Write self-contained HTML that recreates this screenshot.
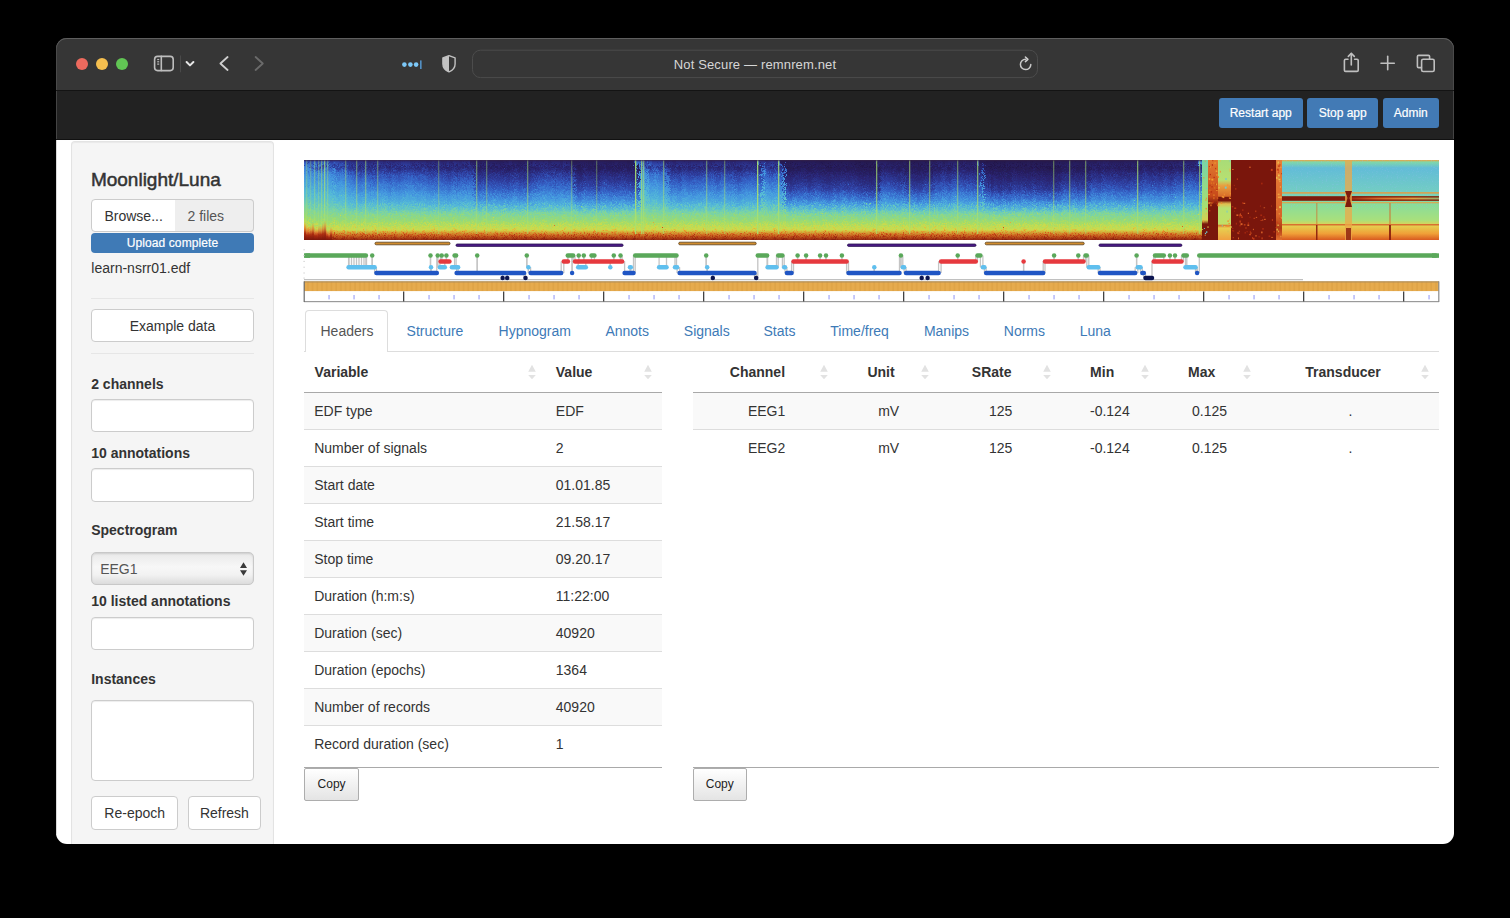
<!DOCTYPE html>
<html><head><meta charset="utf-8"><title>Moonlight/Luna</title>
<style>
html,body{margin:0;padding:0;background:#000;width:1510px;height:918px;overflow:hidden;}
body{position:relative;font-family:"Liberation Sans",sans-serif;}
.a{position:absolute;}
.t{position:absolute;white-space:nowrap;}
svg.a{overflow:visible;}
</style></head><body>
<div class="a" style="left:56.00px;top:38.00px;width:1398.00px;height:52.00px;background:#363636;border-radius:11px 11px 0 0;box-shadow:inset 0 1px 0 #5e5e5e, inset 1px 0 0 #4a4a4a, inset -1px 0 0 #4a4a4a;"></div>
<div class="a" style="left:56.00px;top:90.00px;width:1398.00px;height:1.00px;background:#141414;"></div>
<div class="a" style="left:56.00px;top:91.00px;width:1398.00px;height:49.00px;background:#222;box-shadow:inset 1px 0 0 #444, inset -1px 0 0 #444;"></div>
<div class="a" style="left:56.00px;top:139.00px;width:1398.00px;height:1.00px;background:#111;"></div>
<div class="a" style="left:75.8px;top:57.8px;width:12.4px;height:12.4px;border-radius:50%;background:#ed6a5e;"></div>
<div class="a" style="left:95.8px;top:57.8px;width:12.4px;height:12.4px;border-radius:50%;background:#f5bf4f;"></div>
<div class="a" style="left:115.8px;top:57.8px;width:12.4px;height:12.4px;border-radius:50%;background:#61c554;"></div>
<svg class="a" style="left:0;top:0" width="1510" height="100" viewBox="0 0 1510 100">
<g fill="none" stroke="#bdbdbd" stroke-width="1.6" stroke-linecap="round" stroke-linejoin="round">
<rect x="154.6" y="56.4" width="18.6" height="14.2" rx="3"/>
<line x1="161.3" y1="56.4" x2="161.3" y2="70.6"/>
</g>
<g stroke="#bdbdbd" stroke-width="1.2"><line x1="157.2" y1="59.5" x2="159.2" y2="59.5"/><line x1="157.2" y1="61.8" x2="159.2" y2="61.8"/><line x1="157.2" y1="64.1" x2="159.2" y2="64.1"/></g>
<line x1="180.5" y1="55.5" x2="180.5" y2="72.3" stroke="#4a4a4a" stroke-width="1"/>
<polyline points="186.6,62 190,65.4 193.4,62" fill="none" stroke="#e6e6e6" stroke-width="2" stroke-linecap="round" stroke-linejoin="round"/>
<polyline points="227.6,57 220.4,63.5 227.6,70" fill="none" stroke="#cfcfcf" stroke-width="1.8" stroke-linecap="round" stroke-linejoin="round"/>
<polyline points="255.6,57 262.8,63.5 255.6,70" fill="none" stroke="#6b6b6b" stroke-width="1.8" stroke-linecap="round" stroke-linejoin="round"/>
<circle cx="404.4" cy="64.6" r="2.3" fill="#7cc8f8"/><circle cx="410.4" cy="64.6" r="2.3" fill="#7cc8f8"/><circle cx="416.1" cy="64.6" r="2.3" fill="#7cc8f8"/>
<rect x="420.2" y="60.4" width="1.3" height="8.6" fill="#5aa6e6"/>
<path d="M449 55.7 L455.1 57.9 L455.1 64 Q455.1 69.3 449 71.9 Q442.9 69.3 442.9 64 L442.9 57.9 Z" fill="none" stroke="#c2c2c2" stroke-width="1.4" stroke-linejoin="round"/>
<path d="M449 55.7 L442.9 57.9 L442.9 64 Q442.9 69.3 449 71.9 Z" fill="#c2c2c2"/>
<rect x="472.5" y="50.2" width="565" height="27.4" rx="8" fill="#363636" stroke="#4c4c4c" stroke-width="1"/>
<path d="M1030.8 64.6 A5.2 5.2 0 1 1 1025.6 59.2" fill="none" stroke="#c8c8c8" stroke-width="1.5" stroke-linecap="round"/>
<polyline points="1025.4,57 1027.9,59.4 1025.4,61.6" fill="none" stroke="#d0d0d0" stroke-width="1.5" stroke-linecap="round" stroke-linejoin="round"/>
<g fill="none" stroke="#bfbfbf" stroke-width="1.6" stroke-linecap="round" stroke-linejoin="round">
<path d="M1348 59.2 L1345.6 59.2 Q1344.4 59.2 1344.4 60.4 L1344.4 70.2 Q1344.4 71.4 1345.6 71.4 L1357 71.4 Q1358.2 71.4 1358.2 70.2 L1358.2 60.4 Q1358.2 59.2 1357 59.2 L1354.6 59.2"/>
<line x1="1351.3" y1="53.6" x2="1351.3" y2="65"/>
<polyline points="1348.3,56.4 1351.3,53.4 1354.3,56.4"/>
<line x1="1381" y1="63.3" x2="1394.3" y2="63.3"/><line x1="1387.7" y1="56.4" x2="1387.7" y2="69.8"/>
<path d="M1421.4 67.6 L1418.6 67.6 Q1417.4 67.6 1417.4 66.4 L1417.4 56.6 Q1417.4 55.4 1418.6 55.4 L1428.4 55.4 Q1429.6 55.4 1429.6 56.6 L1429.6 59"/>
<rect x="1421.6" y="59.2" width="12.6" height="12.3" rx="1.6"/>
</g>
</svg>
<div class="t" style="left:472.50px;top:58.40px;font-size:13px;line-height:13px;color:#d6d6d6;width:565.00px;text-align:center;letter-spacing:0.15px;">Not Secure — remnrem.net</div>
<div class="a" style="left:1218.70px;top:98.00px;width:84.10px;height:29.70px;background:#427ab5;border-radius:3px;"></div>
<div class="t" style="left:1218.70px;top:106.84px;font-size:12px;line-height:12px;color:#fff;width:84.10px;text-align:center;-webkit-text-stroke:0.2px #fff;">Restart app</div>
<div class="a" style="left:1307.00px;top:98.00px;width:71.30px;height:29.70px;background:#427ab5;border-radius:3px;"></div>
<div class="t" style="left:1307.00px;top:106.84px;font-size:12px;line-height:12px;color:#fff;width:71.30px;text-align:center;-webkit-text-stroke:0.2px #fff;">Stop app</div>
<div class="a" style="left:1382.70px;top:98.00px;width:56.20px;height:29.70px;background:#427ab5;border-radius:3px;"></div>
<div class="t" style="left:1382.70px;top:106.84px;font-size:12px;line-height:12px;color:#fff;width:56.20px;text-align:center;-webkit-text-stroke:0.2px #fff;">Admin</div>
<div class="a" style="left:56.00px;top:140.00px;width:1398.00px;height:704.00px;background:#fff;border-radius:0 0 11px 11px;overflow:hidden;"></div>
<div class="a" style="left:56.00px;top:140.00px;width:1.00px;height:694.00px;background:#d8d8d8;"></div>
<div class="a" style="left:71.2px;top:140.5px;width:203px;height:703.5px;background:#f5f5f5;border:1px solid #e3e3e3;border-bottom:0;border-radius:4px 4px 0 0;box-sizing:border-box;box-shadow:inset 0 1px 1px rgba(0,0,0,.05);"></div>
<div class="t" style="left:90.90px;top:170.32px;font-size:19px;line-height:19px;color:#333;-webkit-text-stroke:0.5px #333;">Moonlight/Luna</div>
<div class="a" style="left:91.30px;top:199.40px;width:84.70px;height:32.80px;background:#fff;border:1px solid #ccc;box-sizing:border-box;border-radius:4px 0 0 4px;"></div>
<div class="a" style="left:175.00px;top:199.40px;width:1.00px;height:32.80px;background:#ccc;"></div>
<div class="t" style="left:91.30px;top:208.75px;font-size:14px;line-height:14px;color:#333;width:84.70px;text-align:center;">Browse...</div>
<div class="a" style="left:175.30px;top:199.40px;width:78.30px;height:32.80px;background:#eee;border:1px solid #ccc;border-left:0;box-sizing:border-box;border-radius:0 4px 4px 0;"></div>
<div class="t" style="left:187.50px;top:208.75px;font-size:14px;line-height:14px;color:#555;">2 files</div>
<div class="a" style="left:91.30px;top:232.70px;width:162.40px;height:20.00px;background:#3f7ab6;border-radius:4px;"></div>
<div class="t" style="left:91.30px;top:236.64px;font-size:12px;line-height:12px;color:#fff;width:162.40px;text-align:center;-webkit-text-stroke:0.2px #fff;letter-spacing:0.1px;">Upload complete</div>
<div class="t" style="left:91.30px;top:261.45px;font-size:14px;line-height:14px;color:#333;">learn-nsrr01.edf</div>
<div class="a" style="left:91.30px;top:298.00px;width:162.40px;height:1.00px;background:#e6e6e6;"></div>
<div class="a" style="left:91.30px;top:309.10px;width:162.40px;height:33.30px;background:#fff;border:1px solid #ccc;box-sizing:border-box;border-radius:4px;"></div>
<div class="t" style="left:91.30px;top:318.85px;font-size:14px;line-height:14px;color:#333;width:162.40px;text-align:center;">Example data</div>
<div class="a" style="left:91.30px;top:352.60px;width:162.40px;height:1.00px;background:#e6e6e6;"></div>
<div class="t" style="left:91.20px;top:376.95px;font-size:14px;line-height:14px;font-weight:700;color:#333;">2 channels</div>
<div class="a" style="left:91.20px;top:399.20px;width:162.40px;height:33.20px;background:#fff;border:1px solid #ccc;box-sizing:border-box;border-radius:4px;box-shadow:inset 0 1px 1px rgba(0,0,0,.075);"></div>
<div class="t" style="left:91.20px;top:446.15px;font-size:14px;line-height:14px;font-weight:700;color:#333;">10 annotations</div>
<div class="a" style="left:91.20px;top:468.00px;width:162.40px;height:33.50px;background:#fff;border:1px solid #ccc;box-sizing:border-box;border-radius:4px;box-shadow:inset 0 1px 1px rgba(0,0,0,.075);"></div>
<div class="t" style="left:91.20px;top:523.35px;font-size:14px;line-height:14px;font-weight:700;color:#333;">Spectrogram</div>
<div class="a" style="left:91.20px;top:552.20px;width:162.40px;height:33.20px;background:linear-gradient(#e9e9e9,#f7f7f7 45%,#f2f2f2 70%,#dcdcdc);border:1px solid #c8c8c8;box-sizing:border-box;border-radius:5px;box-shadow:inset 0 1px 2px rgba(0,0,0,.12);"></div>
<div class="t" style="left:100.20px;top:561.95px;font-size:14px;line-height:14px;color:#555;">EEG1</div>
<svg class="a" style="left:236px;top:558px" width="14" height="22"><path d="M7.5 4.3 L11 10 L4 10 Z M7.5 17.7 L11 12.3 L4 12.3 Z" fill="#3a3a3a"/></svg>
<div class="t" style="left:91.20px;top:594.35px;font-size:14px;line-height:14px;font-weight:700;color:#333;">10 listed annotations</div>
<div class="a" style="left:91.20px;top:616.50px;width:162.40px;height:33.20px;background:#fff;border:1px solid #ccc;box-sizing:border-box;border-radius:4px;box-shadow:inset 0 1px 1px rgba(0,0,0,.075);"></div>
<div class="t" style="left:91.20px;top:671.65px;font-size:14px;line-height:14px;font-weight:700;color:#333;">Instances</div>
<div class="a" style="left:91.20px;top:700.30px;width:162.40px;height:80.30px;background:#fff;border:1px solid #ccc;box-sizing:border-box;border-radius:4px;box-shadow:inset 0 1px 1px rgba(0,0,0,.075);"></div>
<div class="a" style="left:91.20px;top:796.00px;width:87.00px;height:33.70px;background:#fff;border:1px solid #ccc;box-sizing:border-box;border-radius:4px;"></div>
<div class="t" style="left:91.20px;top:806.15px;font-size:14px;line-height:14px;color:#333;width:87.00px;text-align:center;">Re-epoch</div>
<div class="a" style="left:187.60px;top:796.00px;width:73.60px;height:33.70px;background:#fff;border:1px solid #ccc;box-sizing:border-box;border-radius:4px;"></div>
<div class="t" style="left:187.60px;top:806.15px;font-size:14px;line-height:14px;color:#333;width:73.60px;text-align:center;">Refresh</div>
<svg class="a" style="left:0;top:0" width="1510" height="320" viewBox="0 0 1510 320">
<defs>
<linearGradient id="g0" x1="0" y1="0" x2="0" y2="1"><stop offset="0.00" stop-color="#2e3b99"/><stop offset="0.04" stop-color="#345ec1"/><stop offset="0.08" stop-color="#3e81d6"/><stop offset="0.12" stop-color="#408ada"/><stop offset="0.16" stop-color="#4392de"/><stop offset="0.20" stop-color="#469adf"/><stop offset="0.24" stop-color="#49a1dd"/><stop offset="0.28" stop-color="#4ca8dc"/><stop offset="0.32" stop-color="#4fafda"/><stop offset="0.36" stop-color="#53b6d9"/><stop offset="0.40" stop-color="#56bcd6"/><stop offset="0.44" stop-color="#5dc0cd"/><stop offset="0.48" stop-color="#63c5c4"/><stop offset="0.52" stop-color="#6ccbb8"/><stop offset="0.56" stop-color="#77d2a9"/><stop offset="0.60" stop-color="#82d598"/><stop offset="0.64" stop-color="#8cd788"/><stop offset="0.68" stop-color="#97da78"/><stop offset="0.72" stop-color="#a4dc67"/><stop offset="0.76" stop-color="#b8dc59"/><stop offset="0.80" stop-color="#ccdc4c"/><stop offset="0.84" stop-color="#ddc640"/><stop offset="0.88" stop-color="#ec9c2f"/><stop offset="0.92" stop-color="#db5d1b"/><stop offset="0.96" stop-color="#a83112"/><stop offset="1.00" stop-color="#8a1a0e"/></linearGradient>
<linearGradient id="g1" x1="0" y1="0" x2="0" y2="1"><stop offset="0.00" stop-color="#2e3d9c"/><stop offset="0.04" stop-color="#3563c7"/><stop offset="0.08" stop-color="#3f85d8"/><stop offset="0.12" stop-color="#418ddc"/><stop offset="0.16" stop-color="#4496df"/><stop offset="0.20" stop-color="#479cde"/><stop offset="0.24" stop-color="#4aa3dd"/><stop offset="0.28" stop-color="#4daadb"/><stop offset="0.32" stop-color="#50b1da"/><stop offset="0.36" stop-color="#54b7d8"/><stop offset="0.40" stop-color="#58bdd4"/><stop offset="0.44" stop-color="#5ec1cb"/><stop offset="0.48" stop-color="#65c6c2"/><stop offset="0.52" stop-color="#6dcbb6"/><stop offset="0.56" stop-color="#78d2a8"/><stop offset="0.60" stop-color="#82d597"/><stop offset="0.64" stop-color="#8dd887"/><stop offset="0.68" stop-color="#97da77"/><stop offset="0.72" stop-color="#a4dc67"/><stop offset="0.76" stop-color="#b8dc59"/><stop offset="0.80" stop-color="#ccdc4c"/><stop offset="0.84" stop-color="#ddc640"/><stop offset="0.88" stop-color="#ec9c2f"/><stop offset="0.92" stop-color="#db5d1b"/><stop offset="0.96" stop-color="#a83112"/><stop offset="1.00" stop-color="#8a1a0e"/></linearGradient>
<linearGradient id="g2" x1="0" y1="0" x2="0" y2="1"><stop offset="0.00" stop-color="#2d3893"/><stop offset="0.04" stop-color="#3255b8"/><stop offset="0.08" stop-color="#3b78d2"/><stop offset="0.12" stop-color="#3e83d7"/><stop offset="0.16" stop-color="#418cdb"/><stop offset="0.20" stop-color="#4395df"/><stop offset="0.24" stop-color="#479cde"/><stop offset="0.28" stop-color="#4aa3dd"/><stop offset="0.32" stop-color="#4dabdb"/><stop offset="0.36" stop-color="#51b2da"/><stop offset="0.40" stop-color="#54b9d8"/><stop offset="0.44" stop-color="#5abed1"/><stop offset="0.48" stop-color="#61c3c8"/><stop offset="0.52" stop-color="#6ac9bb"/><stop offset="0.56" stop-color="#76d1aa"/><stop offset="0.60" stop-color="#81d599"/><stop offset="0.64" stop-color="#8cd788"/><stop offset="0.68" stop-color="#96da78"/><stop offset="0.72" stop-color="#a4dc67"/><stop offset="0.76" stop-color="#b8dc59"/><stop offset="0.80" stop-color="#ccdc4c"/><stop offset="0.84" stop-color="#ddc640"/><stop offset="0.88" stop-color="#ec9c2f"/><stop offset="0.92" stop-color="#db5d1b"/><stop offset="0.96" stop-color="#a83112"/><stop offset="1.00" stop-color="#8a1a0e"/></linearGradient>
<linearGradient id="g3" x1="0" y1="0" x2="0" y2="1"><stop offset="0.00" stop-color="#2e3e9f"/><stop offset="0.04" stop-color="#376acb"/><stop offset="0.08" stop-color="#4088d9"/><stop offset="0.12" stop-color="#4291dd"/><stop offset="0.16" stop-color="#4598df"/><stop offset="0.20" stop-color="#489fde"/><stop offset="0.24" stop-color="#4ba5dc"/><stop offset="0.28" stop-color="#4eacdb"/><stop offset="0.32" stop-color="#51b3d9"/><stop offset="0.36" stop-color="#54b9d8"/><stop offset="0.40" stop-color="#5abed2"/><stop offset="0.44" stop-color="#60c2c9"/><stop offset="0.48" stop-color="#66c7c0"/><stop offset="0.52" stop-color="#6eccb5"/><stop offset="0.56" stop-color="#79d3a7"/><stop offset="0.60" stop-color="#83d597"/><stop offset="0.64" stop-color="#8dd887"/><stop offset="0.68" stop-color="#97da77"/><stop offset="0.72" stop-color="#a4dc67"/><stop offset="0.76" stop-color="#b8dc59"/><stop offset="0.80" stop-color="#ccdc4c"/><stop offset="0.84" stop-color="#ddc640"/><stop offset="0.88" stop-color="#ec9c2f"/><stop offset="0.92" stop-color="#db5d1b"/><stop offset="0.96" stop-color="#a83112"/><stop offset="1.00" stop-color="#8a1a0e"/></linearGradient>
<linearGradient id="g4" x1="0" y1="0" x2="0" y2="1"><stop offset="0.00" stop-color="#2d3996"/><stop offset="0.04" stop-color="#3359bc"/><stop offset="0.08" stop-color="#3c7dd4"/><stop offset="0.12" stop-color="#3f86d9"/><stop offset="0.16" stop-color="#428fdd"/><stop offset="0.20" stop-color="#4498df"/><stop offset="0.24" stop-color="#489fde"/><stop offset="0.28" stop-color="#4ba6dc"/><stop offset="0.32" stop-color="#4eaddb"/><stop offset="0.36" stop-color="#52b4d9"/><stop offset="0.40" stop-color="#55bbd8"/><stop offset="0.44" stop-color="#5bbfcf"/><stop offset="0.48" stop-color="#62c4c6"/><stop offset="0.52" stop-color="#6bcab9"/><stop offset="0.56" stop-color="#77d2a9"/><stop offset="0.60" stop-color="#82d598"/><stop offset="0.64" stop-color="#8cd788"/><stop offset="0.68" stop-color="#97da78"/><stop offset="0.72" stop-color="#a4dc67"/><stop offset="0.76" stop-color="#b8dc59"/><stop offset="0.80" stop-color="#ccdc4c"/><stop offset="0.84" stop-color="#ddc640"/><stop offset="0.88" stop-color="#ec9c2f"/><stop offset="0.92" stop-color="#db5d1b"/><stop offset="0.96" stop-color="#a83112"/><stop offset="1.00" stop-color="#8a1a0e"/></linearGradient>
<linearGradient id="g5" x1="0" y1="0" x2="0" y2="1"><stop offset="0.00" stop-color="#2c3188"/><stop offset="0.04" stop-color="#3045a8"/><stop offset="0.08" stop-color="#345fc2"/><stop offset="0.12" stop-color="#3a74d0"/><stop offset="0.16" stop-color="#3d7ed5"/><stop offset="0.20" stop-color="#4088d9"/><stop offset="0.24" stop-color="#4292de"/><stop offset="0.28" stop-color="#469ade"/><stop offset="0.32" stop-color="#49a2dd"/><stop offset="0.36" stop-color="#4daadb"/><stop offset="0.40" stop-color="#51b2da"/><stop offset="0.44" stop-color="#55bad8"/><stop offset="0.48" stop-color="#5bbfd0"/><stop offset="0.52" stop-color="#66c6c1"/><stop offset="0.56" stop-color="#73cfae"/><stop offset="0.60" stop-color="#80d59b"/><stop offset="0.64" stop-color="#8bd78a"/><stop offset="0.68" stop-color="#96da78"/><stop offset="0.72" stop-color="#a4dc67"/><stop offset="0.76" stop-color="#b8dc59"/><stop offset="0.80" stop-color="#ccdc4c"/><stop offset="0.84" stop-color="#ddc640"/><stop offset="0.88" stop-color="#ec9c2f"/><stop offset="0.92" stop-color="#db5d1b"/><stop offset="0.96" stop-color="#a83112"/><stop offset="1.00" stop-color="#8a1a0e"/></linearGradient>
<linearGradient id="g6" x1="0" y1="0" x2="0" y2="1"><stop offset="0.00" stop-color="#2d3690"/><stop offset="0.04" stop-color="#3250b3"/><stop offset="0.08" stop-color="#3971cf"/><stop offset="0.12" stop-color="#3d7fd5"/><stop offset="0.16" stop-color="#4088da"/><stop offset="0.20" stop-color="#4292de"/><stop offset="0.24" stop-color="#469adf"/><stop offset="0.28" stop-color="#49a1dd"/><stop offset="0.32" stop-color="#4ca8dc"/><stop offset="0.36" stop-color="#50b0da"/><stop offset="0.40" stop-color="#53b7d8"/><stop offset="0.44" stop-color="#58bdd4"/><stop offset="0.48" stop-color="#5fc2ca"/><stop offset="0.52" stop-color="#69c8bc"/><stop offset="0.56" stop-color="#75d1ab"/><stop offset="0.60" stop-color="#81d59a"/><stop offset="0.64" stop-color="#8cd789"/><stop offset="0.68" stop-color="#96da78"/><stop offset="0.72" stop-color="#a4dc67"/><stop offset="0.76" stop-color="#b8dc59"/><stop offset="0.80" stop-color="#ccdc4c"/><stop offset="0.84" stop-color="#ddc640"/><stop offset="0.88" stop-color="#ec9c2f"/><stop offset="0.92" stop-color="#db5d1b"/><stop offset="0.96" stop-color="#a83112"/><stop offset="1.00" stop-color="#8a1a0e"/></linearGradient>
<linearGradient id="g7" x1="0" y1="0" x2="0" y2="1"><stop offset="0.00" stop-color="#2d348e"/><stop offset="0.04" stop-color="#314daf"/><stop offset="0.08" stop-color="#376acb"/><stop offset="0.12" stop-color="#3c7bd4"/><stop offset="0.16" stop-color="#3f85d8"/><stop offset="0.20" stop-color="#418edc"/><stop offset="0.24" stop-color="#4497df"/><stop offset="0.28" stop-color="#489fde"/><stop offset="0.32" stop-color="#4ba6dc"/><stop offset="0.36" stop-color="#4faeda"/><stop offset="0.40" stop-color="#53b5d9"/><stop offset="0.44" stop-color="#57bcd6"/><stop offset="0.48" stop-color="#5ec1cc"/><stop offset="0.52" stop-color="#68c8be"/><stop offset="0.56" stop-color="#75d0ac"/><stop offset="0.60" stop-color="#81d59a"/><stop offset="0.64" stop-color="#8bd789"/><stop offset="0.68" stop-color="#96da78"/><stop offset="0.72" stop-color="#a4dc67"/><stop offset="0.76" stop-color="#b8dc59"/><stop offset="0.80" stop-color="#ccdc4c"/><stop offset="0.84" stop-color="#ddc640"/><stop offset="0.88" stop-color="#ec9c2f"/><stop offset="0.92" stop-color="#db5d1b"/><stop offset="0.96" stop-color="#a83112"/><stop offset="1.00" stop-color="#8a1a0e"/></linearGradient>
<linearGradient id="g8" x1="0" y1="0" x2="0" y2="1"><stop offset="0.00" stop-color="#2b2e82"/><stop offset="0.04" stop-color="#2e3fa1"/><stop offset="0.08" stop-color="#3356b9"/><stop offset="0.12" stop-color="#376ccd"/><stop offset="0.16" stop-color="#3b77d1"/><stop offset="0.20" stop-color="#3e81d6"/><stop offset="0.24" stop-color="#418bdb"/><stop offset="0.28" stop-color="#4496df"/><stop offset="0.32" stop-color="#479ede"/><stop offset="0.36" stop-color="#4ba6dc"/><stop offset="0.40" stop-color="#4faeda"/><stop offset="0.44" stop-color="#53b6d9"/><stop offset="0.48" stop-color="#58bdd3"/><stop offset="0.52" stop-color="#64c5c4"/><stop offset="0.56" stop-color="#72cfb0"/><stop offset="0.60" stop-color="#7fd59d"/><stop offset="0.64" stop-color="#8bd78b"/><stop offset="0.68" stop-color="#96d979"/><stop offset="0.72" stop-color="#a4dc67"/><stop offset="0.76" stop-color="#b8dc59"/><stop offset="0.80" stop-color="#ccdc4c"/><stop offset="0.84" stop-color="#ddc640"/><stop offset="0.88" stop-color="#ec9c2f"/><stop offset="0.92" stop-color="#db5d1b"/><stop offset="0.96" stop-color="#a83112"/><stop offset="1.00" stop-color="#8a1a0e"/></linearGradient>
<linearGradient id="g9" x1="0" y1="0" x2="0" y2="1"><stop offset="0.00" stop-color="#2b2a7b"/><stop offset="0.04" stop-color="#2d3895"/><stop offset="0.08" stop-color="#304aad"/><stop offset="0.12" stop-color="#345ec2"/><stop offset="0.16" stop-color="#376bcc"/><stop offset="0.20" stop-color="#3a76d1"/><stop offset="0.24" stop-color="#3e81d6"/><stop offset="0.28" stop-color="#418ddb"/><stop offset="0.32" stop-color="#4497df"/><stop offset="0.36" stop-color="#48a0dd"/><stop offset="0.40" stop-color="#4da9db"/><stop offset="0.44" stop-color="#51b1da"/><stop offset="0.48" stop-color="#55bad8"/><stop offset="0.52" stop-color="#60c3c8"/><stop offset="0.56" stop-color="#70cdb2"/><stop offset="0.60" stop-color="#7ed49e"/><stop offset="0.64" stop-color="#8ad78c"/><stop offset="0.68" stop-color="#96d979"/><stop offset="0.72" stop-color="#a4dc67"/><stop offset="0.76" stop-color="#b8dc59"/><stop offset="0.80" stop-color="#ccdc4c"/><stop offset="0.84" stop-color="#ddc640"/><stop offset="0.88" stop-color="#ec9c2f"/><stop offset="0.92" stop-color="#db5d1b"/><stop offset="0.96" stop-color="#a83112"/><stop offset="1.00" stop-color="#8a1a0e"/></linearGradient>
<linearGradient id="g10" x1="0" y1="0" x2="0" y2="1"><stop offset="0.00" stop-color="#2a2878"/><stop offset="0.04" stop-color="#2d3691"/><stop offset="0.08" stop-color="#3046a9"/><stop offset="0.12" stop-color="#335abd"/><stop offset="0.16" stop-color="#3667ca"/><stop offset="0.20" stop-color="#3973d0"/><stop offset="0.24" stop-color="#3d7ed5"/><stop offset="0.28" stop-color="#4089da"/><stop offset="0.32" stop-color="#4395df"/><stop offset="0.36" stop-color="#479ede"/><stop offset="0.40" stop-color="#4ca7dc"/><stop offset="0.44" stop-color="#50b0da"/><stop offset="0.48" stop-color="#54b9d8"/><stop offset="0.52" stop-color="#5fc2ca"/><stop offset="0.56" stop-color="#6fcdb3"/><stop offset="0.60" stop-color="#7ed49f"/><stop offset="0.64" stop-color="#8ad78c"/><stop offset="0.68" stop-color="#96d979"/><stop offset="0.72" stop-color="#a4dc67"/><stop offset="0.76" stop-color="#b8dc59"/><stop offset="0.80" stop-color="#ccdc4c"/><stop offset="0.84" stop-color="#ddc640"/><stop offset="0.88" stop-color="#ec9c2f"/><stop offset="0.92" stop-color="#db5d1b"/><stop offset="0.96" stop-color="#a83112"/><stop offset="1.00" stop-color="#8a1a0e"/></linearGradient>
<linearGradient id="g11" x1="0" y1="0" x2="0" y2="1"><stop offset="0.00" stop-color="#2a2673"/><stop offset="0.04" stop-color="#2c338a"/><stop offset="0.08" stop-color="#2f40a2"/><stop offset="0.12" stop-color="#3251b4"/><stop offset="0.16" stop-color="#3561c4"/><stop offset="0.20" stop-color="#376bcc"/><stop offset="0.24" stop-color="#3b77d2"/><stop offset="0.28" stop-color="#3e83d7"/><stop offset="0.32" stop-color="#428fdc"/><stop offset="0.36" stop-color="#459adf"/><stop offset="0.40" stop-color="#4aa3dd"/><stop offset="0.44" stop-color="#4eacdb"/><stop offset="0.48" stop-color="#53b6d9"/><stop offset="0.52" stop-color="#5dc1cd"/><stop offset="0.56" stop-color="#6eccb5"/><stop offset="0.60" stop-color="#7dd4a0"/><stop offset="0.64" stop-color="#89d78d"/><stop offset="0.68" stop-color="#96d979"/><stop offset="0.72" stop-color="#a4dc67"/><stop offset="0.76" stop-color="#b8dc59"/><stop offset="0.80" stop-color="#ccdc4c"/><stop offset="0.84" stop-color="#ddc640"/><stop offset="0.88" stop-color="#ec9c2f"/><stop offset="0.92" stop-color="#db5d1b"/><stop offset="0.96" stop-color="#a83112"/><stop offset="1.00" stop-color="#8a1a0e"/></linearGradient>
<linearGradient id="g12" x1="0" y1="0" x2="0" y2="1"><stop offset="0.00" stop-color="#29236e"/><stop offset="0.04" stop-color="#2c2f84"/><stop offset="0.08" stop-color="#2e3b99"/><stop offset="0.12" stop-color="#304aac"/><stop offset="0.16" stop-color="#335abe"/><stop offset="0.20" stop-color="#3564c8"/><stop offset="0.24" stop-color="#3970ce"/><stop offset="0.28" stop-color="#3c7cd4"/><stop offset="0.32" stop-color="#4089da"/><stop offset="0.36" stop-color="#4395df"/><stop offset="0.40" stop-color="#489fdd"/><stop offset="0.44" stop-color="#4da9db"/><stop offset="0.48" stop-color="#51b3d9"/><stop offset="0.52" stop-color="#5bbfd0"/><stop offset="0.56" stop-color="#6dcbb7"/><stop offset="0.60" stop-color="#7cd4a1"/><stop offset="0.64" stop-color="#89d78d"/><stop offset="0.68" stop-color="#95d979"/><stop offset="0.72" stop-color="#a4dc67"/><stop offset="0.76" stop-color="#b8dc59"/><stop offset="0.80" stop-color="#ccdc4c"/><stop offset="0.84" stop-color="#ddc640"/><stop offset="0.88" stop-color="#ec9c2f"/><stop offset="0.92" stop-color="#db5d1b"/><stop offset="0.96" stop-color="#a83112"/><stop offset="1.00" stop-color="#8a1a0e"/></linearGradient>
<linearGradient id="g13" x1="0" y1="0" x2="0" y2="1"><stop offset="0.00" stop-color="#2a2776"/><stop offset="0.04" stop-color="#2d348e"/><stop offset="0.08" stop-color="#2f43a5"/><stop offset="0.12" stop-color="#3355b9"/><stop offset="0.16" stop-color="#3564c8"/><stop offset="0.20" stop-color="#386fce"/><stop offset="0.24" stop-color="#3c7bd3"/><stop offset="0.28" stop-color="#3f86d8"/><stop offset="0.32" stop-color="#4292de"/><stop offset="0.36" stop-color="#469cde"/><stop offset="0.40" stop-color="#4ba5dc"/><stop offset="0.44" stop-color="#4faeda"/><stop offset="0.48" stop-color="#53b7d8"/><stop offset="0.52" stop-color="#5ec1cc"/><stop offset="0.56" stop-color="#6fccb4"/><stop offset="0.60" stop-color="#7dd4a0"/><stop offset="0.64" stop-color="#89d78c"/><stop offset="0.68" stop-color="#96d979"/><stop offset="0.72" stop-color="#a4dc67"/><stop offset="0.76" stop-color="#b8dc59"/><stop offset="0.80" stop-color="#ccdc4c"/><stop offset="0.84" stop-color="#ddc640"/><stop offset="0.88" stop-color="#ec9c2f"/><stop offset="0.92" stop-color="#db5d1b"/><stop offset="0.96" stop-color="#a83112"/><stop offset="1.00" stop-color="#8a1a0e"/></linearGradient>
<linearGradient id="g14" x1="0" y1="0" x2="0" y2="1"><stop offset="0.00" stop-color="#29226a"/><stop offset="0.04" stop-color="#2b2c7e"/><stop offset="0.08" stop-color="#2d3792"/><stop offset="0.12" stop-color="#2f43a5"/><stop offset="0.16" stop-color="#3252b5"/><stop offset="0.20" stop-color="#345ec1"/><stop offset="0.24" stop-color="#3669cb"/><stop offset="0.28" stop-color="#3a76d1"/><stop offset="0.32" stop-color="#3e83d7"/><stop offset="0.36" stop-color="#4290dd"/><stop offset="0.40" stop-color="#469bde"/><stop offset="0.44" stop-color="#4ba5dc"/><stop offset="0.48" stop-color="#50b0da"/><stop offset="0.52" stop-color="#59bed3"/><stop offset="0.56" stop-color="#6ccab9"/><stop offset="0.60" stop-color="#7bd4a3"/><stop offset="0.64" stop-color="#88d78e"/><stop offset="0.68" stop-color="#95d97a"/><stop offset="0.72" stop-color="#a4dc67"/><stop offset="0.76" stop-color="#b8dc59"/><stop offset="0.80" stop-color="#ccdc4c"/><stop offset="0.84" stop-color="#ddc640"/><stop offset="0.88" stop-color="#ec9c2f"/><stop offset="0.92" stop-color="#db5d1b"/><stop offset="0.96" stop-color="#a83112"/><stop offset="1.00" stop-color="#8a1a0e"/></linearGradient>
<linearGradient id="g15" x1="0" y1="0" x2="0" y2="1"><stop offset="0.00" stop-color="#2a2471"/><stop offset="0.04" stop-color="#2c3187"/><stop offset="0.08" stop-color="#2e3d9d"/><stop offset="0.12" stop-color="#314db0"/><stop offset="0.16" stop-color="#345dc1"/><stop offset="0.20" stop-color="#3667ca"/><stop offset="0.24" stop-color="#3a74d0"/><stop offset="0.28" stop-color="#3d80d6"/><stop offset="0.32" stop-color="#418cdb"/><stop offset="0.36" stop-color="#4497df"/><stop offset="0.40" stop-color="#49a1dd"/><stop offset="0.44" stop-color="#4eabdb"/><stop offset="0.48" stop-color="#52b4d9"/><stop offset="0.52" stop-color="#5cc0ce"/><stop offset="0.56" stop-color="#6eccb6"/><stop offset="0.60" stop-color="#7cd4a1"/><stop offset="0.64" stop-color="#89d78d"/><stop offset="0.68" stop-color="#95d979"/><stop offset="0.72" stop-color="#a4dc67"/><stop offset="0.76" stop-color="#b8dc59"/><stop offset="0.80" stop-color="#ccdc4c"/><stop offset="0.84" stop-color="#ddc640"/><stop offset="0.88" stop-color="#ec9c2f"/><stop offset="0.92" stop-color="#db5d1b"/><stop offset="0.96" stop-color="#a83112"/><stop offset="1.00" stop-color="#8a1a0e"/></linearGradient>
<linearGradient id="g16" x1="0" y1="0" x2="0" y2="1"><stop offset="0.00" stop-color="#29226c"/><stop offset="0.04" stop-color="#2b2d81"/><stop offset="0.08" stop-color="#2d3996"/><stop offset="0.12" stop-color="#3046a9"/><stop offset="0.16" stop-color="#3356b9"/><stop offset="0.20" stop-color="#3561c5"/><stop offset="0.24" stop-color="#376ccd"/><stop offset="0.28" stop-color="#3b79d2"/><stop offset="0.32" stop-color="#3f86d8"/><stop offset="0.36" stop-color="#4392de"/><stop offset="0.40" stop-color="#479dde"/><stop offset="0.44" stop-color="#4ca7dc"/><stop offset="0.48" stop-color="#51b1da"/><stop offset="0.52" stop-color="#5abed2"/><stop offset="0.56" stop-color="#6ccbb8"/><stop offset="0.60" stop-color="#7cd4a2"/><stop offset="0.64" stop-color="#88d78e"/><stop offset="0.68" stop-color="#95d97a"/><stop offset="0.72" stop-color="#a4dc67"/><stop offset="0.76" stop-color="#b8dc59"/><stop offset="0.80" stop-color="#ccdc4c"/><stop offset="0.84" stop-color="#ddc640"/><stop offset="0.88" stop-color="#ec9c2f"/><stop offset="0.92" stop-color="#db5d1b"/><stop offset="0.96" stop-color="#a83112"/><stop offset="1.00" stop-color="#8a1a0e"/></linearGradient>
<linearGradient id="g17" x1="0" y1="0" x2="0" y2="1"><stop offset="0.00" stop-color="#282066"/><stop offset="0.04" stop-color="#2a2878"/><stop offset="0.08" stop-color="#2c338b"/><stop offset="0.12" stop-color="#2e3d9d"/><stop offset="0.16" stop-color="#304aad"/><stop offset="0.20" stop-color="#3357ba"/><stop offset="0.24" stop-color="#3562c6"/><stop offset="0.28" stop-color="#386fce"/><stop offset="0.32" stop-color="#3c7cd4"/><stop offset="0.36" stop-color="#408ada"/><stop offset="0.40" stop-color="#4497df"/><stop offset="0.44" stop-color="#49a2dd"/><stop offset="0.48" stop-color="#4faddb"/><stop offset="0.52" stop-color="#57bcd6"/><stop offset="0.56" stop-color="#6ac9bb"/><stop offset="0.60" stop-color="#7bd4a4"/><stop offset="0.64" stop-color="#88d78f"/><stop offset="0.68" stop-color="#95d97a"/><stop offset="0.72" stop-color="#a4dc67"/><stop offset="0.76" stop-color="#b8dc59"/><stop offset="0.80" stop-color="#ccdc4c"/><stop offset="0.84" stop-color="#ddc640"/><stop offset="0.88" stop-color="#ec9c2f"/><stop offset="0.92" stop-color="#db5d1b"/><stop offset="0.96" stop-color="#a83112"/><stop offset="1.00" stop-color="#8a1a0e"/></linearGradient>
<linearGradient id="g18" x1="0" y1="0" x2="0" y2="1"><stop offset="0.00" stop-color="#282168"/><stop offset="0.04" stop-color="#2b2a7b"/><stop offset="0.08" stop-color="#2d358e"/><stop offset="0.12" stop-color="#2e3fa1"/><stop offset="0.16" stop-color="#314eb1"/><stop offset="0.20" stop-color="#335abe"/><stop offset="0.24" stop-color="#3565c9"/><stop offset="0.28" stop-color="#3972cf"/><stop offset="0.32" stop-color="#3d7fd5"/><stop offset="0.36" stop-color="#418ddc"/><stop offset="0.40" stop-color="#4599df"/><stop offset="0.44" stop-color="#4aa4dd"/><stop offset="0.48" stop-color="#4faeda"/><stop offset="0.52" stop-color="#58bdd5"/><stop offset="0.56" stop-color="#6bcaba"/><stop offset="0.60" stop-color="#7bd4a3"/><stop offset="0.64" stop-color="#88d78f"/><stop offset="0.68" stop-color="#95d97a"/><stop offset="0.72" stop-color="#a4dc67"/><stop offset="0.76" stop-color="#b8dc59"/><stop offset="0.80" stop-color="#ccdc4c"/><stop offset="0.84" stop-color="#ddc640"/><stop offset="0.88" stop-color="#ec9c2f"/><stop offset="0.92" stop-color="#db5d1b"/><stop offset="0.96" stop-color="#a83112"/><stop offset="1.00" stop-color="#8a1a0e"/></linearGradient>
<linearGradient id="g19" x1="0" y1="0" x2="0" y2="1"><stop offset="0.00" stop-color="#282064"/><stop offset="0.04" stop-color="#2a2775"/><stop offset="0.08" stop-color="#2c3187"/><stop offset="0.12" stop-color="#2e3b99"/><stop offset="0.16" stop-color="#3047a9"/><stop offset="0.20" stop-color="#3254b7"/><stop offset="0.24" stop-color="#345fc2"/><stop offset="0.28" stop-color="#376bcc"/><stop offset="0.32" stop-color="#3b79d2"/><stop offset="0.36" stop-color="#3f87d9"/><stop offset="0.40" stop-color="#4395df"/><stop offset="0.44" stop-color="#49a0dd"/><stop offset="0.48" stop-color="#4eabdb"/><stop offset="0.52" stop-color="#56bcd7"/><stop offset="0.56" stop-color="#6ac9bb"/><stop offset="0.60" stop-color="#7ad4a4"/><stop offset="0.64" stop-color="#88d68f"/><stop offset="0.68" stop-color="#95d97a"/><stop offset="0.72" stop-color="#a4dc67"/><stop offset="0.76" stop-color="#b8dc59"/><stop offset="0.80" stop-color="#ccdc4c"/><stop offset="0.84" stop-color="#ddc640"/><stop offset="0.88" stop-color="#ec9c2f"/><stop offset="0.92" stop-color="#db5d1b"/><stop offset="0.96" stop-color="#a83112"/><stop offset="1.00" stop-color="#8a1a0e"/></linearGradient>
<linearGradient id="g20" x1="0" y1="0" x2="0" y2="1"><stop offset="0.00" stop-color="#261c59"/><stop offset="0.04" stop-color="#282167"/><stop offset="0.08" stop-color="#2a2675"/><stop offset="0.12" stop-color="#2b2f83"/><stop offset="0.16" stop-color="#2d3792"/><stop offset="0.20" stop-color="#2e3fa0"/><stop offset="0.24" stop-color="#304aad"/><stop offset="0.28" stop-color="#3357bb"/><stop offset="0.32" stop-color="#3564c8"/><stop offset="0.36" stop-color="#3a74d0"/><stop offset="0.40" stop-color="#3f85d8"/><stop offset="0.44" stop-color="#4395df"/><stop offset="0.48" stop-color="#49a2dd"/><stop offset="0.52" stop-color="#52b5d9"/><stop offset="0.56" stop-color="#66c6c1"/><stop offset="0.60" stop-color="#78d2a8"/><stop offset="0.64" stop-color="#86d691"/><stop offset="0.68" stop-color="#95d97b"/><stop offset="0.72" stop-color="#a4dc67"/><stop offset="0.76" stop-color="#b8dc59"/><stop offset="0.80" stop-color="#ccdc4c"/><stop offset="0.84" stop-color="#ddc640"/><stop offset="0.88" stop-color="#ec9c2f"/><stop offset="0.92" stop-color="#db5d1b"/><stop offset="0.96" stop-color="#a83112"/><stop offset="1.00" stop-color="#8a1a0e"/></linearGradient>
<linearGradient id="g21" x1="0" y1="0" x2="0" y2="1"><stop offset="0.00" stop-color="#251b57"/><stop offset="0.04" stop-color="#282064"/><stop offset="0.08" stop-color="#2a2572"/><stop offset="0.12" stop-color="#2b2d80"/><stop offset="0.16" stop-color="#2d358e"/><stop offset="0.20" stop-color="#2e3c9c"/><stop offset="0.24" stop-color="#3047a9"/><stop offset="0.28" stop-color="#3254b7"/><stop offset="0.32" stop-color="#3561c5"/><stop offset="0.36" stop-color="#3971cf"/><stop offset="0.40" stop-color="#3e82d7"/><stop offset="0.44" stop-color="#4393de"/><stop offset="0.48" stop-color="#49a1dd"/><stop offset="0.52" stop-color="#52b4d9"/><stop offset="0.56" stop-color="#65c6c2"/><stop offset="0.60" stop-color="#78d2a8"/><stop offset="0.64" stop-color="#86d692"/><stop offset="0.68" stop-color="#94d97b"/><stop offset="0.72" stop-color="#a4dc67"/><stop offset="0.76" stop-color="#b8dc59"/><stop offset="0.80" stop-color="#ccdc4c"/><stop offset="0.84" stop-color="#ddc640"/><stop offset="0.88" stop-color="#ec9c2f"/><stop offset="0.92" stop-color="#db5d1b"/><stop offset="0.96" stop-color="#a83112"/><stop offset="1.00" stop-color="#8a1a0e"/></linearGradient>
<linearGradient id="g22" x1="0" y1="0" x2="0" y2="1"><stop offset="0.00" stop-color="#261c5a"/><stop offset="0.04" stop-color="#282169"/><stop offset="0.08" stop-color="#2a2878"/><stop offset="0.12" stop-color="#2c3087"/><stop offset="0.16" stop-color="#2d3996"/><stop offset="0.20" stop-color="#2f42a4"/><stop offset="0.24" stop-color="#314eb1"/><stop offset="0.28" stop-color="#335bbe"/><stop offset="0.32" stop-color="#3668ca"/><stop offset="0.36" stop-color="#3b78d2"/><stop offset="0.40" stop-color="#3f88d9"/><stop offset="0.44" stop-color="#4497df"/><stop offset="0.48" stop-color="#4aa4dd"/><stop offset="0.52" stop-color="#53b6d9"/><stop offset="0.56" stop-color="#66c7c0"/><stop offset="0.60" stop-color="#78d3a7"/><stop offset="0.64" stop-color="#86d691"/><stop offset="0.68" stop-color="#95d97b"/><stop offset="0.72" stop-color="#a4dc67"/><stop offset="0.76" stop-color="#b8dc59"/><stop offset="0.80" stop-color="#ccdc4c"/><stop offset="0.84" stop-color="#ddc640"/><stop offset="0.88" stop-color="#ec9c2f"/><stop offset="0.92" stop-color="#db5d1b"/><stop offset="0.96" stop-color="#a83112"/><stop offset="1.00" stop-color="#8a1a0e"/></linearGradient>
<linearGradient id="g23" x1="0" y1="0" x2="0" y2="1"><stop offset="0.00" stop-color="#261d5c"/><stop offset="0.04" stop-color="#29226b"/><stop offset="0.08" stop-color="#2b2a7a"/><stop offset="0.12" stop-color="#2c328a"/><stop offset="0.16" stop-color="#2e3b9a"/><stop offset="0.20" stop-color="#3045a8"/><stop offset="0.24" stop-color="#3251b4"/><stop offset="0.28" stop-color="#345ec1"/><stop offset="0.32" stop-color="#376bcc"/><stop offset="0.36" stop-color="#3c7bd3"/><stop offset="0.40" stop-color="#408ada"/><stop offset="0.44" stop-color="#4599df"/><stop offset="0.48" stop-color="#4ba5dc"/><stop offset="0.52" stop-color="#53b7d8"/><stop offset="0.56" stop-color="#67c7bf"/><stop offset="0.60" stop-color="#79d3a7"/><stop offset="0.64" stop-color="#87d691"/><stop offset="0.68" stop-color="#95d97b"/><stop offset="0.72" stop-color="#a4dc67"/><stop offset="0.76" stop-color="#b8dc59"/><stop offset="0.80" stop-color="#ccdc4c"/><stop offset="0.84" stop-color="#ddc640"/><stop offset="0.88" stop-color="#ec9c2f"/><stop offset="0.92" stop-color="#db5d1b"/><stop offset="0.96" stop-color="#a83112"/><stop offset="1.00" stop-color="#8a1a0e"/></linearGradient>
<linearGradient id="g24" x1="0" y1="0" x2="0" y2="1"><stop offset="0.00" stop-color="#251b56"/><stop offset="0.04" stop-color="#271f62"/><stop offset="0.08" stop-color="#29236f"/><stop offset="0.12" stop-color="#2b2b7d"/><stop offset="0.16" stop-color="#2c328a"/><stop offset="0.20" stop-color="#2e3a98"/><stop offset="0.24" stop-color="#2f43a5"/><stop offset="0.28" stop-color="#3251b3"/><stop offset="0.32" stop-color="#345ec2"/><stop offset="0.36" stop-color="#386ecd"/><stop offset="0.40" stop-color="#3d7fd5"/><stop offset="0.44" stop-color="#4290dd"/><stop offset="0.48" stop-color="#489fdd"/><stop offset="0.52" stop-color="#51b2d9"/><stop offset="0.56" stop-color="#64c5c3"/><stop offset="0.60" stop-color="#77d2a9"/><stop offset="0.64" stop-color="#86d692"/><stop offset="0.68" stop-color="#94d97b"/><stop offset="0.72" stop-color="#a4dc67"/><stop offset="0.76" stop-color="#b8dc59"/><stop offset="0.80" stop-color="#ccdc4c"/><stop offset="0.84" stop-color="#ddc640"/><stop offset="0.88" stop-color="#ec9c2f"/><stop offset="0.92" stop-color="#db5d1b"/><stop offset="0.96" stop-color="#a83112"/><stop offset="1.00" stop-color="#8a1a0e"/></linearGradient>
<linearGradient id="g25" x1="0" y1="0" x2="0" y2="1"><stop offset="0.00" stop-color="#271e60"/><stop offset="0.04" stop-color="#2a2470"/><stop offset="0.08" stop-color="#2b2d81"/><stop offset="0.12" stop-color="#2d3691"/><stop offset="0.16" stop-color="#2f40a2"/><stop offset="0.20" stop-color="#314daf"/><stop offset="0.24" stop-color="#3358bb"/><stop offset="0.28" stop-color="#3564c8"/><stop offset="0.32" stop-color="#3972cf"/><stop offset="0.36" stop-color="#3e81d6"/><stop offset="0.40" stop-color="#4290dd"/><stop offset="0.44" stop-color="#479dde"/><stop offset="0.48" stop-color="#4ca8dc"/><stop offset="0.52" stop-color="#54b9d8"/><stop offset="0.56" stop-color="#68c8bd"/><stop offset="0.60" stop-color="#79d3a6"/><stop offset="0.64" stop-color="#87d690"/><stop offset="0.68" stop-color="#95d97a"/><stop offset="0.72" stop-color="#a4dc67"/><stop offset="0.76" stop-color="#b8dc59"/><stop offset="0.80" stop-color="#ccdc4c"/><stop offset="0.84" stop-color="#ddc640"/><stop offset="0.88" stop-color="#ec9c2f"/><stop offset="0.92" stop-color="#db5d1b"/><stop offset="0.96" stop-color="#a83112"/><stop offset="1.00" stop-color="#8a1a0e"/></linearGradient>
<linearGradient id="g26" x1="0" y1="0" x2="0" y2="1"><stop offset="0.00" stop-color="#271f62"/><stop offset="0.04" stop-color="#2a2573"/><stop offset="0.08" stop-color="#2c2f84"/><stop offset="0.12" stop-color="#2d3995"/><stop offset="0.16" stop-color="#2f43a5"/><stop offset="0.20" stop-color="#3250b3"/><stop offset="0.24" stop-color="#345bbf"/><stop offset="0.28" stop-color="#3667ca"/><stop offset="0.32" stop-color="#3a76d1"/><stop offset="0.36" stop-color="#3e84d7"/><stop offset="0.40" stop-color="#4392de"/><stop offset="0.44" stop-color="#489ede"/><stop offset="0.48" stop-color="#4daadb"/><stop offset="0.52" stop-color="#55bad8"/><stop offset="0.56" stop-color="#69c9bc"/><stop offset="0.60" stop-color="#7ad4a5"/><stop offset="0.64" stop-color="#87d690"/><stop offset="0.68" stop-color="#95d97a"/><stop offset="0.72" stop-color="#a4dc67"/><stop offset="0.76" stop-color="#b8dc59"/><stop offset="0.80" stop-color="#ccdc4c"/><stop offset="0.84" stop-color="#ddc640"/><stop offset="0.88" stop-color="#ec9c2f"/><stop offset="0.92" stop-color="#db5d1b"/><stop offset="0.96" stop-color="#a83112"/><stop offset="1.00" stop-color="#8a1a0e"/></linearGradient>
<linearGradient id="g27" x1="0" y1="0" x2="0" y2="1"><stop offset="0.00" stop-color="#271e5e"/><stop offset="0.04" stop-color="#29236d"/><stop offset="0.08" stop-color="#2b2b7d"/><stop offset="0.12" stop-color="#2d348e"/><stop offset="0.16" stop-color="#2e3d9e"/><stop offset="0.20" stop-color="#3049ab"/><stop offset="0.24" stop-color="#3255b8"/><stop offset="0.28" stop-color="#3561c5"/><stop offset="0.32" stop-color="#386fce"/><stop offset="0.36" stop-color="#3d7ed5"/><stop offset="0.40" stop-color="#418ddc"/><stop offset="0.44" stop-color="#469bde"/><stop offset="0.48" stop-color="#4ca7dc"/><stop offset="0.52" stop-color="#54b8d8"/><stop offset="0.56" stop-color="#68c8be"/><stop offset="0.60" stop-color="#79d3a6"/><stop offset="0.64" stop-color="#87d690"/><stop offset="0.68" stop-color="#95d97a"/><stop offset="0.72" stop-color="#a4dc67"/><stop offset="0.76" stop-color="#b8dc59"/><stop offset="0.80" stop-color="#ccdc4c"/><stop offset="0.84" stop-color="#ddc640"/><stop offset="0.88" stop-color="#ec9c2f"/><stop offset="0.92" stop-color="#db5d1b"/><stop offset="0.96" stop-color="#a83112"/><stop offset="1.00" stop-color="#8a1a0e"/></linearGradient>
<linearGradient id="g28" x1="0" y1="0" x2="0" y2="1"><stop offset="0.00" stop-color="#241950"/><stop offset="0.04" stop-color="#261d5b"/><stop offset="0.08" stop-color="#282066"/><stop offset="0.12" stop-color="#2a2471"/><stop offset="0.16" stop-color="#2b2b7d"/><stop offset="0.20" stop-color="#2c3188"/><stop offset="0.24" stop-color="#2d3894"/><stop offset="0.28" stop-color="#2f42a4"/><stop offset="0.32" stop-color="#3251b4"/><stop offset="0.36" stop-color="#3561c4"/><stop offset="0.40" stop-color="#3973d0"/><stop offset="0.44" stop-color="#3f86d9"/><stop offset="0.48" stop-color="#4599df"/><stop offset="0.52" stop-color="#4faeda"/><stop offset="0.56" stop-color="#62c4c6"/><stop offset="0.60" stop-color="#76d1ab"/><stop offset="0.64" stop-color="#85d694"/><stop offset="0.68" stop-color="#94d97c"/><stop offset="0.72" stop-color="#a4dc67"/><stop offset="0.76" stop-color="#b8dc59"/><stop offset="0.80" stop-color="#ccdc4c"/><stop offset="0.84" stop-color="#ddc640"/><stop offset="0.88" stop-color="#ec9c2f"/><stop offset="0.92" stop-color="#db5d1b"/><stop offset="0.96" stop-color="#a83112"/><stop offset="1.00" stop-color="#8a1a0e"/></linearGradient>
<linearGradient id="g29" x1="0" y1="0" x2="0" y2="1"><stop offset="0.00" stop-color="#251a54"/><stop offset="0.04" stop-color="#271e60"/><stop offset="0.08" stop-color="#29236d"/><stop offset="0.12" stop-color="#2b297a"/><stop offset="0.16" stop-color="#2c3087"/><stop offset="0.20" stop-color="#2d3894"/><stop offset="0.24" stop-color="#2e3fa1"/><stop offset="0.28" stop-color="#314db0"/><stop offset="0.32" stop-color="#345bbf"/><stop offset="0.36" stop-color="#376acc"/><stop offset="0.40" stop-color="#3c7cd4"/><stop offset="0.44" stop-color="#418edc"/><stop offset="0.48" stop-color="#479ede"/><stop offset="0.52" stop-color="#51b1da"/><stop offset="0.56" stop-color="#64c5c4"/><stop offset="0.60" stop-color="#77d2a9"/><stop offset="0.64" stop-color="#86d693"/><stop offset="0.68" stop-color="#94d97b"/><stop offset="0.72" stop-color="#a4dc67"/><stop offset="0.76" stop-color="#b8dc59"/><stop offset="0.80" stop-color="#ccdc4c"/><stop offset="0.84" stop-color="#ddc640"/><stop offset="0.88" stop-color="#ec9c2f"/><stop offset="0.92" stop-color="#db5d1b"/><stop offset="0.96" stop-color="#a83112"/><stop offset="1.00" stop-color="#8a1a0e"/></linearGradient>
<linearGradient id="g30" x1="0" y1="0" x2="0" y2="1"><stop offset="0.00" stop-color="#24194f"/><stop offset="0.04" stop-color="#261c59"/><stop offset="0.08" stop-color="#282064"/><stop offset="0.12" stop-color="#29236f"/><stop offset="0.16" stop-color="#2b297a"/><stop offset="0.20" stop-color="#2c2f85"/><stop offset="0.24" stop-color="#2d3690"/><stop offset="0.28" stop-color="#2e3ea0"/><stop offset="0.32" stop-color="#314eb1"/><stop offset="0.36" stop-color="#345ec1"/><stop offset="0.40" stop-color="#3870ce"/><stop offset="0.44" stop-color="#3e84d7"/><stop offset="0.48" stop-color="#4497df"/><stop offset="0.52" stop-color="#4eaddb"/><stop offset="0.56" stop-color="#61c3c7"/><stop offset="0.60" stop-color="#75d1ab"/><stop offset="0.64" stop-color="#85d694"/><stop offset="0.68" stop-color="#94d97c"/><stop offset="0.72" stop-color="#a4dc67"/><stop offset="0.76" stop-color="#b8dc59"/><stop offset="0.80" stop-color="#ccdc4c"/><stop offset="0.84" stop-color="#ddc640"/><stop offset="0.88" stop-color="#ec9c2f"/><stop offset="0.92" stop-color="#db5d1b"/><stop offset="0.96" stop-color="#a83112"/><stop offset="1.00" stop-color="#8a1a0e"/></linearGradient>
<linearGradient id="g31" x1="0" y1="0" x2="0" y2="1"><stop offset="0.00" stop-color="#251a53"/><stop offset="0.04" stop-color="#271e5f"/><stop offset="0.08" stop-color="#29226b"/><stop offset="0.12" stop-color="#2a2877"/><stop offset="0.16" stop-color="#2b2f83"/><stop offset="0.20" stop-color="#2d3690"/><stop offset="0.24" stop-color="#2e3d9c"/><stop offset="0.28" stop-color="#3049ac"/><stop offset="0.32" stop-color="#3358bb"/><stop offset="0.36" stop-color="#3667ca"/><stop offset="0.40" stop-color="#3b79d2"/><stop offset="0.44" stop-color="#418bdb"/><stop offset="0.48" stop-color="#479cde"/><stop offset="0.52" stop-color="#50b0da"/><stop offset="0.56" stop-color="#63c5c4"/><stop offset="0.60" stop-color="#77d2aa"/><stop offset="0.64" stop-color="#85d693"/><stop offset="0.68" stop-color="#94d97b"/><stop offset="0.72" stop-color="#a4dc67"/><stop offset="0.76" stop-color="#b8dc59"/><stop offset="0.80" stop-color="#ccdc4c"/><stop offset="0.84" stop-color="#ddc640"/><stop offset="0.88" stop-color="#ec9c2f"/><stop offset="0.92" stop-color="#db5d1b"/><stop offset="0.96" stop-color="#a83112"/><stop offset="1.00" stop-color="#8a1a0e"/></linearGradient>
<linearGradient id="g32" x1="0" y1="0" x2="0" y2="1"><stop offset="0.00" stop-color="#241951"/><stop offset="0.04" stop-color="#261d5d"/><stop offset="0.08" stop-color="#282168"/><stop offset="0.12" stop-color="#2a2674"/><stop offset="0.16" stop-color="#2b2d80"/><stop offset="0.20" stop-color="#2c338c"/><stop offset="0.24" stop-color="#2e3a98"/><stop offset="0.28" stop-color="#3046a8"/><stop offset="0.32" stop-color="#3255b8"/><stop offset="0.36" stop-color="#3564c8"/><stop offset="0.40" stop-color="#3a76d1"/><stop offset="0.44" stop-color="#4089da"/><stop offset="0.48" stop-color="#469ade"/><stop offset="0.52" stop-color="#50afda"/><stop offset="0.56" stop-color="#63c4c5"/><stop offset="0.60" stop-color="#76d1aa"/><stop offset="0.64" stop-color="#85d693"/><stop offset="0.68" stop-color="#94d97b"/><stop offset="0.72" stop-color="#a4dc67"/><stop offset="0.76" stop-color="#b8dc59"/><stop offset="0.80" stop-color="#ccdc4c"/><stop offset="0.84" stop-color="#ddc640"/><stop offset="0.88" stop-color="#ec9c2f"/><stop offset="0.92" stop-color="#db5d1b"/><stop offset="0.96" stop-color="#a83112"/><stop offset="1.00" stop-color="#8a1a0e"/></linearGradient>
<linearGradient id="g33" x1="0" y1="0" x2="0" y2="1"><stop offset="0.00" stop-color="#2f40a2"/><stop offset="0.04" stop-color="#3972cf"/><stop offset="0.08" stop-color="#418cdb"/><stop offset="0.12" stop-color="#4394df"/><stop offset="0.16" stop-color="#469bde"/><stop offset="0.20" stop-color="#49a1dd"/><stop offset="0.24" stop-color="#4ca8dc"/><stop offset="0.28" stop-color="#4faeda"/><stop offset="0.32" stop-color="#52b5d9"/><stop offset="0.36" stop-color="#55bbd8"/><stop offset="0.40" stop-color="#5bbfd0"/><stop offset="0.44" stop-color="#61c3c7"/><stop offset="0.48" stop-color="#67c7bf"/><stop offset="0.52" stop-color="#6fcdb3"/><stop offset="0.56" stop-color="#79d3a6"/><stop offset="0.60" stop-color="#83d696"/><stop offset="0.64" stop-color="#8dd887"/><stop offset="0.68" stop-color="#97da77"/><stop offset="0.72" stop-color="#a4dc67"/><stop offset="0.76" stop-color="#b8dc59"/><stop offset="0.80" stop-color="#ccdc4c"/><stop offset="0.84" stop-color="#ddc640"/><stop offset="0.88" stop-color="#ec9c2f"/><stop offset="0.92" stop-color="#db5d1b"/><stop offset="0.96" stop-color="#a83112"/><stop offset="1.00" stop-color="#8a1a0e"/></linearGradient>
<linearGradient id="g34" x1="0" y1="0" x2="0" y2="1"><stop offset="0.00" stop-color="#2c3085"/><stop offset="0.04" stop-color="#2f42a4"/><stop offset="0.08" stop-color="#335abd"/><stop offset="0.12" stop-color="#3970ce"/><stop offset="0.16" stop-color="#3c7ad3"/><stop offset="0.20" stop-color="#3f84d8"/><stop offset="0.24" stop-color="#418fdc"/><stop offset="0.28" stop-color="#4598df"/><stop offset="0.32" stop-color="#48a0dd"/><stop offset="0.36" stop-color="#4ca8dc"/><stop offset="0.40" stop-color="#50b0da"/><stop offset="0.44" stop-color="#54b8d8"/><stop offset="0.48" stop-color="#5abed2"/><stop offset="0.52" stop-color="#65c6c2"/><stop offset="0.56" stop-color="#73cfaf"/><stop offset="0.60" stop-color="#7fd59c"/><stop offset="0.64" stop-color="#8bd78a"/><stop offset="0.68" stop-color="#96da78"/><stop offset="0.72" stop-color="#a4dc67"/><stop offset="0.76" stop-color="#b8dc59"/><stop offset="0.80" stop-color="#ccdc4c"/><stop offset="0.84" stop-color="#ddc640"/><stop offset="0.88" stop-color="#ec9c2f"/><stop offset="0.92" stop-color="#db5d1b"/><stop offset="0.96" stop-color="#a83112"/><stop offset="1.00" stop-color="#8a1a0e"/></linearGradient>
<linearGradient id="g35" x1="0" y1="0" x2="0" y2="1"><stop offset="0.00" stop-color="#2f42a5"/><stop offset="0.04" stop-color="#3c7cd4"/><stop offset="0.08" stop-color="#428fdd"/><stop offset="0.12" stop-color="#4497df"/><stop offset="0.16" stop-color="#479dde"/><stop offset="0.20" stop-color="#4aa4dd"/><stop offset="0.24" stop-color="#4daadb"/><stop offset="0.28" stop-color="#50b0da"/><stop offset="0.32" stop-color="#53b7d9"/><stop offset="0.36" stop-color="#57bcd6"/><stop offset="0.40" stop-color="#5dc0cd"/><stop offset="0.44" stop-color="#63c4c5"/><stop offset="0.48" stop-color="#69c8bd"/><stop offset="0.52" stop-color="#71ceb2"/><stop offset="0.56" stop-color="#7ad4a5"/><stop offset="0.60" stop-color="#84d695"/><stop offset="0.64" stop-color="#8dd886"/><stop offset="0.68" stop-color="#97da77"/><stop offset="0.72" stop-color="#a4dc67"/><stop offset="0.76" stop-color="#b8dc59"/><stop offset="0.80" stop-color="#ccdc4c"/><stop offset="0.84" stop-color="#ddc640"/><stop offset="0.88" stop-color="#ec9c2f"/><stop offset="0.92" stop-color="#db5d1b"/><stop offset="0.96" stop-color="#a83112"/><stop offset="1.00" stop-color="#8a1a0e"/></linearGradient>
<linearGradient id="g36" x1="0" y1="0" x2="0" y2="1"><stop offset="0.00" stop-color="#24184c"/><stop offset="0.04" stop-color="#251b56"/><stop offset="0.08" stop-color="#271e60"/><stop offset="0.12" stop-color="#29226a"/><stop offset="0.16" stop-color="#2a2674"/><stop offset="0.20" stop-color="#2b2c7e"/><stop offset="0.24" stop-color="#2c3188"/><stop offset="0.28" stop-color="#2d3895"/><stop offset="0.32" stop-color="#3047a9"/><stop offset="0.36" stop-color="#3358bb"/><stop offset="0.40" stop-color="#3769cb"/><stop offset="0.44" stop-color="#3d7ed5"/><stop offset="0.48" stop-color="#4394df"/><stop offset="0.52" stop-color="#4daadb"/><stop offset="0.56" stop-color="#60c2c9"/><stop offset="0.60" stop-color="#75d0ac"/><stop offset="0.64" stop-color="#84d695"/><stop offset="0.68" stop-color="#94d97c"/><stop offset="0.72" stop-color="#a4dc67"/><stop offset="0.76" stop-color="#b8dc59"/><stop offset="0.80" stop-color="#ccdc4c"/><stop offset="0.84" stop-color="#ddc640"/><stop offset="0.88" stop-color="#ec9c2f"/><stop offset="0.92" stop-color="#db5d1b"/><stop offset="0.96" stop-color="#a83112"/><stop offset="1.00" stop-color="#8a1a0e"/></linearGradient>
<linearGradient id="g37" x1="0" y1="0" x2="0" y2="1"><stop offset="0.00" stop-color="#24184d"/><stop offset="0.04" stop-color="#261c58"/><stop offset="0.08" stop-color="#271f62"/><stop offset="0.12" stop-color="#29226c"/><stop offset="0.16" stop-color="#2a2877"/><stop offset="0.20" stop-color="#2b2e81"/><stop offset="0.24" stop-color="#2c338c"/><stop offset="0.28" stop-color="#2e3c9a"/><stop offset="0.32" stop-color="#314aad"/><stop offset="0.36" stop-color="#345bbe"/><stop offset="0.40" stop-color="#386ccd"/><stop offset="0.44" stop-color="#3e81d6"/><stop offset="0.48" stop-color="#4496df"/><stop offset="0.52" stop-color="#4eacdb"/><stop offset="0.56" stop-color="#61c3c8"/><stop offset="0.60" stop-color="#75d1ac"/><stop offset="0.64" stop-color="#84d694"/><stop offset="0.68" stop-color="#94d97c"/><stop offset="0.72" stop-color="#a4dc67"/><stop offset="0.76" stop-color="#b8dc59"/><stop offset="0.80" stop-color="#ccdc4c"/><stop offset="0.84" stop-color="#ddc640"/><stop offset="0.88" stop-color="#ec9c2f"/><stop offset="0.92" stop-color="#db5d1b"/><stop offset="0.96" stop-color="#a83112"/><stop offset="1.00" stop-color="#8a1a0e"/></linearGradient>
<linearGradient id="g38" x1="0" y1="0" x2="0" y2="1"><stop offset="0.00" stop-color="#23174b"/><stop offset="0.04" stop-color="#251b55"/><stop offset="0.08" stop-color="#271e5e"/><stop offset="0.12" stop-color="#282168"/><stop offset="0.16" stop-color="#2a2471"/><stop offset="0.20" stop-color="#2b2a7b"/><stop offset="0.24" stop-color="#2c2f85"/><stop offset="0.28" stop-color="#2d358f"/><stop offset="0.32" stop-color="#2f43a5"/><stop offset="0.36" stop-color="#3254b7"/><stop offset="0.40" stop-color="#3666ca"/><stop offset="0.44" stop-color="#3c7cd4"/><stop offset="0.48" stop-color="#4291de"/><stop offset="0.52" stop-color="#4da9db"/><stop offset="0.56" stop-color="#5fc2ca"/><stop offset="0.60" stop-color="#74d0ad"/><stop offset="0.64" stop-color="#84d695"/><stop offset="0.68" stop-color="#94d97c"/><stop offset="0.72" stop-color="#a4dc67"/><stop offset="0.76" stop-color="#b8dc59"/><stop offset="0.80" stop-color="#ccdc4c"/><stop offset="0.84" stop-color="#ddc640"/><stop offset="0.88" stop-color="#ec9c2f"/><stop offset="0.92" stop-color="#db5d1b"/><stop offset="0.96" stop-color="#a83112"/><stop offset="1.00" stop-color="#8a1a0e"/></linearGradient>
<linearGradient id="g39" x1="0" y1="0" x2="0" y2="1"><stop offset="0.00" stop-color="#23174a"/><stop offset="0.04" stop-color="#251a52"/><stop offset="0.08" stop-color="#261d5b"/><stop offset="0.12" stop-color="#282064"/><stop offset="0.16" stop-color="#29226c"/><stop offset="0.20" stop-color="#2a2775"/><stop offset="0.24" stop-color="#2b2c7e"/><stop offset="0.28" stop-color="#2c3187"/><stop offset="0.32" stop-color="#2e3c9c"/><stop offset="0.36" stop-color="#314eb0"/><stop offset="0.40" stop-color="#3460c4"/><stop offset="0.44" stop-color="#3a76d1"/><stop offset="0.48" stop-color="#418ddc"/><stop offset="0.52" stop-color="#4ca7dc"/><stop offset="0.56" stop-color="#5ec1cc"/><stop offset="0.60" stop-color="#74d0ae"/><stop offset="0.64" stop-color="#83d696"/><stop offset="0.68" stop-color="#94d97c"/><stop offset="0.72" stop-color="#a4dc67"/><stop offset="0.76" stop-color="#b8dc59"/><stop offset="0.80" stop-color="#ccdc4c"/><stop offset="0.84" stop-color="#ddc640"/><stop offset="0.88" stop-color="#ec9c2f"/><stop offset="0.92" stop-color="#db5d1b"/><stop offset="0.96" stop-color="#a83112"/><stop offset="1.00" stop-color="#8a1a0e"/></linearGradient>
<linearGradient id="g40" x1="0" y1="0" x2="0" y2="1"><stop offset="0.00" stop-color="#231749"/><stop offset="0.04" stop-color="#251a52"/><stop offset="0.08" stop-color="#261c5a"/><stop offset="0.12" stop-color="#271f62"/><stop offset="0.16" stop-color="#29226a"/><stop offset="0.20" stop-color="#2a2572"/><stop offset="0.24" stop-color="#2b2a7b"/><stop offset="0.28" stop-color="#2b2e83"/><stop offset="0.32" stop-color="#2d3996"/><stop offset="0.36" stop-color="#304aad"/><stop offset="0.40" stop-color="#345dc1"/><stop offset="0.44" stop-color="#3973d0"/><stop offset="0.48" stop-color="#408bdb"/><stop offset="0.52" stop-color="#4ba6dc"/><stop offset="0.56" stop-color="#5dc1cd"/><stop offset="0.60" stop-color="#73cfae"/><stop offset="0.64" stop-color="#83d696"/><stop offset="0.68" stop-color="#94d97c"/><stop offset="0.72" stop-color="#a4dc67"/><stop offset="0.76" stop-color="#b8dc59"/><stop offset="0.80" stop-color="#ccdc4c"/><stop offset="0.84" stop-color="#ddc640"/><stop offset="0.88" stop-color="#ec9c2f"/><stop offset="0.92" stop-color="#db5d1b"/><stop offset="0.96" stop-color="#a83112"/><stop offset="1.00" stop-color="#8a1a0e"/></linearGradient>
<linearGradient id="g41" x1="0" y1="0" x2="0" y2="1"><stop offset="0.00" stop-color="#23174b"/><stop offset="0.04" stop-color="#251a54"/><stop offset="0.08" stop-color="#261d5d"/><stop offset="0.12" stop-color="#282066"/><stop offset="0.16" stop-color="#29236f"/><stop offset="0.20" stop-color="#2a2878"/><stop offset="0.24" stop-color="#2b2d81"/><stop offset="0.28" stop-color="#2c338b"/><stop offset="0.32" stop-color="#2e3fa1"/><stop offset="0.36" stop-color="#3251b4"/><stop offset="0.40" stop-color="#3563c7"/><stop offset="0.44" stop-color="#3b79d2"/><stop offset="0.48" stop-color="#428fdd"/><stop offset="0.52" stop-color="#4ca8dc"/><stop offset="0.56" stop-color="#5fc2cb"/><stop offset="0.60" stop-color="#74d0ad"/><stop offset="0.64" stop-color="#84d695"/><stop offset="0.68" stop-color="#94d97c"/><stop offset="0.72" stop-color="#a4dc67"/><stop offset="0.76" stop-color="#b8dc59"/><stop offset="0.80" stop-color="#ccdc4c"/><stop offset="0.84" stop-color="#ddc640"/><stop offset="0.88" stop-color="#ec9c2f"/><stop offset="0.92" stop-color="#db5d1b"/><stop offset="0.96" stop-color="#a83112"/><stop offset="1.00" stop-color="#8a1a0e"/></linearGradient>
<linearGradient id="g42" x1="0" y1="0" x2="0" y2="1"><stop offset="0.00" stop-color="#304aac"/><stop offset="0.04" stop-color="#4392de"/><stop offset="0.08" stop-color="#4599df"/><stop offset="0.12" stop-color="#489fde"/><stop offset="0.16" stop-color="#4ba5dc"/><stop offset="0.20" stop-color="#4eabdb"/><stop offset="0.24" stop-color="#50b1da"/><stop offset="0.28" stop-color="#53b6d9"/><stop offset="0.32" stop-color="#56bcd6"/><stop offset="0.36" stop-color="#5cc0ce"/><stop offset="0.40" stop-color="#62c4c7"/><stop offset="0.44" stop-color="#67c7bf"/><stop offset="0.48" stop-color="#6dcbb7"/><stop offset="0.52" stop-color="#74d0ae"/><stop offset="0.56" stop-color="#7cd4a2"/><stop offset="0.60" stop-color="#85d694"/><stop offset="0.64" stop-color="#8ed885"/><stop offset="0.68" stop-color="#97da77"/><stop offset="0.72" stop-color="#a4dc67"/><stop offset="0.76" stop-color="#b8dc59"/><stop offset="0.80" stop-color="#ccdc4c"/><stop offset="0.84" stop-color="#ddc640"/><stop offset="0.88" stop-color="#ec9c2f"/><stop offset="0.92" stop-color="#db5d1b"/><stop offset="0.96" stop-color="#a83112"/><stop offset="1.00" stop-color="#8a1a0e"/></linearGradient>
<filter id="dsp" x="0" y="0" width="1" height="1" filterUnits="objectBoundingBox"><feTurbulence type="turbulence" baseFrequency="0.9 0.9" numOctaves="1" seed="4" result="n"/><feDisplacementMap in="SourceGraphic" in2="n" scale="14" xChannelSelector="B" yChannelSelector="R"/></filter>
<filter id="spk" x="0" y="0" width="1" height="1"><feTurbulence type="fractalNoise" baseFrequency="0.8 0.7" numOctaves="1" seed="9"/><feColorMatrix type="matrix" values="0 0 0 0 0.29  0 0 0 0 0.52  0 0 0 0 0.86  5 0 0 0 -2.9"/></filter>
<linearGradient id="spm" x1="0" y1="0" x2="0" y2="1"><stop offset="0" stop-color="#fff" stop-opacity="0.4"/><stop offset="0.3" stop-color="#fff" stop-opacity="0.55"/><stop offset="0.5" stop-color="#fff" stop-opacity="0"/></linearGradient><mask id="spmask"><rect x="304" y="160" width="898" height="80" fill="url(#spm)"/></mask>
</defs>
<clipPath id="sc"><rect x="304" y="160" width="898" height="80"/></clipPath><g clip-path="url(#sc)"><rect x="304" y="160" width="3.3" height="80" fill="url(#g0)"/><rect x="307" y="160" width="3.3" height="80" fill="url(#g1)"/><rect x="310" y="160" width="3.3" height="80" fill="url(#g2)"/><rect x="313" y="160" width="3.3" height="80" fill="url(#g3)"/><rect x="316" y="160" width="3.3" height="80" fill="url(#g4)"/><rect x="319" y="160" width="3.3" height="80" fill="url(#g0)"/><rect x="322" y="160" width="3.3" height="80" fill="url(#g3)"/><rect x="325" y="160" width="3.3" height="80" fill="url(#g4)"/><rect x="328" y="160" width="2.3" height="80" fill="url(#g3)"/><rect x="330" y="160" width="3.3" height="80" fill="url(#g5)"/><rect x="333" y="160" width="3.3" height="80" fill="url(#g6)"/><rect x="336" y="160" width="3.3" height="80" fill="url(#g7)"/><rect x="339" y="160" width="3.3" height="80" fill="url(#g5)"/><rect x="342" y="160" width="3.3" height="80" fill="url(#g8)"/><rect x="345" y="160" width="3.3" height="80" fill="url(#g9)"/><rect x="348" y="160" width="3.3" height="80" fill="url(#g10)"/><rect x="351" y="160" width="3.3" height="80" fill="url(#g11)"/><rect x="354" y="160" width="3.3" height="80" fill="url(#g12)"/><rect x="357" y="160" width="3.3" height="80" fill="url(#g11)"/><rect x="360" y="160" width="3.3" height="80" fill="url(#g13)"/><rect x="363" y="160" width="2.3" height="80" fill="url(#g12)"/><rect x="365" y="160" width="3.3" height="80" fill="url(#g13)"/><rect x="368" y="160" width="3.3" height="80" fill="url(#g14)"/><rect x="371" y="160" width="3.3" height="80" fill="url(#g15)"/><rect x="374" y="160" width="3.3" height="80" fill="url(#g11)"/><rect x="377" y="160" width="3.3" height="80" fill="url(#g11)"/><rect x="380" y="160" width="3.3" height="80" fill="url(#g15)"/><rect x="383" y="160" width="3.3" height="80" fill="url(#g14)"/><rect x="386" y="160" width="3.3" height="80" fill="url(#g11)"/><rect x="389" y="160" width="3.3" height="80" fill="url(#g12)"/><rect x="392" y="160" width="3.3" height="80" fill="url(#g16)"/><rect x="395" y="160" width="3.3" height="80" fill="url(#g15)"/><rect x="398" y="160" width="3.3" height="80" fill="url(#g12)"/><rect x="401" y="160" width="3.3" height="80" fill="url(#g13)"/><rect x="404" y="160" width="3.3" height="80" fill="url(#g13)"/><rect x="407" y="160" width="3.3" height="80" fill="url(#g11)"/><rect x="410" y="160" width="3.3" height="80" fill="url(#g16)"/><rect x="413" y="160" width="3.3" height="80" fill="url(#g12)"/><rect x="416" y="160" width="3.3" height="80" fill="url(#g15)"/><rect x="419" y="160" width="1.3" height="80" fill="url(#g16)"/><rect x="420" y="160" width="3.3" height="80" fill="url(#g14)"/><rect x="423" y="160" width="3.3" height="80" fill="url(#g16)"/><rect x="426" y="160" width="3.3" height="80" fill="url(#g17)"/><rect x="429" y="160" width="3.3" height="80" fill="url(#g17)"/><rect x="432" y="160" width="3.3" height="80" fill="url(#g16)"/><rect x="435" y="160" width="3.3" height="80" fill="url(#g18)"/><rect x="438" y="160" width="3.3" height="80" fill="url(#g18)"/><rect x="441" y="160" width="3.3" height="80" fill="url(#g19)"/><rect x="444" y="160" width="3.3" height="80" fill="url(#g17)"/><rect x="447" y="160" width="3.3" height="80" fill="url(#g16)"/><rect x="450" y="160" width="3.3" height="80" fill="url(#g19)"/><rect x="453" y="160" width="3.3" height="80" fill="url(#g12)"/><rect x="456" y="160" width="3.3" height="80" fill="url(#g14)"/><rect x="459" y="160" width="3.3" height="80" fill="url(#g17)"/><rect x="462" y="160" width="3.3" height="80" fill="url(#g12)"/><rect x="465" y="160" width="3.3" height="80" fill="url(#g14)"/><rect x="468" y="160" width="2.3" height="80" fill="url(#g12)"/><rect x="470" y="160" width="3.3" height="80" fill="url(#g20)"/><rect x="473" y="160" width="3.3" height="80" fill="url(#g21)"/><rect x="476" y="160" width="3.3" height="80" fill="url(#g22)"/><rect x="479" y="160" width="3.3" height="80" fill="url(#g21)"/><rect x="482" y="160" width="3.3" height="80" fill="url(#g23)"/><rect x="485" y="160" width="3.3" height="80" fill="url(#g20)"/><rect x="488" y="160" width="3.3" height="80" fill="url(#g20)"/><rect x="491" y="160" width="3.3" height="80" fill="url(#g22)"/><rect x="494" y="160" width="3.3" height="80" fill="url(#g22)"/><rect x="497" y="160" width="3.3" height="80" fill="url(#g21)"/><rect x="500" y="160" width="3.3" height="80" fill="url(#g24)"/><rect x="503" y="160" width="3.3" height="80" fill="url(#g22)"/><rect x="506" y="160" width="3.3" height="80" fill="url(#g20)"/><rect x="509" y="160" width="3.3" height="80" fill="url(#g25)"/><rect x="512" y="160" width="3.3" height="80" fill="url(#g20)"/><rect x="515" y="160" width="3.3" height="80" fill="url(#g20)"/><rect x="518" y="160" width="3.3" height="80" fill="url(#g24)"/><rect x="521" y="160" width="3.3" height="80" fill="url(#g21)"/><rect x="524" y="160" width="3.3" height="80" fill="url(#g23)"/><rect x="527" y="160" width="3.3" height="80" fill="url(#g23)"/><rect x="530" y="160" width="3.3" height="80" fill="url(#g25)"/><rect x="533" y="160" width="3.3" height="80" fill="url(#g18)"/><rect x="536" y="160" width="3.3" height="80" fill="url(#g26)"/><rect x="539" y="160" width="3.3" height="80" fill="url(#g17)"/><rect x="542" y="160" width="3.3" height="80" fill="url(#g17)"/><rect x="545" y="160" width="3.3" height="80" fill="url(#g18)"/><rect x="548" y="160" width="3.3" height="80" fill="url(#g27)"/><rect x="551" y="160" width="3.3" height="80" fill="url(#g17)"/><rect x="554" y="160" width="3.3" height="80" fill="url(#g17)"/><rect x="557" y="160" width="3.3" height="80" fill="url(#g19)"/><rect x="560" y="160" width="3.3" height="80" fill="url(#g27)"/><rect x="563" y="160" width="3.3" height="80" fill="url(#g18)"/><rect x="566" y="160" width="3.3" height="80" fill="url(#g26)"/><rect x="569" y="160" width="1.3" height="80" fill="url(#g26)"/><rect x="570" y="160" width="3.3" height="80" fill="url(#g28)"/><rect x="573" y="160" width="3.3" height="80" fill="url(#g28)"/><rect x="576" y="160" width="3.3" height="80" fill="url(#g28)"/><rect x="579" y="160" width="3.3" height="80" fill="url(#g29)"/><rect x="582" y="160" width="3.3" height="80" fill="url(#g29)"/><rect x="585" y="160" width="3.3" height="80" fill="url(#g29)"/><rect x="588" y="160" width="3.3" height="80" fill="url(#g28)"/><rect x="591" y="160" width="3.3" height="80" fill="url(#g30)"/><rect x="594" y="160" width="3.3" height="80" fill="url(#g24)"/><rect x="597" y="160" width="3.3" height="80" fill="url(#g24)"/><rect x="600" y="160" width="3.3" height="80" fill="url(#g24)"/><rect x="603" y="160" width="3.3" height="80" fill="url(#g24)"/><rect x="606" y="160" width="3.3" height="80" fill="url(#g31)"/><rect x="609" y="160" width="3.3" height="80" fill="url(#g32)"/><rect x="612" y="160" width="3.3" height="80" fill="url(#g29)"/><rect x="615" y="160" width="3.3" height="80" fill="url(#g21)"/><rect x="618" y="160" width="3.3" height="80" fill="url(#g31)"/><rect x="621" y="160" width="3.3" height="80" fill="url(#g29)"/><rect x="624" y="160" width="3.3" height="80" fill="url(#g31)"/><rect x="627" y="160" width="3.3" height="80" fill="url(#g30)"/><rect x="630" y="160" width="3.3" height="80" fill="url(#g32)"/><rect x="633" y="160" width="1.3" height="80" fill="url(#g31)"/><rect x="634" y="160" width="3.3" height="80" fill="url(#g33)"/><rect x="637" y="160" width="3.3" height="80" fill="url(#g33)"/><rect x="640" y="160" width="3.3" height="80" fill="url(#g33)"/><rect x="643" y="160" width="3.3" height="80" fill="url(#g34)"/><rect x="646" y="160" width="3.3" height="80" fill="url(#g34)"/><rect x="649" y="160" width="3.3" height="80" fill="url(#g6)"/><rect x="652" y="160" width="3.3" height="80" fill="url(#g8)"/><rect x="655" y="160" width="3.3" height="80" fill="url(#g8)"/><rect x="658" y="160" width="3.3" height="80" fill="url(#g8)"/><rect x="661" y="160" width="3.3" height="80" fill="url(#g8)"/><rect x="664" y="160" width="3.3" height="80" fill="url(#g17)"/><rect x="667" y="160" width="3.3" height="80" fill="url(#g17)"/><rect x="670" y="160" width="3.3" height="80" fill="url(#g18)"/><rect x="673" y="160" width="3.3" height="80" fill="url(#g26)"/><rect x="676" y="160" width="3.3" height="80" fill="url(#g14)"/><rect x="679" y="160" width="3.3" height="80" fill="url(#g14)"/><rect x="682" y="160" width="3.3" height="80" fill="url(#g18)"/><rect x="685" y="160" width="3.3" height="80" fill="url(#g18)"/><rect x="688" y="160" width="3.3" height="80" fill="url(#g17)"/><rect x="691" y="160" width="3.3" height="80" fill="url(#g14)"/><rect x="694" y="160" width="3.3" height="80" fill="url(#g14)"/><rect x="697" y="160" width="3.3" height="80" fill="url(#g18)"/><rect x="700" y="160" width="3.3" height="80" fill="url(#g12)"/><rect x="703" y="160" width="3.3" height="80" fill="url(#g14)"/><rect x="706" y="160" width="3.3" height="80" fill="url(#g12)"/><rect x="709" y="160" width="3.3" height="80" fill="url(#g19)"/><rect x="712" y="160" width="3.3" height="80" fill="url(#g18)"/><rect x="715" y="160" width="3.3" height="80" fill="url(#g12)"/><rect x="718" y="160" width="3.3" height="80" fill="url(#g16)"/><rect x="721" y="160" width="3.3" height="80" fill="url(#g14)"/><rect x="724" y="160" width="3.3" height="80" fill="url(#g14)"/><rect x="727" y="160" width="3.3" height="80" fill="url(#g12)"/><rect x="730" y="160" width="3.3" height="80" fill="url(#g19)"/><rect x="733" y="160" width="3.3" height="80" fill="url(#g19)"/><rect x="736" y="160" width="3.3" height="80" fill="url(#g14)"/><rect x="739" y="160" width="3.3" height="80" fill="url(#g14)"/><rect x="742" y="160" width="3.3" height="80" fill="url(#g12)"/><rect x="745" y="160" width="3.3" height="80" fill="url(#g12)"/><rect x="748" y="160" width="3.3" height="80" fill="url(#g14)"/><rect x="751" y="160" width="3.3" height="80" fill="url(#g16)"/><rect x="754" y="160" width="3.3" height="80" fill="url(#g17)"/><rect x="757" y="160" width="2.3" height="80" fill="url(#g35)"/><rect x="759" y="160" width="3.3" height="80" fill="url(#g9)"/><rect x="762" y="160" width="3.3" height="80" fill="url(#g9)"/><rect x="765" y="160" width="3.3" height="80" fill="url(#g12)"/><rect x="768" y="160" width="3.3" height="80" fill="url(#g11)"/><rect x="771" y="160" width="3.3" height="80" fill="url(#g9)"/><rect x="774" y="160" width="3.3" height="80" fill="url(#g11)"/><rect x="777" y="160" width="1.3" height="80" fill="url(#g9)"/><rect x="778" y="160" width="2.3" height="80" fill="url(#g1)"/><rect x="780" y="160" width="3.3" height="80" fill="url(#g30)"/><rect x="783" y="160" width="3.3" height="80" fill="url(#g36)"/><rect x="786" y="160" width="3.3" height="80" fill="url(#g36)"/><rect x="789" y="160" width="3.3" height="80" fill="url(#g37)"/><rect x="792" y="160" width="3.3" height="80" fill="url(#g32)"/><rect x="795" y="160" width="3.3" height="80" fill="url(#g28)"/><rect x="798" y="160" width="3.3" height="80" fill="url(#g32)"/><rect x="801" y="160" width="3.3" height="80" fill="url(#g37)"/><rect x="804" y="160" width="3.3" height="80" fill="url(#g30)"/><rect x="807" y="160" width="3.3" height="80" fill="url(#g37)"/><rect x="810" y="160" width="3.3" height="80" fill="url(#g32)"/><rect x="813" y="160" width="3.3" height="80" fill="url(#g32)"/><rect x="816" y="160" width="3.3" height="80" fill="url(#g37)"/><rect x="819" y="160" width="3.3" height="80" fill="url(#g36)"/><rect x="822" y="160" width="3.3" height="80" fill="url(#g36)"/><rect x="825" y="160" width="3.3" height="80" fill="url(#g37)"/><rect x="828" y="160" width="3.3" height="80" fill="url(#g37)"/><rect x="831" y="160" width="3.3" height="80" fill="url(#g37)"/><rect x="834" y="160" width="3.3" height="80" fill="url(#g32)"/><rect x="837" y="160" width="3.3" height="80" fill="url(#g30)"/><rect x="840" y="160" width="3.3" height="80" fill="url(#g37)"/><rect x="843" y="160" width="3.3" height="80" fill="url(#g28)"/><rect x="846" y="160" width="3.3" height="80" fill="url(#g28)"/><rect x="849" y="160" width="3.3" height="80" fill="url(#g37)"/><rect x="852" y="160" width="3.3" height="80" fill="url(#g37)"/><rect x="855" y="160" width="3.3" height="80" fill="url(#g38)"/><rect x="858" y="160" width="3.3" height="80" fill="url(#g39)"/><rect x="861" y="160" width="3.3" height="80" fill="url(#g36)"/><rect x="864" y="160" width="3.3" height="80" fill="url(#g39)"/><rect x="867" y="160" width="3.3" height="80" fill="url(#g39)"/><rect x="870" y="160" width="3.3" height="80" fill="url(#g39)"/><rect x="873" y="160" width="2.3" height="80" fill="url(#g37)"/><rect x="875" y="160" width="3.3" height="80" fill="url(#g20)"/><rect x="878" y="160" width="3.3" height="80" fill="url(#g20)"/><rect x="881" y="160" width="3.3" height="80" fill="url(#g20)"/><rect x="884" y="160" width="3.3" height="80" fill="url(#g20)"/><rect x="887" y="160" width="3.3" height="80" fill="url(#g24)"/><rect x="890" y="160" width="3.3" height="80" fill="url(#g31)"/><rect x="893" y="160" width="3.3" height="80" fill="url(#g31)"/><rect x="896" y="160" width="3.3" height="80" fill="url(#g21)"/><rect x="899" y="160" width="1.3" height="80" fill="url(#g24)"/><rect x="900" y="160" width="3.3" height="80" fill="url(#g37)"/><rect x="903" y="160" width="3.3" height="80" fill="url(#g31)"/><rect x="906" y="160" width="3.3" height="80" fill="url(#g30)"/><rect x="909" y="160" width="3.3" height="80" fill="url(#g36)"/><rect x="912" y="160" width="3.3" height="80" fill="url(#g37)"/><rect x="915" y="160" width="3.3" height="80" fill="url(#g37)"/><rect x="918" y="160" width="3.3" height="80" fill="url(#g28)"/><rect x="921" y="160" width="3.3" height="80" fill="url(#g32)"/><rect x="924" y="160" width="3.3" height="80" fill="url(#g37)"/><rect x="927" y="160" width="3.3" height="80" fill="url(#g32)"/><rect x="930" y="160" width="3.3" height="80" fill="url(#g21)"/><rect x="933" y="160" width="3.3" height="80" fill="url(#g24)"/><rect x="936" y="160" width="3.3" height="80" fill="url(#g23)"/><rect x="939" y="160" width="3.3" height="80" fill="url(#g23)"/><rect x="942" y="160" width="3.3" height="80" fill="url(#g24)"/><rect x="945" y="160" width="3.3" height="80" fill="url(#g20)"/><rect x="948" y="160" width="3.3" height="80" fill="url(#g27)"/><rect x="951" y="160" width="3.3" height="80" fill="url(#g27)"/><rect x="954" y="160" width="3.3" height="80" fill="url(#g27)"/><rect x="957" y="160" width="3.3" height="80" fill="url(#g21)"/><rect x="960" y="160" width="3.3" height="80" fill="url(#g21)"/><rect x="963" y="160" width="3.3" height="80" fill="url(#g27)"/><rect x="966" y="160" width="3.3" height="80" fill="url(#g21)"/><rect x="969" y="160" width="3.3" height="80" fill="url(#g24)"/><rect x="972" y="160" width="3.3" height="80" fill="url(#g20)"/><rect x="975" y="160" width="2.3" height="80" fill="url(#g23)"/><rect x="977" y="160" width="2.3" height="80" fill="url(#g5)"/><rect x="979" y="160" width="3.3" height="80" fill="url(#g37)"/><rect x="982" y="160" width="3.3" height="80" fill="url(#g30)"/><rect x="985" y="160" width="3.3" height="80" fill="url(#g40)"/><rect x="988" y="160" width="3.3" height="80" fill="url(#g41)"/><rect x="991" y="160" width="3.3" height="80" fill="url(#g38)"/><rect x="994" y="160" width="3.3" height="80" fill="url(#g40)"/><rect x="997" y="160" width="3.3" height="80" fill="url(#g38)"/><rect x="1000" y="160" width="3.3" height="80" fill="url(#g39)"/><rect x="1003" y="160" width="3.3" height="80" fill="url(#g39)"/><rect x="1006" y="160" width="3.3" height="80" fill="url(#g37)"/><rect x="1009" y="160" width="3.3" height="80" fill="url(#g36)"/><rect x="1012" y="160" width="3.3" height="80" fill="url(#g36)"/><rect x="1015" y="160" width="3.3" height="80" fill="url(#g37)"/><rect x="1018" y="160" width="3.3" height="80" fill="url(#g41)"/><rect x="1021" y="160" width="3.3" height="80" fill="url(#g36)"/><rect x="1024" y="160" width="3.3" height="80" fill="url(#g38)"/><rect x="1027" y="160" width="3.3" height="80" fill="url(#g37)"/><rect x="1030" y="160" width="3.3" height="80" fill="url(#g39)"/><rect x="1033" y="160" width="3.3" height="80" fill="url(#g36)"/><rect x="1036" y="160" width="3.3" height="80" fill="url(#g38)"/><rect x="1039" y="160" width="3.3" height="80" fill="url(#g41)"/><rect x="1042" y="160" width="3.3" height="80" fill="url(#g39)"/><rect x="1045" y="160" width="3.3" height="80" fill="url(#g38)"/><rect x="1048" y="160" width="3.3" height="80" fill="url(#g40)"/><rect x="1051" y="160" width="3.3" height="80" fill="url(#g38)"/><rect x="1054" y="160" width="1.3" height="80" fill="url(#g38)"/><rect x="1055" y="160" width="3.3" height="80" fill="url(#g30)"/><rect x="1058" y="160" width="3.3" height="80" fill="url(#g31)"/><rect x="1061" y="160" width="3.3" height="80" fill="url(#g28)"/><rect x="1064" y="160" width="3.3" height="80" fill="url(#g32)"/><rect x="1067" y="160" width="3.3" height="80" fill="url(#g31)"/><rect x="1070" y="160" width="3.3" height="80" fill="url(#g37)"/><rect x="1073" y="160" width="3.3" height="80" fill="url(#g32)"/><rect x="1076" y="160" width="3.3" height="80" fill="url(#g28)"/><rect x="1079" y="160" width="3.3" height="80" fill="url(#g37)"/><rect x="1082" y="160" width="3.3" height="80" fill="url(#g30)"/><rect x="1085" y="160" width="3.3" height="80" fill="url(#g20)"/><rect x="1088" y="160" width="3.3" height="80" fill="url(#g24)"/><rect x="1091" y="160" width="3.3" height="80" fill="url(#g24)"/><rect x="1094" y="160" width="3.3" height="80" fill="url(#g29)"/><rect x="1097" y="160" width="3.3" height="80" fill="url(#g22)"/><rect x="1100" y="160" width="3.3" height="80" fill="url(#g24)"/><rect x="1103" y="160" width="3.3" height="80" fill="url(#g20)"/><rect x="1106" y="160" width="3.3" height="80" fill="url(#g20)"/><rect x="1109" y="160" width="3.3" height="80" fill="url(#g29)"/><rect x="1112" y="160" width="3.3" height="80" fill="url(#g24)"/><rect x="1115" y="160" width="3.3" height="80" fill="url(#g24)"/><rect x="1118" y="160" width="3.3" height="80" fill="url(#g29)"/><rect x="1121" y="160" width="3.3" height="80" fill="url(#g31)"/><rect x="1124" y="160" width="3.3" height="80" fill="url(#g21)"/><rect x="1127" y="160" width="3.3" height="80" fill="url(#g24)"/><rect x="1130" y="160" width="3.3" height="80" fill="url(#g24)"/><rect x="1133" y="160" width="3.3" height="80" fill="url(#g24)"/><rect x="1136" y="160" width="1.3" height="80" fill="url(#g29)"/><rect x="1137" y="160" width="3.3" height="80" fill="url(#g22)"/><rect x="1140" y="160" width="3.3" height="80" fill="url(#g22)"/><rect x="1143" y="160" width="3.3" height="80" fill="url(#g22)"/><rect x="1146" y="160" width="3.3" height="80" fill="url(#g24)"/><rect x="1149" y="160" width="3.3" height="80" fill="url(#g20)"/><rect x="1152" y="160" width="3.3" height="80" fill="url(#g21)"/><rect x="1155" y="160" width="3.3" height="80" fill="url(#g24)"/><rect x="1158" y="160" width="3.3" height="80" fill="url(#g23)"/><rect x="1161" y="160" width="3.3" height="80" fill="url(#g22)"/><rect x="1164" y="160" width="3.3" height="80" fill="url(#g24)"/><rect x="1167" y="160" width="3.3" height="80" fill="url(#g21)"/><rect x="1170" y="160" width="3.3" height="80" fill="url(#g27)"/><rect x="1173" y="160" width="3.3" height="80" fill="url(#g27)"/><rect x="1176" y="160" width="3.3" height="80" fill="url(#g22)"/><rect x="1179" y="160" width="3.3" height="80" fill="url(#g25)"/><rect x="1182" y="160" width="1.3" height="80" fill="url(#g27)"/><rect x="1183" y="160" width="3.3" height="80" fill="url(#g14)"/><rect x="1186" y="160" width="3.3" height="80" fill="url(#g26)"/><rect x="1189" y="160" width="3.3" height="80" fill="url(#g25)"/><rect x="1192" y="160" width="3.3" height="80" fill="url(#g25)"/><rect x="1195" y="160" width="3.3" height="80" fill="url(#g18)"/><rect x="1198" y="160" width="3.3" height="80" fill="url(#g42)"/><rect x="1201" y="160" width="1.3" height="80" fill="url(#g42)"/><g filter="url(#dsp)"><rect x="304" y="160" width="3.3" height="80" fill="url(#g0)"/><rect x="307" y="160" width="3.3" height="80" fill="url(#g1)"/><rect x="310" y="160" width="3.3" height="80" fill="url(#g2)"/><rect x="313" y="160" width="3.3" height="80" fill="url(#g3)"/><rect x="316" y="160" width="3.3" height="80" fill="url(#g4)"/><rect x="319" y="160" width="3.3" height="80" fill="url(#g0)"/><rect x="322" y="160" width="3.3" height="80" fill="url(#g3)"/><rect x="325" y="160" width="3.3" height="80" fill="url(#g4)"/><rect x="328" y="160" width="2.3" height="80" fill="url(#g3)"/><rect x="330" y="160" width="3.3" height="80" fill="url(#g5)"/><rect x="333" y="160" width="3.3" height="80" fill="url(#g6)"/><rect x="336" y="160" width="3.3" height="80" fill="url(#g7)"/><rect x="339" y="160" width="3.3" height="80" fill="url(#g5)"/><rect x="342" y="160" width="3.3" height="80" fill="url(#g8)"/><rect x="345" y="160" width="3.3" height="80" fill="url(#g9)"/><rect x="348" y="160" width="3.3" height="80" fill="url(#g10)"/><rect x="351" y="160" width="3.3" height="80" fill="url(#g11)"/><rect x="354" y="160" width="3.3" height="80" fill="url(#g12)"/><rect x="357" y="160" width="3.3" height="80" fill="url(#g11)"/><rect x="360" y="160" width="3.3" height="80" fill="url(#g13)"/><rect x="363" y="160" width="2.3" height="80" fill="url(#g12)"/><rect x="365" y="160" width="3.3" height="80" fill="url(#g13)"/><rect x="368" y="160" width="3.3" height="80" fill="url(#g14)"/><rect x="371" y="160" width="3.3" height="80" fill="url(#g15)"/><rect x="374" y="160" width="3.3" height="80" fill="url(#g11)"/><rect x="377" y="160" width="3.3" height="80" fill="url(#g11)"/><rect x="380" y="160" width="3.3" height="80" fill="url(#g15)"/><rect x="383" y="160" width="3.3" height="80" fill="url(#g14)"/><rect x="386" y="160" width="3.3" height="80" fill="url(#g11)"/><rect x="389" y="160" width="3.3" height="80" fill="url(#g12)"/><rect x="392" y="160" width="3.3" height="80" fill="url(#g16)"/><rect x="395" y="160" width="3.3" height="80" fill="url(#g15)"/><rect x="398" y="160" width="3.3" height="80" fill="url(#g12)"/><rect x="401" y="160" width="3.3" height="80" fill="url(#g13)"/><rect x="404" y="160" width="3.3" height="80" fill="url(#g13)"/><rect x="407" y="160" width="3.3" height="80" fill="url(#g11)"/><rect x="410" y="160" width="3.3" height="80" fill="url(#g16)"/><rect x="413" y="160" width="3.3" height="80" fill="url(#g12)"/><rect x="416" y="160" width="3.3" height="80" fill="url(#g15)"/><rect x="419" y="160" width="1.3" height="80" fill="url(#g16)"/><rect x="420" y="160" width="3.3" height="80" fill="url(#g14)"/><rect x="423" y="160" width="3.3" height="80" fill="url(#g16)"/><rect x="426" y="160" width="3.3" height="80" fill="url(#g17)"/><rect x="429" y="160" width="3.3" height="80" fill="url(#g17)"/><rect x="432" y="160" width="3.3" height="80" fill="url(#g16)"/><rect x="435" y="160" width="3.3" height="80" fill="url(#g18)"/><rect x="438" y="160" width="3.3" height="80" fill="url(#g18)"/><rect x="441" y="160" width="3.3" height="80" fill="url(#g19)"/><rect x="444" y="160" width="3.3" height="80" fill="url(#g17)"/><rect x="447" y="160" width="3.3" height="80" fill="url(#g16)"/><rect x="450" y="160" width="3.3" height="80" fill="url(#g19)"/><rect x="453" y="160" width="3.3" height="80" fill="url(#g12)"/><rect x="456" y="160" width="3.3" height="80" fill="url(#g14)"/><rect x="459" y="160" width="3.3" height="80" fill="url(#g17)"/><rect x="462" y="160" width="3.3" height="80" fill="url(#g12)"/><rect x="465" y="160" width="3.3" height="80" fill="url(#g14)"/><rect x="468" y="160" width="2.3" height="80" fill="url(#g12)"/><rect x="470" y="160" width="3.3" height="80" fill="url(#g20)"/><rect x="473" y="160" width="3.3" height="80" fill="url(#g21)"/><rect x="476" y="160" width="3.3" height="80" fill="url(#g22)"/><rect x="479" y="160" width="3.3" height="80" fill="url(#g21)"/><rect x="482" y="160" width="3.3" height="80" fill="url(#g23)"/><rect x="485" y="160" width="3.3" height="80" fill="url(#g20)"/><rect x="488" y="160" width="3.3" height="80" fill="url(#g20)"/><rect x="491" y="160" width="3.3" height="80" fill="url(#g22)"/><rect x="494" y="160" width="3.3" height="80" fill="url(#g22)"/><rect x="497" y="160" width="3.3" height="80" fill="url(#g21)"/><rect x="500" y="160" width="3.3" height="80" fill="url(#g24)"/><rect x="503" y="160" width="3.3" height="80" fill="url(#g22)"/><rect x="506" y="160" width="3.3" height="80" fill="url(#g20)"/><rect x="509" y="160" width="3.3" height="80" fill="url(#g25)"/><rect x="512" y="160" width="3.3" height="80" fill="url(#g20)"/><rect x="515" y="160" width="3.3" height="80" fill="url(#g20)"/><rect x="518" y="160" width="3.3" height="80" fill="url(#g24)"/><rect x="521" y="160" width="3.3" height="80" fill="url(#g21)"/><rect x="524" y="160" width="3.3" height="80" fill="url(#g23)"/><rect x="527" y="160" width="3.3" height="80" fill="url(#g23)"/><rect x="530" y="160" width="3.3" height="80" fill="url(#g25)"/><rect x="533" y="160" width="3.3" height="80" fill="url(#g18)"/><rect x="536" y="160" width="3.3" height="80" fill="url(#g26)"/><rect x="539" y="160" width="3.3" height="80" fill="url(#g17)"/><rect x="542" y="160" width="3.3" height="80" fill="url(#g17)"/><rect x="545" y="160" width="3.3" height="80" fill="url(#g18)"/><rect x="548" y="160" width="3.3" height="80" fill="url(#g27)"/><rect x="551" y="160" width="3.3" height="80" fill="url(#g17)"/><rect x="554" y="160" width="3.3" height="80" fill="url(#g17)"/><rect x="557" y="160" width="3.3" height="80" fill="url(#g19)"/><rect x="560" y="160" width="3.3" height="80" fill="url(#g27)"/><rect x="563" y="160" width="3.3" height="80" fill="url(#g18)"/><rect x="566" y="160" width="3.3" height="80" fill="url(#g26)"/><rect x="569" y="160" width="1.3" height="80" fill="url(#g26)"/><rect x="570" y="160" width="3.3" height="80" fill="url(#g28)"/><rect x="573" y="160" width="3.3" height="80" fill="url(#g28)"/><rect x="576" y="160" width="3.3" height="80" fill="url(#g28)"/><rect x="579" y="160" width="3.3" height="80" fill="url(#g29)"/><rect x="582" y="160" width="3.3" height="80" fill="url(#g29)"/><rect x="585" y="160" width="3.3" height="80" fill="url(#g29)"/><rect x="588" y="160" width="3.3" height="80" fill="url(#g28)"/><rect x="591" y="160" width="3.3" height="80" fill="url(#g30)"/><rect x="594" y="160" width="3.3" height="80" fill="url(#g24)"/><rect x="597" y="160" width="3.3" height="80" fill="url(#g24)"/><rect x="600" y="160" width="3.3" height="80" fill="url(#g24)"/><rect x="603" y="160" width="3.3" height="80" fill="url(#g24)"/><rect x="606" y="160" width="3.3" height="80" fill="url(#g31)"/><rect x="609" y="160" width="3.3" height="80" fill="url(#g32)"/><rect x="612" y="160" width="3.3" height="80" fill="url(#g29)"/><rect x="615" y="160" width="3.3" height="80" fill="url(#g21)"/><rect x="618" y="160" width="3.3" height="80" fill="url(#g31)"/><rect x="621" y="160" width="3.3" height="80" fill="url(#g29)"/><rect x="624" y="160" width="3.3" height="80" fill="url(#g31)"/><rect x="627" y="160" width="3.3" height="80" fill="url(#g30)"/><rect x="630" y="160" width="3.3" height="80" fill="url(#g32)"/><rect x="633" y="160" width="1.3" height="80" fill="url(#g31)"/><rect x="634" y="160" width="3.3" height="80" fill="url(#g33)"/><rect x="637" y="160" width="3.3" height="80" fill="url(#g33)"/><rect x="640" y="160" width="3.3" height="80" fill="url(#g33)"/><rect x="643" y="160" width="3.3" height="80" fill="url(#g34)"/><rect x="646" y="160" width="3.3" height="80" fill="url(#g34)"/><rect x="649" y="160" width="3.3" height="80" fill="url(#g6)"/><rect x="652" y="160" width="3.3" height="80" fill="url(#g8)"/><rect x="655" y="160" width="3.3" height="80" fill="url(#g8)"/><rect x="658" y="160" width="3.3" height="80" fill="url(#g8)"/><rect x="661" y="160" width="3.3" height="80" fill="url(#g8)"/><rect x="664" y="160" width="3.3" height="80" fill="url(#g17)"/><rect x="667" y="160" width="3.3" height="80" fill="url(#g17)"/><rect x="670" y="160" width="3.3" height="80" fill="url(#g18)"/><rect x="673" y="160" width="3.3" height="80" fill="url(#g26)"/><rect x="676" y="160" width="3.3" height="80" fill="url(#g14)"/><rect x="679" y="160" width="3.3" height="80" fill="url(#g14)"/><rect x="682" y="160" width="3.3" height="80" fill="url(#g18)"/><rect x="685" y="160" width="3.3" height="80" fill="url(#g18)"/><rect x="688" y="160" width="3.3" height="80" fill="url(#g17)"/><rect x="691" y="160" width="3.3" height="80" fill="url(#g14)"/><rect x="694" y="160" width="3.3" height="80" fill="url(#g14)"/><rect x="697" y="160" width="3.3" height="80" fill="url(#g18)"/><rect x="700" y="160" width="3.3" height="80" fill="url(#g12)"/><rect x="703" y="160" width="3.3" height="80" fill="url(#g14)"/><rect x="706" y="160" width="3.3" height="80" fill="url(#g12)"/><rect x="709" y="160" width="3.3" height="80" fill="url(#g19)"/><rect x="712" y="160" width="3.3" height="80" fill="url(#g18)"/><rect x="715" y="160" width="3.3" height="80" fill="url(#g12)"/><rect x="718" y="160" width="3.3" height="80" fill="url(#g16)"/><rect x="721" y="160" width="3.3" height="80" fill="url(#g14)"/><rect x="724" y="160" width="3.3" height="80" fill="url(#g14)"/><rect x="727" y="160" width="3.3" height="80" fill="url(#g12)"/><rect x="730" y="160" width="3.3" height="80" fill="url(#g19)"/><rect x="733" y="160" width="3.3" height="80" fill="url(#g19)"/><rect x="736" y="160" width="3.3" height="80" fill="url(#g14)"/><rect x="739" y="160" width="3.3" height="80" fill="url(#g14)"/><rect x="742" y="160" width="3.3" height="80" fill="url(#g12)"/><rect x="745" y="160" width="3.3" height="80" fill="url(#g12)"/><rect x="748" y="160" width="3.3" height="80" fill="url(#g14)"/><rect x="751" y="160" width="3.3" height="80" fill="url(#g16)"/><rect x="754" y="160" width="3.3" height="80" fill="url(#g17)"/><rect x="757" y="160" width="2.3" height="80" fill="url(#g35)"/><rect x="759" y="160" width="3.3" height="80" fill="url(#g9)"/><rect x="762" y="160" width="3.3" height="80" fill="url(#g9)"/><rect x="765" y="160" width="3.3" height="80" fill="url(#g12)"/><rect x="768" y="160" width="3.3" height="80" fill="url(#g11)"/><rect x="771" y="160" width="3.3" height="80" fill="url(#g9)"/><rect x="774" y="160" width="3.3" height="80" fill="url(#g11)"/><rect x="777" y="160" width="1.3" height="80" fill="url(#g9)"/><rect x="778" y="160" width="2.3" height="80" fill="url(#g1)"/><rect x="780" y="160" width="3.3" height="80" fill="url(#g30)"/><rect x="783" y="160" width="3.3" height="80" fill="url(#g36)"/><rect x="786" y="160" width="3.3" height="80" fill="url(#g36)"/><rect x="789" y="160" width="3.3" height="80" fill="url(#g37)"/><rect x="792" y="160" width="3.3" height="80" fill="url(#g32)"/><rect x="795" y="160" width="3.3" height="80" fill="url(#g28)"/><rect x="798" y="160" width="3.3" height="80" fill="url(#g32)"/><rect x="801" y="160" width="3.3" height="80" fill="url(#g37)"/><rect x="804" y="160" width="3.3" height="80" fill="url(#g30)"/><rect x="807" y="160" width="3.3" height="80" fill="url(#g37)"/><rect x="810" y="160" width="3.3" height="80" fill="url(#g32)"/><rect x="813" y="160" width="3.3" height="80" fill="url(#g32)"/><rect x="816" y="160" width="3.3" height="80" fill="url(#g37)"/><rect x="819" y="160" width="3.3" height="80" fill="url(#g36)"/><rect x="822" y="160" width="3.3" height="80" fill="url(#g36)"/><rect x="825" y="160" width="3.3" height="80" fill="url(#g37)"/><rect x="828" y="160" width="3.3" height="80" fill="url(#g37)"/><rect x="831" y="160" width="3.3" height="80" fill="url(#g37)"/><rect x="834" y="160" width="3.3" height="80" fill="url(#g32)"/><rect x="837" y="160" width="3.3" height="80" fill="url(#g30)"/><rect x="840" y="160" width="3.3" height="80" fill="url(#g37)"/><rect x="843" y="160" width="3.3" height="80" fill="url(#g28)"/><rect x="846" y="160" width="3.3" height="80" fill="url(#g28)"/><rect x="849" y="160" width="3.3" height="80" fill="url(#g37)"/><rect x="852" y="160" width="3.3" height="80" fill="url(#g37)"/><rect x="855" y="160" width="3.3" height="80" fill="url(#g38)"/><rect x="858" y="160" width="3.3" height="80" fill="url(#g39)"/><rect x="861" y="160" width="3.3" height="80" fill="url(#g36)"/><rect x="864" y="160" width="3.3" height="80" fill="url(#g39)"/><rect x="867" y="160" width="3.3" height="80" fill="url(#g39)"/><rect x="870" y="160" width="3.3" height="80" fill="url(#g39)"/><rect x="873" y="160" width="2.3" height="80" fill="url(#g37)"/><rect x="875" y="160" width="3.3" height="80" fill="url(#g20)"/><rect x="878" y="160" width="3.3" height="80" fill="url(#g20)"/><rect x="881" y="160" width="3.3" height="80" fill="url(#g20)"/><rect x="884" y="160" width="3.3" height="80" fill="url(#g20)"/><rect x="887" y="160" width="3.3" height="80" fill="url(#g24)"/><rect x="890" y="160" width="3.3" height="80" fill="url(#g31)"/><rect x="893" y="160" width="3.3" height="80" fill="url(#g31)"/><rect x="896" y="160" width="3.3" height="80" fill="url(#g21)"/><rect x="899" y="160" width="1.3" height="80" fill="url(#g24)"/><rect x="900" y="160" width="3.3" height="80" fill="url(#g37)"/><rect x="903" y="160" width="3.3" height="80" fill="url(#g31)"/><rect x="906" y="160" width="3.3" height="80" fill="url(#g30)"/><rect x="909" y="160" width="3.3" height="80" fill="url(#g36)"/><rect x="912" y="160" width="3.3" height="80" fill="url(#g37)"/><rect x="915" y="160" width="3.3" height="80" fill="url(#g37)"/><rect x="918" y="160" width="3.3" height="80" fill="url(#g28)"/><rect x="921" y="160" width="3.3" height="80" fill="url(#g32)"/><rect x="924" y="160" width="3.3" height="80" fill="url(#g37)"/><rect x="927" y="160" width="3.3" height="80" fill="url(#g32)"/><rect x="930" y="160" width="3.3" height="80" fill="url(#g21)"/><rect x="933" y="160" width="3.3" height="80" fill="url(#g24)"/><rect x="936" y="160" width="3.3" height="80" fill="url(#g23)"/><rect x="939" y="160" width="3.3" height="80" fill="url(#g23)"/><rect x="942" y="160" width="3.3" height="80" fill="url(#g24)"/><rect x="945" y="160" width="3.3" height="80" fill="url(#g20)"/><rect x="948" y="160" width="3.3" height="80" fill="url(#g27)"/><rect x="951" y="160" width="3.3" height="80" fill="url(#g27)"/><rect x="954" y="160" width="3.3" height="80" fill="url(#g27)"/><rect x="957" y="160" width="3.3" height="80" fill="url(#g21)"/><rect x="960" y="160" width="3.3" height="80" fill="url(#g21)"/><rect x="963" y="160" width="3.3" height="80" fill="url(#g27)"/><rect x="966" y="160" width="3.3" height="80" fill="url(#g21)"/><rect x="969" y="160" width="3.3" height="80" fill="url(#g24)"/><rect x="972" y="160" width="3.3" height="80" fill="url(#g20)"/><rect x="975" y="160" width="2.3" height="80" fill="url(#g23)"/><rect x="977" y="160" width="2.3" height="80" fill="url(#g5)"/><rect x="979" y="160" width="3.3" height="80" fill="url(#g37)"/><rect x="982" y="160" width="3.3" height="80" fill="url(#g30)"/><rect x="985" y="160" width="3.3" height="80" fill="url(#g40)"/><rect x="988" y="160" width="3.3" height="80" fill="url(#g41)"/><rect x="991" y="160" width="3.3" height="80" fill="url(#g38)"/><rect x="994" y="160" width="3.3" height="80" fill="url(#g40)"/><rect x="997" y="160" width="3.3" height="80" fill="url(#g38)"/><rect x="1000" y="160" width="3.3" height="80" fill="url(#g39)"/><rect x="1003" y="160" width="3.3" height="80" fill="url(#g39)"/><rect x="1006" y="160" width="3.3" height="80" fill="url(#g37)"/><rect x="1009" y="160" width="3.3" height="80" fill="url(#g36)"/><rect x="1012" y="160" width="3.3" height="80" fill="url(#g36)"/><rect x="1015" y="160" width="3.3" height="80" fill="url(#g37)"/><rect x="1018" y="160" width="3.3" height="80" fill="url(#g41)"/><rect x="1021" y="160" width="3.3" height="80" fill="url(#g36)"/><rect x="1024" y="160" width="3.3" height="80" fill="url(#g38)"/><rect x="1027" y="160" width="3.3" height="80" fill="url(#g37)"/><rect x="1030" y="160" width="3.3" height="80" fill="url(#g39)"/><rect x="1033" y="160" width="3.3" height="80" fill="url(#g36)"/><rect x="1036" y="160" width="3.3" height="80" fill="url(#g38)"/><rect x="1039" y="160" width="3.3" height="80" fill="url(#g41)"/><rect x="1042" y="160" width="3.3" height="80" fill="url(#g39)"/><rect x="1045" y="160" width="3.3" height="80" fill="url(#g38)"/><rect x="1048" y="160" width="3.3" height="80" fill="url(#g40)"/><rect x="1051" y="160" width="3.3" height="80" fill="url(#g38)"/><rect x="1054" y="160" width="1.3" height="80" fill="url(#g38)"/><rect x="1055" y="160" width="3.3" height="80" fill="url(#g30)"/><rect x="1058" y="160" width="3.3" height="80" fill="url(#g31)"/><rect x="1061" y="160" width="3.3" height="80" fill="url(#g28)"/><rect x="1064" y="160" width="3.3" height="80" fill="url(#g32)"/><rect x="1067" y="160" width="3.3" height="80" fill="url(#g31)"/><rect x="1070" y="160" width="3.3" height="80" fill="url(#g37)"/><rect x="1073" y="160" width="3.3" height="80" fill="url(#g32)"/><rect x="1076" y="160" width="3.3" height="80" fill="url(#g28)"/><rect x="1079" y="160" width="3.3" height="80" fill="url(#g37)"/><rect x="1082" y="160" width="3.3" height="80" fill="url(#g30)"/><rect x="1085" y="160" width="3.3" height="80" fill="url(#g20)"/><rect x="1088" y="160" width="3.3" height="80" fill="url(#g24)"/><rect x="1091" y="160" width="3.3" height="80" fill="url(#g24)"/><rect x="1094" y="160" width="3.3" height="80" fill="url(#g29)"/><rect x="1097" y="160" width="3.3" height="80" fill="url(#g22)"/><rect x="1100" y="160" width="3.3" height="80" fill="url(#g24)"/><rect x="1103" y="160" width="3.3" height="80" fill="url(#g20)"/><rect x="1106" y="160" width="3.3" height="80" fill="url(#g20)"/><rect x="1109" y="160" width="3.3" height="80" fill="url(#g29)"/><rect x="1112" y="160" width="3.3" height="80" fill="url(#g24)"/><rect x="1115" y="160" width="3.3" height="80" fill="url(#g24)"/><rect x="1118" y="160" width="3.3" height="80" fill="url(#g29)"/><rect x="1121" y="160" width="3.3" height="80" fill="url(#g31)"/><rect x="1124" y="160" width="3.3" height="80" fill="url(#g21)"/><rect x="1127" y="160" width="3.3" height="80" fill="url(#g24)"/><rect x="1130" y="160" width="3.3" height="80" fill="url(#g24)"/><rect x="1133" y="160" width="3.3" height="80" fill="url(#g24)"/><rect x="1136" y="160" width="1.3" height="80" fill="url(#g29)"/><rect x="1137" y="160" width="3.3" height="80" fill="url(#g22)"/><rect x="1140" y="160" width="3.3" height="80" fill="url(#g22)"/><rect x="1143" y="160" width="3.3" height="80" fill="url(#g22)"/><rect x="1146" y="160" width="3.3" height="80" fill="url(#g24)"/><rect x="1149" y="160" width="3.3" height="80" fill="url(#g20)"/><rect x="1152" y="160" width="3.3" height="80" fill="url(#g21)"/><rect x="1155" y="160" width="3.3" height="80" fill="url(#g24)"/><rect x="1158" y="160" width="3.3" height="80" fill="url(#g23)"/><rect x="1161" y="160" width="3.3" height="80" fill="url(#g22)"/><rect x="1164" y="160" width="3.3" height="80" fill="url(#g24)"/><rect x="1167" y="160" width="3.3" height="80" fill="url(#g21)"/><rect x="1170" y="160" width="3.3" height="80" fill="url(#g27)"/><rect x="1173" y="160" width="3.3" height="80" fill="url(#g27)"/><rect x="1176" y="160" width="3.3" height="80" fill="url(#g22)"/><rect x="1179" y="160" width="3.3" height="80" fill="url(#g25)"/><rect x="1182" y="160" width="1.3" height="80" fill="url(#g27)"/><rect x="1183" y="160" width="3.3" height="80" fill="url(#g14)"/><rect x="1186" y="160" width="3.3" height="80" fill="url(#g26)"/><rect x="1189" y="160" width="3.3" height="80" fill="url(#g25)"/><rect x="1192" y="160" width="3.3" height="80" fill="url(#g25)"/><rect x="1195" y="160" width="3.3" height="80" fill="url(#g18)"/><rect x="1198" y="160" width="3.3" height="80" fill="url(#g42)"/><rect x="1201" y="160" width="1.3" height="80" fill="url(#g42)"/></g></g>
<linearGradient id="wr" x1="0" y1="0" x2="0" y2="1"><stop offset="0" stop-color="#e0a040" stop-opacity="0"/><stop offset="0.35" stop-color="#e07030" stop-opacity="0.6"/><stop offset="0.65" stop-color="#a82810" stop-opacity="0.9"/><stop offset="1" stop-color="#7a170c"/></linearGradient><linearGradient id="a1" x1="0" y1="0" x2="0" y2="1"><stop offset="0" stop-color="#78d4a8"/><stop offset="0.6" stop-color="#a8e070"/><stop offset="0.75" stop-color="#d8d050"/><stop offset="0.8" stop-color="#7a170c"/><stop offset="1" stop-color="#7a170c"/></linearGradient><rect x="1202" y="160" width="6.5" height="80" fill="url(#a1)"/><linearGradient id="a2" x1="0" y1="0" x2="0" y2="1"><stop offset="0" stop-color="#e07a30"/><stop offset="0.45" stop-color="#c84a1a"/><stop offset="0.56" stop-color="#7a170c"/><stop offset="1" stop-color="#7a170c"/></linearGradient><rect x="1208" y="160" width="10.5" height="80" fill="url(#a2)"/><linearGradient id="ay" x1="0" y1="0" x2="0" y2="1"><stop offset="0" stop-color="#a8dc78"/><stop offset="0.25" stop-color="#b8e070"/><stop offset="0.32" stop-color="#e8a040"/><stop offset="0.46" stop-color="#d86a28"/><stop offset="0.5" stop-color="#7a170c"/><stop offset="0.55" stop-color="#e0c050"/><stop offset="0.6" stop-color="#b8e070"/><stop offset="0.8" stop-color="#c0e068"/><stop offset="0.82" stop-color="#e07a30"/><stop offset="0.85" stop-color="#e8d050"/><stop offset="1" stop-color="#f0a040"/></linearGradient><rect x="1218" y="160" width="13.5" height="80" fill="url(#ay)"/><rect x="1218" y="196.8" width="13.5" height="4.4" fill="#7a170c"/><rect x="1231" y="160" width="46" height="80" fill="#7a160c"/><linearGradient id="a3" x1="0" y1="0" x2="0" y2="1"><stop offset="0" stop-color="#e88038"/><stop offset="0.7" stop-color="#d86428"/><stop offset="0.85" stop-color="#b03a14"/><stop offset="1" stop-color="#e07030"/></linearGradient><rect x="1276" y="160" width="6.5" height="80" fill="url(#a3)"/><rect x="1220.8" y="202.4" width="1.4" height="1.5" fill="#f09030"/><rect x="1249.8" y="230.9" width="1.1" height="2.0" fill="#a82810"/><rect x="1239.2" y="225.2" width="1.8" height="1.1" fill="#a82810"/><rect x="1203.2" y="220.6" width="0.9" height="1.7" fill="#f09030"/><rect x="1278.2" y="170.5" width="0.9" height="1.0" fill="#c84018"/><rect x="1278.2" y="230.6" width="0.9" height="1.6" fill="#e8c050"/><rect x="1252.0" y="237.1" width="0.9" height="1.8" fill="#c84018"/><rect x="1280.2" y="166.9" width="1.3" height="1.0" fill="#f0a040"/><rect x="1205.5" y="207.9" width="1.5" height="1.5" fill="#f09030"/><rect x="1204.8" y="160.6" width="0.8" height="1.0" fill="#f09030"/><rect x="1234.2" y="207.6" width="2.0" height="1.2" fill="#c84018"/><rect x="1231.8" y="227.9" width="1.6" height="0.9" fill="#a82810"/><rect x="1278.9" y="223.3" width="1.3" height="1.7" fill="#c84018"/><rect x="1243.2" y="202.8" width="2.0" height="1.2" fill="#d86028"/><rect x="1231.7" y="206.0" width="1.6" height="1.4" fill="#a82810"/><rect x="1255.4" y="235.1" width="1.2" height="1.5" fill="#d86028"/><rect x="1216.0" y="174.4" width="1.8" height="1.1" fill="#f0a030"/><rect x="1278.7" y="213.3" width="1.2" height="1.1" fill="#f0a040"/><rect x="1236.4" y="214.4" width="1.9" height="1.6" fill="#d86028"/><rect x="1204.7" y="234.7" width="1.0" height="1.1" fill="#f09030"/><rect x="1229.3" y="170.1" width="1.4" height="1.6" fill="#e0c050"/><rect x="1224.9" y="204.3" width="1.0" height="0.8" fill="#e0c050"/><rect x="1276.5" y="228.6" width="1.3" height="1.9" fill="#e8c050"/><rect x="1224.8" y="186.6" width="1.8" height="2.0" fill="#70c8d0"/><rect x="1211.5" y="179.1" width="1.9" height="1.6" fill="#e07020"/><rect x="1215.6" y="183.4" width="0.8" height="1.4" fill="#b83010"/><rect x="1206.2" y="231.2" width="1.1" height="1.8" fill="#70c8d0"/><rect x="1239.7" y="221.0" width="0.9" height="1.9" fill="#c84018"/><rect x="1211.4" y="178.7" width="1.9" height="1.8" fill="#f0a030"/><rect x="1239.4" y="220.6" width="1.7" height="0.9" fill="#c84018"/><rect x="1205.9" y="197.7" width="0.9" height="1.4" fill="#f09030"/><rect x="1227.0" y="184.5" width="1.3" height="1.2" fill="#f09030"/><rect x="1212.1" y="160.3" width="1.3" height="0.9" fill="#b83010"/><rect x="1216.1" y="189.1" width="1.6" height="1.4" fill="#b83010"/><rect x="1203.4" y="177.1" width="0.9" height="1.3" fill="#f09030"/><rect x="1222.7" y="196.2" width="1.6" height="1.9" fill="#f09030"/><rect x="1205.5" y="167.2" width="1.0" height="0.8" fill="#e0c050"/><rect x="1247.7" y="222.3" width="1.4" height="1.7" fill="#a82810"/><rect x="1229.7" y="192.6" width="1.1" height="1.9" fill="#f09030"/><rect x="1268.6" y="235.4" width="1.7" height="1.6" fill="#a82810"/><rect x="1261.1" y="231.5" width="1.5" height="1.8" fill="#d86028"/><rect x="1279.7" y="229.4" width="0.8" height="1.4" fill="#c84018"/><rect x="1227.4" y="220.4" width="1.4" height="1.5" fill="#f09030"/><rect x="1277.9" y="196.5" width="1.9" height="1.6" fill="#f0a040"/><rect x="1204.9" y="232.8" width="1.2" height="1.3" fill="#70c8d0"/><rect x="1247.8" y="212.7" width="1.2" height="1.3" fill="#d86028"/><rect x="1216.8" y="197.6" width="1.6" height="0.9" fill="#e07020"/><rect x="1216.3" y="203.2" width="1.7" height="1.2" fill="#b83010"/><rect x="1205.3" y="199.4" width="1.2" height="1.2" fill="#f09030"/><rect x="1229.9" y="226.1" width="1.5" height="1.6" fill="#e0c050"/><rect x="1246.6" y="231.0" width="1.0" height="1.3" fill="#a82810"/><rect x="1217.3" y="201.2" width="1.0" height="1.8" fill="#b83010"/><rect x="1227.0" y="230.7" width="2.0" height="1.6" fill="#e0c050"/><rect x="1249.5" y="216.7" width="1.1" height="1.0" fill="#a82810"/><rect x="1276.8" y="168.7" width="2.0" height="1.9" fill="#c84018"/><rect x="1206.0" y="188.1" width="1.4" height="0.8" fill="#70c8d0"/><rect x="1228.8" y="185.6" width="1.0" height="1.8" fill="#f09030"/><rect x="1275.6" y="227.2" width="1.4" height="0.9" fill="#c84018"/><rect x="1205.4" y="166.1" width="1.3" height="1.4" fill="#70c8d0"/><rect x="1207.4" y="226.4" width="1.2" height="1.4" fill="#e0c050"/><rect x="1219.7" y="160.2" width="1.0" height="1.4" fill="#e0c050"/><rect x="1217.4" y="176.3" width="1.5" height="1.4" fill="#e07020"/><rect x="1233.8" y="184.8" width="0.9" height="1.3" fill="#a82810"/><rect x="1211.8" y="164.0" width="1.1" height="2.0" fill="#b83010"/><rect x="1276.4" y="221.6" width="1.4" height="1.5" fill="#c84018"/><rect x="1228.9" y="197.3" width="0.8" height="1.2" fill="#f09030"/><rect x="1249.9" y="233.8" width="1.0" height="1.3" fill="#d86028"/><rect x="1277.0" y="163.3" width="1.7" height="0.8" fill="#f0a040"/><rect x="1209.7" y="178.5" width="0.9" height="1.5" fill="#b83010"/><rect x="1253.1" y="237.8" width="1.3" height="1.9" fill="#c84018"/><rect x="1210.3" y="204.4" width="1.3" height="1.8" fill="#e07020"/><rect x="1210.9" y="182.4" width="1.1" height="1.5" fill="#e07020"/><rect x="1216.0" y="166.2" width="1.5" height="1.8" fill="#e07020"/><rect x="1210.6" y="191.1" width="1.5" height="1.6" fill="#b83010"/><rect x="1262.2" y="228.0" width="1.6" height="1.7" fill="#a82810"/><rect x="1232.0" y="169.1" width="1.7" height="0.9" fill="#d86028"/><rect x="1229.3" y="197.8" width="1.6" height="1.2" fill="#f09030"/><rect x="1221.7" y="225.4" width="1.3" height="0.9" fill="#70c8d0"/><rect x="1250.4" y="232.6" width="1.2" height="1.0" fill="#d86028"/><rect x="1279.7" y="196.6" width="1.9" height="1.2" fill="#e8c050"/><rect x="1223.8" y="193.7" width="1.0" height="1.7" fill="#f09030"/><rect x="1213.3" y="194.6" width="1.3" height="1.0" fill="#f0a030"/><rect x="1240.5" y="223.2" width="2.0" height="1.9" fill="#d86028"/><rect x="1230.4" y="226.5" width="1.2" height="1.2" fill="#e0c050"/><rect x="1213.8" y="161.6" width="0.8" height="2.0" fill="#e07020"/><rect x="1241.4" y="216.4" width="1.3" height="1.6" fill="#c84018"/><rect x="1277.8" y="172.1" width="1.0" height="0.8" fill="#c84018"/><rect x="1264.1" y="218.8" width="1.6" height="1.2" fill="#d86028"/><rect x="1216.3" y="189.9" width="1.2" height="1.1" fill="#f0a030"/><rect x="1277.0" y="233.6" width="1.5" height="1.5" fill="#c84018"/><rect x="1260.3" y="214.5" width="1.8" height="1.6" fill="#a82810"/><rect x="1277.9" y="165.4" width="2.0" height="1.4" fill="#c84018"/><rect x="1224.9" y="203.6" width="1.9" height="1.0" fill="#e0c050"/><rect x="1255.3" y="210.5" width="1.0" height="1.6" fill="#c84018"/><rect x="1226.6" y="210.6" width="0.9" height="2.0" fill="#70c8d0"/><rect x="1232.8" y="237.0" width="0.9" height="1.2" fill="#c84018"/><rect x="1213.3" y="197.3" width="1.2" height="1.9" fill="#e07020"/><rect x="1240.3" y="214.9" width="1.7" height="1.4" fill="#c84018"/><rect x="1227.0" y="225.5" width="2.0" height="1.3" fill="#f09030"/><rect x="1270.9" y="168.9" width="1.8" height="2.0" fill="#c84018"/><rect x="1209.3" y="202.1" width="1.2" height="1.5" fill="#f0a030"/><rect x="1262.9" y="216.4" width="1.8" height="1.1" fill="#a82810"/><rect x="1279.2" y="181.0" width="1.5" height="1.1" fill="#f0a040"/><rect x="1280.6" y="216.9" width="1.1" height="2.0" fill="#f0a040"/><rect x="1271.1" y="236.9" width="2.0" height="0.9" fill="#d86028"/><rect x="1225.0" y="178.4" width="2.0" height="1.2" fill="#70c8d0"/><rect x="1271.1" y="205.6" width="0.8" height="0.9" fill="#c84018"/><rect x="1202.0" y="229.0" width="1.1" height="0.8" fill="#e0c050"/><rect x="1244.6" y="231.9" width="1.2" height="1.7" fill="#a82810"/><rect x="1219.8" y="170.8" width="1.0" height="1.8" fill="#f09030"/><rect x="1249.3" y="166.6" width="1.3" height="1.4" fill="#d86028"/><rect x="1279.9" y="196.9" width="1.3" height="1.4" fill="#f0a040"/><rect x="1261.5" y="237.4" width="1.2" height="1.9" fill="#c84018"/><rect x="1252.9" y="228.8" width="1.0" height="1.3" fill="#d86028"/><rect x="1209.0" y="210.0" width="1.4" height="1.5" fill="#b83010"/><rect x="1208.7" y="178.1" width="1.8" height="1.9" fill="#f0a030"/><rect x="1277.9" y="177.7" width="1.2" height="1.9" fill="#e8c050"/><rect x="1212.5" y="201.5" width="1.4" height="1.2" fill="#b83010"/><rect x="1238.1" y="232.4" width="1.2" height="1.7" fill="#c84018"/><rect x="1255.8" y="216.9" width="1.3" height="1.0" fill="#d86028"/><rect x="1228.9" y="168.7" width="1.0" height="1.0" fill="#e0c050"/><rect x="1216.0" y="183.5" width="0.9" height="1.7" fill="#f0a030"/><rect x="1259.9" y="205.5" width="1.0" height="1.2" fill="#a82810"/><rect x="1279.1" y="206.2" width="1.9" height="1.9" fill="#e8c050"/><rect x="1261.1" y="182.7" width="1.5" height="1.7" fill="#a82810"/><rect x="1238.8" y="230.8" width="0.9" height="0.9" fill="#d86028"/><rect x="1215.2" y="167.9" width="0.9" height="1.3" fill="#b83010"/><rect x="1239.9" y="213.4" width="0.9" height="1.9" fill="#d86028"/><rect x="1278.0" y="174.5" width="1.7" height="1.9" fill="#e8c050"/><rect x="1229.5" y="186.8" width="1.0" height="0.9" fill="#f09030"/><rect x="1279.8" y="186.1" width="1.2" height="1.7" fill="#f0a040"/><rect x="1235.8" y="222.7" width="1.1" height="1.9" fill="#a82810"/><rect x="1214.2" y="162.5" width="1.6" height="1.1" fill="#f0a030"/><rect x="1279.5" y="217.7" width="1.3" height="1.1" fill="#c84018"/><rect x="1211.2" y="186.3" width="1.7" height="1.1" fill="#b83010"/><rect x="1208.9" y="166.2" width="1.0" height="0.8" fill="#b83010"/><rect x="1238.0" y="237.5" width="1.0" height="1.8" fill="#d86028"/><rect x="1236.8" y="178.5" width="1.1" height="1.3" fill="#c84018"/><rect x="1209.6" y="184.6" width="0.9" height="1.6" fill="#b83010"/><rect x="1232.1" y="230.1" width="1.3" height="1.2" fill="#a82810"/><rect x="1281.0" y="173.1" width="1.4" height="1.2" fill="#c84018"/><rect x="1260.5" y="220.1" width="1.4" height="0.8" fill="#c84018"/><rect x="1205.8" y="212.7" width="1.4" height="1.7" fill="#e0c050"/><rect x="1234.1" y="210.7" width="1.0" height="0.9" fill="#a82810"/><rect x="1242.2" y="209.2" width="1.2" height="1.8" fill="#a82810"/><rect x="1229.1" y="233.2" width="1.7" height="1.1" fill="#e0c050"/><rect x="1209.7" y="173.9" width="1.3" height="1.3" fill="#b83010"/><rect x="1233.1" y="230.5" width="1.1" height="1.1" fill="#a82810"/><rect x="1258.3" y="236.4" width="1.9" height="0.9" fill="#a82810"/><rect x="1249.0" y="233.9" width="1.9" height="1.3" fill="#c84018"/><rect x="1213.5" y="176.8" width="1.3" height="1.2" fill="#b83010"/><rect x="1237.0" y="232.4" width="1.5" height="1.2" fill="#c84018"/><rect x="1217.7" y="176.1" width="1.1" height="1.1" fill="#f0a030"/><rect x="1276.1" y="177.9" width="1.2" height="1.2" fill="#f0a040"/><rect x="1273.5" y="231.3" width="1.3" height="1.1" fill="#c84018"/><rect x="1218.1" y="187.2" width="1.9" height="1.3" fill="#e0c050"/><rect x="1203.9" y="228.0" width="1.1" height="0.9" fill="#70c8d0"/><rect x="1263.6" y="207.4" width="1.5" height="0.8" fill="#d86028"/><rect x="1215.3" y="160.1" width="1.2" height="1.8" fill="#e07020"/><rect x="1224.0" y="226.1" width="1.3" height="1.2" fill="#e0c050"/><rect x="1239.3" y="215.8" width="0.9" height="1.8" fill="#a82810"/><rect x="1208.2" y="202.2" width="1.8" height="1.9" fill="#e07020"/><rect x="1279.4" y="164.1" width="1.0" height="1.6" fill="#c84018"/><rect x="1253.5" y="217.8" width="1.6" height="1.0" fill="#c84018"/><rect x="1210.2" y="166.5" width="0.8" height="1.1" fill="#f0a030"/><rect x="1276.1" y="176.7" width="1.3" height="2.0" fill="#e8c050"/><rect x="1228.4" y="222.9" width="1.4" height="1.2" fill="#f09030"/><rect x="1229.2" y="218.6" width="0.9" height="1.9" fill="#e0c050"/><rect x="1277.7" y="193.6" width="1.9" height="1.6" fill="#f0a040"/><rect x="1276.0" y="208.8" width="1.3" height="1.5" fill="#f0a040"/><rect x="1229.4" y="160.5" width="1.2" height="1.0" fill="#70c8d0"/><rect x="1242.2" y="202.0" width="1.1" height="2.0" fill="#a82810"/><rect x="1213.2" y="182.3" width="1.2" height="1.7" fill="#e07020"/><rect x="1235.1" y="188.5" width="1.3" height="0.9" fill="#c84018"/><rect x="1208.1" y="193.9" width="1.9" height="1.0" fill="#f0a030"/><rect x="1278.5" y="178.2" width="1.2" height="1.2" fill="#c84018"/><rect x="1217.4" y="204.5" width="2.0" height="1.7" fill="#f0a030"/><rect x="1243.8" y="224.2" width="1.7" height="1.3" fill="#c84018"/><rect x="1209.3" y="189.5" width="1.1" height="1.7" fill="#e07020"/><rect x="1247.4" y="224.4" width="1.8" height="1.6" fill="#d86028"/><rect x="1214.2" y="186.8" width="1.1" height="2.0" fill="#e07020"/><rect x="1271.9" y="219.2" width="1.0" height="1.6" fill="#c84018"/><rect x="1277.6" y="161.5" width="1.3" height="1.8" fill="#e8c050"/><rect x="1277.4" y="224.6" width="1.5" height="1.2" fill="#e8c050"/><rect x="1262.4" y="219.3" width="0.8" height="1.5" fill="#d86028"/><rect x="1211.1" y="202.4" width="1.5" height="1.2" fill="#e07020"/><rect x="1280.4" y="235.8" width="1.0" height="1.5" fill="#f0a040"/><rect x="1215.7" y="170.5" width="1.6" height="1.5" fill="#f0a030"/><rect x="1221.7" y="196.0" width="1.6" height="1.5" fill="#f09030"/><rect x="1245.0" y="227.6" width="1.9" height="0.8" fill="#c84018"/><rect x="1278.6" y="178.5" width="1.8" height="1.9" fill="#e8c050"/><rect x="1239.1" y="214.5" width="1.8" height="1.2" fill="#c84018"/><linearGradient id="cy" x1="0" y1="0" x2="0" y2="1"><stop offset="0" stop-color="#f0a040"/><stop offset="0.025" stop-color="#80d8a8"/><stop offset="0.1" stop-color="#62bcd8"/><stop offset="0.38" stop-color="#72ccc4"/><stop offset="0.55" stop-color="#88dc9c"/><stop offset="0.75" stop-color="#a8e07c"/><stop offset="0.82" stop-color="#e6d050"/><stop offset="0.92" stop-color="#f0a038"/><stop offset="1" stop-color="#d85a20"/></linearGradient><rect x="1282" y="160" width="157" height="80" fill="url(#cy)"/><rect x="1282" y="160" width="157" height="50" filter="url(#spk)" opacity="0.35"/><rect x="1282" y="192.2" width="157" height="1.4" fill="#e89a40"/><rect x="1282" y="196.2" width="70" height="4.6" fill="#7e1a0c"/><linearGradient id="hl" x1="0" y1="0" x2="1" y2="0"><stop offset="0" stop-color="#a02a10"/><stop offset="0.3" stop-color="#d86a28"/><stop offset="0.7" stop-color="#e0a040"/><stop offset="1" stop-color="#90b070"/></linearGradient><rect x="1352" y="196.2" width="87" height="4.6" fill="url(#hl)"/><rect x="1352" y="196.2" width="87" height="1.3" fill="#7e1a0c"/><rect x="1352" y="199.5" width="87" height="1.3" fill="#7e1a0c"/><rect x="1282" y="202" width="157" height="1.3" fill="#e8a040" opacity="0.8"/><rect x="1282" y="224" width="157" height="1.5" fill="#d87030"/><rect x="1345" y="160" width="7" height="80" fill="#eca848" opacity="0.75"/><path d="M1345 191 L1352 191 L1349.5 198 L1352 207 L1345 207 L1347.5 198 Z" fill="#7e1a0c"/><rect x="1346" y="228" width="5" height="12" fill="#8a1c0c" opacity="0.8"/><rect x="1316" y="203" width="1.5" height="22" fill="#d07030" opacity="0.5"/><rect x="1389" y="203" width="2" height="22" fill="#d07030" opacity="0.5"/><rect x="1316" y="225" width="1.5" height="15" fill="#8a1c0c" opacity="0.9"/><rect x="1389" y="225" width="2" height="15" fill="#8a1c0c" opacity="0.9"/><rect x="1282" y="232" width="157" height="8" filter="url(#spk)" opacity="0.0"/><linearGradient id="bt" x1="0" y1="0" x2="0" y2="1"><stop offset="0" stop-color="#c03814" stop-opacity="0"/><stop offset="0.5" stop-color="#a82a10" stop-opacity="0.45"/><stop offset="1" stop-color="#7a170c" stop-opacity="0.75"/></linearGradient><rect x="304" y="230" width="898" height="10" fill="url(#bt)"/><rect x="306" y="160" width="1.3" height="74" fill="#a8e070" opacity="0.35"/><rect x="310" y="160" width="1.3" height="74" fill="#a8e070" opacity="0.3"/><rect x="314" y="160" width="1.3" height="74" fill="#a8e070" opacity="0.4"/><rect x="318" y="160" width="1.3" height="74" fill="#a8e070" opacity="0.35"/><rect x="321" y="160" width="1.3" height="74" fill="#a8e070" opacity="0.5"/><rect x="324" y="160" width="1.3" height="74" fill="#a8e070" opacity="0.7"/><rect x="327" y="160" width="1.3" height="74" fill="#a8e070" opacity="0.4"/><rect x="345" y="160" width="1.3" height="74" fill="#a8e070" opacity="0.4"/><rect x="356" y="160" width="1.3" height="74" fill="#a8e070" opacity="0.45"/><rect x="365" y="160" width="1.3" height="74" fill="#a8e070" opacity="0.5"/><rect x="377" y="160" width="1.3" height="74" fill="#a8e070" opacity="0.4"/><rect x="438" y="160" width="1.3" height="74" fill="#a8e070" opacity="0.35"/><rect x="476" y="160" width="1.3" height="74" fill="#a8e070" opacity="0.5"/><rect x="486" y="160" width="1.3" height="74" fill="#a8e070" opacity="0.4"/><rect x="527" y="160" width="1.3" height="74" fill="#a8e070" opacity="0.5"/><rect x="571" y="160" width="1.3" height="74" fill="#a8e070" opacity="0.35"/><rect x="596" y="160" width="1.3" height="74" fill="#a8e070" opacity="0.35"/><rect x="635" y="160" width="1.3" height="74" fill="#a8e070" opacity="0.9"/><rect x="641" y="160" width="1.3" height="74" fill="#a8e070" opacity="0.7"/><rect x="643" y="160" width="1.3" height="74" fill="#a8e070" opacity="0.6"/><rect x="663" y="160" width="1.3" height="74" fill="#a8e070" opacity="0.5"/><rect x="706" y="160" width="1.3" height="74" fill="#a8e070" opacity="0.45"/><rect x="724" y="160" width="1.3" height="74" fill="#a8e070" opacity="0.4"/><rect x="757" y="160" width="1.3" height="74" fill="#a8e070" opacity="0.9"/><rect x="778" y="160" width="1.3" height="74" fill="#a8e070" opacity="0.8"/><rect x="876" y="160" width="1.3" height="74" fill="#a8e070" opacity="0.7"/><rect x="909" y="160" width="1.3" height="74" fill="#a8e070" opacity="0.6"/><rect x="929" y="160" width="1.3" height="74" fill="#a8e070" opacity="0.5"/><rect x="957" y="160" width="1.3" height="74" fill="#a8e070" opacity="0.5"/><rect x="977" y="160" width="1.3" height="74" fill="#a8e070" opacity="0.7"/><rect x="1053" y="160" width="1.3" height="74" fill="#a8e070" opacity="0.45"/><rect x="1069" y="160" width="1.3" height="74" fill="#a8e070" opacity="0.5"/><rect x="1085" y="160" width="1.3" height="74" fill="#a8e070" opacity="0.5"/><rect x="1137" y="160" width="1.3" height="74" fill="#a8e070" opacity="0.7"/><rect x="1183" y="160" width="1.3" height="74" fill="#a8e070" opacity="0.5"/><rect x="1199" y="160" width="1.3" height="74" fill="#a8e070" opacity="0.6"/><rect x="304" y="160" width="898" height="1.2" fill="#3a2448" opacity="0.6"/>
<rect x="304" y="221.6" width="2.2" height="18.4" fill="url(#wr)"/><rect x="306" y="226.9" width="2.2" height="13.1" fill="url(#wr)"/><rect x="308" y="226.3" width="2.2" height="13.7" fill="url(#wr)"/><rect x="310" y="224.8" width="2.2" height="15.2" fill="url(#wr)"/><rect x="312" y="222.2" width="2.2" height="17.8" fill="url(#wr)"/><rect x="314" y="227.9" width="2.2" height="12.1" fill="url(#wr)"/><rect x="316" y="228.1" width="2.2" height="11.9" fill="url(#wr)"/><rect x="318" y="225.1" width="2.2" height="14.9" fill="url(#wr)"/><rect x="320" y="225.1" width="2.2" height="14.9" fill="url(#wr)"/><rect x="322" y="222.4" width="2.2" height="17.6" fill="url(#wr)"/><rect x="324" y="220.0" width="2.2" height="20.0" fill="url(#wr)"/><rect x="326" y="229.7" width="2.2" height="10.3" fill="url(#wr)"/><rect x="328" y="231.9" width="2.2" height="8.1" fill="url(#wr)"/><rect x="330" y="226.7" width="2.2" height="13.3" fill="url(#wr)"/><rect x="375" y="242.2" width="75" height="2.6" rx="1.2" fill="#d08c2c" stroke="#5b4020" stroke-width="0.8"/><rect x="678.7" y="242.2" width="77.5" height="2.6" rx="1.2" fill="#d08c2c" stroke="#5b4020" stroke-width="0.8"/><rect x="985.2" y="242.2" width="99.0" height="2.6" rx="1.2" fill="#d08c2c" stroke="#5b4020" stroke-width="0.8"/><rect x="456" y="244" width="167.10000000000002" height="2.4" rx="1.2" fill="#4c1a86" stroke="#2a1450" stroke-width="0.8"/><rect x="847.5" y="244" width="128.5" height="2.4" rx="1.2" fill="#4c1a86" stroke="#2a1450" stroke-width="0.8"/><rect x="1099" y="244" width="82.90000000000009" height="2.4" rx="1.2" fill="#4c1a86" stroke="#2a1450" stroke-width="0.8"/><line x1="365.9" y1="255.6" x2="365.9" y2="267.2" stroke="#c4c4c4" stroke-width="1.3"/><line x1="372.2" y1="255.6" x2="372.2" y2="267.2" stroke="#c4c4c4" stroke-width="1.3"/><line x1="372.2" y1="255.6" x2="372.2" y2="267.2" stroke="#c4c4c4" stroke-width="1.3"/><line x1="430.5" y1="255.6" x2="430.5" y2="267.2" stroke="#c4c4c4" stroke-width="1.3"/><line x1="430.5" y1="255.6" x2="430.5" y2="267.2" stroke="#c4c4c4" stroke-width="1.3"/><line x1="437.7" y1="255.6" x2="437.7" y2="267.2" stroke="#c4c4c4" stroke-width="1.3"/><line x1="437.7" y1="255.6" x2="437.7" y2="267.2" stroke="#c4c4c4" stroke-width="1.3"/><line x1="441.7" y1="255.6" x2="441.7" y2="261.4" stroke="#c4c4c4" stroke-width="1.3"/><line x1="441.7" y1="255.6" x2="441.7" y2="261.4" stroke="#c4c4c4" stroke-width="1.3"/><line x1="446.4" y1="255.6" x2="446.4" y2="261.4" stroke="#c4c4c4" stroke-width="1.3"/><line x1="446.4" y1="255.6" x2="446.4" y2="261.4" stroke="#c4c4c4" stroke-width="1.3"/><line x1="454.6" y1="255.6" x2="454.6" y2="267.2" stroke="#c4c4c4" stroke-width="1.3"/><line x1="456.1" y1="255.6" x2="456.1" y2="267.2" stroke="#c4c4c4" stroke-width="1.3"/><line x1="477.2" y1="255.6" x2="477.2" y2="273.0" stroke="#c4c4c4" stroke-width="1.3"/><line x1="477.2" y1="255.6" x2="477.2" y2="273.0" stroke="#c4c4c4" stroke-width="1.3"/><line x1="526.8" y1="255.6" x2="526.8" y2="267.2" stroke="#c4c4c4" stroke-width="1.3"/><line x1="526.8" y1="255.6" x2="526.8" y2="267.2" stroke="#c4c4c4" stroke-width="1.3"/><line x1="567.8" y1="255.6" x2="567.8" y2="261.4" stroke="#c4c4c4" stroke-width="1.3"/><line x1="573.1" y1="255.6" x2="573.1" y2="261.4" stroke="#c4c4c4" stroke-width="1.3"/><line x1="578.7" y1="255.6" x2="578.7" y2="261.4" stroke="#c4c4c4" stroke-width="1.3"/><line x1="578.7" y1="255.6" x2="578.7" y2="261.4" stroke="#c4c4c4" stroke-width="1.3"/><line x1="583.8" y1="255.6" x2="583.8" y2="261.4" stroke="#c4c4c4" stroke-width="1.3"/><line x1="583.8" y1="255.6" x2="583.8" y2="261.4" stroke="#c4c4c4" stroke-width="1.3"/><line x1="591.5" y1="255.6" x2="591.5" y2="261.4" stroke="#c4c4c4" stroke-width="1.3"/><line x1="594.4" y1="255.6" x2="594.4" y2="261.4" stroke="#c4c4c4" stroke-width="1.3"/><line x1="613.8" y1="255.6" x2="613.8" y2="261.4" stroke="#c4c4c4" stroke-width="1.3"/><line x1="613.8" y1="255.6" x2="613.8" y2="261.4" stroke="#c4c4c4" stroke-width="1.3"/><line x1="620.5" y1="255.6" x2="620.5" y2="261.4" stroke="#c4c4c4" stroke-width="1.3"/><line x1="620.5" y1="255.6" x2="620.5" y2="261.4" stroke="#c4c4c4" stroke-width="1.3"/><line x1="635.2" y1="255.6" x2="635.2" y2="273.0" stroke="#c4c4c4" stroke-width="1.3"/><line x1="676.5" y1="255.6" x2="676.5" y2="267.2" stroke="#c4c4c4" stroke-width="1.3"/><line x1="706.2" y1="255.6" x2="706.2" y2="267.2" stroke="#c4c4c4" stroke-width="1.3"/><line x1="706.2" y1="255.6" x2="706.2" y2="267.2" stroke="#c4c4c4" stroke-width="1.3"/><line x1="757.8" y1="255.6" x2="757.8" y2="278.1" stroke="#c4c4c4" stroke-width="1.3"/><line x1="767.1" y1="255.6" x2="767.1" y2="267.2" stroke="#c4c4c4" stroke-width="1.3"/><line x1="778.2" y1="255.6" x2="778.2" y2="267.2" stroke="#c4c4c4" stroke-width="1.3"/><line x1="782.4" y1="255.6" x2="782.4" y2="267.2" stroke="#c4c4c4" stroke-width="1.3"/><line x1="797.6" y1="255.6" x2="797.6" y2="261.4" stroke="#c4c4c4" stroke-width="1.3"/><line x1="797.6" y1="255.6" x2="797.6" y2="261.4" stroke="#c4c4c4" stroke-width="1.3"/><line x1="806.1" y1="255.6" x2="806.1" y2="261.4" stroke="#c4c4c4" stroke-width="1.3"/><line x1="806.1" y1="255.6" x2="806.1" y2="261.4" stroke="#c4c4c4" stroke-width="1.3"/><line x1="820.1" y1="255.6" x2="820.1" y2="261.4" stroke="#c4c4c4" stroke-width="1.3"/><line x1="820.1" y1="255.6" x2="820.1" y2="261.4" stroke="#c4c4c4" stroke-width="1.3"/><line x1="826.0" y1="255.6" x2="826.0" y2="261.4" stroke="#c4c4c4" stroke-width="1.3"/><line x1="826.0" y1="255.6" x2="826.0" y2="261.4" stroke="#c4c4c4" stroke-width="1.3"/><line x1="841.9" y1="255.6" x2="841.9" y2="261.4" stroke="#c4c4c4" stroke-width="1.3"/><line x1="841.9" y1="255.6" x2="841.9" y2="261.4" stroke="#c4c4c4" stroke-width="1.3"/><line x1="900.9" y1="255.6" x2="900.9" y2="267.2" stroke="#c4c4c4" stroke-width="1.3"/><line x1="900.9" y1="255.6" x2="900.9" y2="267.2" stroke="#c4c4c4" stroke-width="1.3"/><line x1="957.7" y1="255.6" x2="957.7" y2="261.4" stroke="#c4c4c4" stroke-width="1.3"/><line x1="957.7" y1="255.6" x2="957.7" y2="261.4" stroke="#c4c4c4" stroke-width="1.3"/><line x1="977.5" y1="255.6" x2="977.5" y2="261.4" stroke="#c4c4c4" stroke-width="1.3"/><line x1="980.4" y1="255.6" x2="980.4" y2="267.2" stroke="#c4c4c4" stroke-width="1.3"/><line x1="1054.1" y1="255.6" x2="1054.1" y2="261.4" stroke="#c4c4c4" stroke-width="1.3"/><line x1="1054.1" y1="255.6" x2="1054.1" y2="261.4" stroke="#c4c4c4" stroke-width="1.3"/><line x1="1078.3" y1="255.6" x2="1078.3" y2="261.4" stroke="#c4c4c4" stroke-width="1.3"/><line x1="1078.3" y1="255.6" x2="1078.3" y2="261.4" stroke="#c4c4c4" stroke-width="1.3"/><line x1="1085.5" y1="255.6" x2="1085.5" y2="261.4" stroke="#c4c4c4" stroke-width="1.3"/><line x1="1086.8" y1="255.6" x2="1086.8" y2="267.2" stroke="#c4c4c4" stroke-width="1.3"/><line x1="1136.6" y1="255.6" x2="1136.6" y2="267.2" stroke="#c4c4c4" stroke-width="1.3"/><line x1="1136.6" y1="255.6" x2="1136.6" y2="267.2" stroke="#c4c4c4" stroke-width="1.3"/><line x1="1155.0" y1="255.6" x2="1155.0" y2="261.4" stroke="#c4c4c4" stroke-width="1.3"/><line x1="1163.8" y1="255.6" x2="1163.8" y2="261.4" stroke="#c4c4c4" stroke-width="1.3"/><line x1="1169.9" y1="255.6" x2="1169.9" y2="261.4" stroke="#c4c4c4" stroke-width="1.3"/><line x1="1169.9" y1="255.6" x2="1169.9" y2="261.4" stroke="#c4c4c4" stroke-width="1.3"/><line x1="1175.0" y1="255.6" x2="1175.0" y2="261.4" stroke="#c4c4c4" stroke-width="1.3"/><line x1="1175.0" y1="255.6" x2="1175.0" y2="261.4" stroke="#c4c4c4" stroke-width="1.3"/><line x1="1183.5" y1="255.6" x2="1183.5" y2="261.4" stroke="#c4c4c4" stroke-width="1.3"/><line x1="1186.8" y1="255.6" x2="1186.8" y2="267.2" stroke="#c4c4c4" stroke-width="1.3"/><line x1="1199.3" y1="255.6" x2="1199.3" y2="273.0" stroke="#c4c4c4" stroke-width="1.3"/><line x1="440.6" y1="255.6" x2="440.6" y2="261.4" stroke="#c4c4c4" stroke-width="1.3"/><line x1="563.8" y1="261.4" x2="563.8" y2="273.0" stroke="#c4c4c4" stroke-width="1.3"/><line x1="567.9" y1="255.6" x2="567.9" y2="261.4" stroke="#c4c4c4" stroke-width="1.3"/><line x1="575.0" y1="255.6" x2="575.0" y2="261.4" stroke="#c4c4c4" stroke-width="1.3"/><line x1="622.1" y1="255.6" x2="622.1" y2="261.4" stroke="#c4c4c4" stroke-width="1.3"/><line x1="793.5" y1="261.4" x2="793.5" y2="273.0" stroke="#c4c4c4" stroke-width="1.3"/><line x1="846.6" y1="261.4" x2="846.6" y2="273.0" stroke="#c4c4c4" stroke-width="1.3"/><line x1="941.1" y1="261.4" x2="941.1" y2="273.0" stroke="#c4c4c4" stroke-width="1.3"/><line x1="975.8" y1="255.6" x2="975.8" y2="261.4" stroke="#c4c4c4" stroke-width="1.3"/><line x1="1023.6" y1="261.4" x2="1023.6" y2="273.0" stroke="#c4c4c4" stroke-width="1.3"/><line x1="1023.6" y1="261.4" x2="1023.6" y2="273.0" stroke="#c4c4c4" stroke-width="1.3"/><line x1="1045.0" y1="261.4" x2="1045.0" y2="273.0" stroke="#c4c4c4" stroke-width="1.3"/><line x1="1083.5" y1="255.6" x2="1083.5" y2="261.4" stroke="#c4c4c4" stroke-width="1.3"/><line x1="1153.7" y1="255.6" x2="1153.7" y2="261.4" stroke="#c4c4c4" stroke-width="1.3"/><line x1="1181.5" y1="255.6" x2="1181.5" y2="261.4" stroke="#c4c4c4" stroke-width="1.3"/><line x1="348.6" y1="255.6" x2="348.6" y2="267.2" stroke="#c4c4c4" stroke-width="1.3"/><line x1="374.6" y1="267.2" x2="374.6" y2="273.0" stroke="#c4c4c4" stroke-width="1.3"/><line x1="431.0" y1="267.2" x2="431.0" y2="273.0" stroke="#c4c4c4" stroke-width="1.3"/><line x1="431.0" y1="267.2" x2="431.0" y2="273.0" stroke="#c4c4c4" stroke-width="1.3"/><line x1="439.9" y1="261.4" x2="439.9" y2="267.2" stroke="#c4c4c4" stroke-width="1.3"/><line x1="444.8" y1="261.4" x2="444.8" y2="267.2" stroke="#c4c4c4" stroke-width="1.3"/><line x1="458.1" y1="267.2" x2="458.1" y2="273.0" stroke="#c4c4c4" stroke-width="1.3"/><line x1="528.4" y1="267.2" x2="528.4" y2="273.0" stroke="#c4c4c4" stroke-width="1.3"/><line x1="528.4" y1="267.2" x2="528.4" y2="273.0" stroke="#c4c4c4" stroke-width="1.3"/><line x1="578.2" y1="261.4" x2="578.2" y2="267.2" stroke="#c4c4c4" stroke-width="1.3"/><line x1="585.8" y1="261.4" x2="585.8" y2="267.2" stroke="#c4c4c4" stroke-width="1.3"/><line x1="610.3" y1="261.4" x2="610.3" y2="267.2" stroke="#c4c4c4" stroke-width="1.3"/><line x1="610.3" y1="261.4" x2="610.3" y2="267.2" stroke="#c4c4c4" stroke-width="1.3"/><line x1="630.0" y1="267.2" x2="630.0" y2="273.0" stroke="#c4c4c4" stroke-width="1.3"/><line x1="630.8" y1="267.2" x2="630.8" y2="273.0" stroke="#c4c4c4" stroke-width="1.3"/><line x1="659.1" y1="255.6" x2="659.1" y2="267.2" stroke="#c4c4c4" stroke-width="1.3"/><line x1="666.5" y1="255.6" x2="666.5" y2="267.2" stroke="#c4c4c4" stroke-width="1.3"/><line x1="675.0" y1="255.6" x2="675.0" y2="267.2" stroke="#c4c4c4" stroke-width="1.3"/><line x1="677.1" y1="267.2" x2="677.1" y2="273.0" stroke="#c4c4c4" stroke-width="1.3"/><line x1="707.2" y1="267.2" x2="707.2" y2="273.0" stroke="#c4c4c4" stroke-width="1.3"/><line x1="707.2" y1="267.2" x2="707.2" y2="273.0" stroke="#c4c4c4" stroke-width="1.3"/><line x1="767.6" y1="255.6" x2="767.6" y2="267.2" stroke="#c4c4c4" stroke-width="1.3"/><line x1="776.5" y1="255.6" x2="776.5" y2="267.2" stroke="#c4c4c4" stroke-width="1.3"/><line x1="784.2" y1="255.6" x2="784.2" y2="267.2" stroke="#c4c4c4" stroke-width="1.3"/><line x1="785.0" y1="267.2" x2="785.0" y2="273.0" stroke="#c4c4c4" stroke-width="1.3"/><line x1="874.3" y1="267.2" x2="874.3" y2="273.0" stroke="#c4c4c4" stroke-width="1.3"/><line x1="874.3" y1="267.2" x2="874.3" y2="273.0" stroke="#c4c4c4" stroke-width="1.3"/><line x1="902.8" y1="255.6" x2="902.8" y2="267.2" stroke="#c4c4c4" stroke-width="1.3"/><line x1="904.1" y1="267.2" x2="904.1" y2="273.0" stroke="#c4c4c4" stroke-width="1.3"/><line x1="982.9" y1="255.6" x2="982.9" y2="267.2" stroke="#c4c4c4" stroke-width="1.3"/><line x1="984.4" y1="267.2" x2="984.4" y2="273.0" stroke="#c4c4c4" stroke-width="1.3"/><line x1="1088.8" y1="255.6" x2="1088.8" y2="267.2" stroke="#c4c4c4" stroke-width="1.3"/><line x1="1098.2" y1="267.2" x2="1098.2" y2="273.0" stroke="#c4c4c4" stroke-width="1.3"/><line x1="1137.8" y1="267.2" x2="1137.8" y2="273.0" stroke="#c4c4c4" stroke-width="1.3"/><line x1="1140.5" y1="267.2" x2="1140.5" y2="273.0" stroke="#c4c4c4" stroke-width="1.3"/><line x1="1185.5" y1="255.6" x2="1185.5" y2="267.2" stroke="#c4c4c4" stroke-width="1.3"/><line x1="1195.5" y1="267.2" x2="1195.5" y2="273.0" stroke="#c4c4c4" stroke-width="1.3"/><line x1="376.4" y1="267.2" x2="376.4" y2="273.0" stroke="#c4c4c4" stroke-width="1.3"/><line x1="436.8" y1="255.6" x2="436.8" y2="273.0" stroke="#c4c4c4" stroke-width="1.3"/><line x1="456.6" y1="267.2" x2="456.6" y2="273.0" stroke="#c4c4c4" stroke-width="1.3"/><line x1="524.1" y1="273.0" x2="524.1" y2="278.1" stroke="#c4c4c4" stroke-width="1.3"/><line x1="530.6" y1="267.2" x2="530.6" y2="273.0" stroke="#c4c4c4" stroke-width="1.3"/><line x1="561.2" y1="261.4" x2="561.2" y2="273.0" stroke="#c4c4c4" stroke-width="1.3"/><line x1="572.1" y1="255.6" x2="572.1" y2="273.0" stroke="#c4c4c4" stroke-width="1.3"/><line x1="572.1" y1="255.6" x2="572.1" y2="273.0" stroke="#c4c4c4" stroke-width="1.3"/><line x1="624.6" y1="261.4" x2="624.6" y2="273.0" stroke="#c4c4c4" stroke-width="1.3"/><line x1="633.5" y1="255.6" x2="633.5" y2="273.0" stroke="#c4c4c4" stroke-width="1.3"/><line x1="679.6" y1="267.2" x2="679.6" y2="273.0" stroke="#c4c4c4" stroke-width="1.3"/><line x1="754.5" y1="273.0" x2="754.5" y2="278.1" stroke="#c4c4c4" stroke-width="1.3"/><line x1="786.9" y1="267.2" x2="786.9" y2="273.0" stroke="#c4c4c4" stroke-width="1.3"/><line x1="791.6" y1="261.4" x2="791.6" y2="273.0" stroke="#c4c4c4" stroke-width="1.3"/><line x1="848.5" y1="261.4" x2="848.5" y2="273.0" stroke="#c4c4c4" stroke-width="1.3"/><line x1="899.5" y1="255.6" x2="899.5" y2="273.0" stroke="#c4c4c4" stroke-width="1.3"/><line x1="906.0" y1="267.2" x2="906.0" y2="273.0" stroke="#c4c4c4" stroke-width="1.3"/><line x1="938.6" y1="261.4" x2="938.6" y2="273.0" stroke="#c4c4c4" stroke-width="1.3"/><line x1="986.1" y1="267.2" x2="986.1" y2="273.0" stroke="#c4c4c4" stroke-width="1.3"/><line x1="1043.2" y1="261.4" x2="1043.2" y2="273.0" stroke="#c4c4c4" stroke-width="1.3"/><line x1="1100.0" y1="267.2" x2="1100.0" y2="273.0" stroke="#c4c4c4" stroke-width="1.3"/><line x1="1135.2" y1="267.2" x2="1135.2" y2="273.0" stroke="#c4c4c4" stroke-width="1.3"/><line x1="1142.3" y1="267.2" x2="1142.3" y2="273.0" stroke="#c4c4c4" stroke-width="1.3"/><line x1="1143.8" y1="273.0" x2="1143.8" y2="278.1" stroke="#c4c4c4" stroke-width="1.3"/><line x1="1197.1" y1="267.2" x2="1197.1" y2="273.0" stroke="#c4c4c4" stroke-width="1.3"/><line x1="1197.1" y1="267.2" x2="1197.1" y2="273.0" stroke="#c4c4c4" stroke-width="1.3"/><line x1="502.6" y1="273.0" x2="502.6" y2="278.1" stroke="#c4c4c4" stroke-width="1.3"/><line x1="502.6" y1="273.0" x2="502.6" y2="278.1" stroke="#c4c4c4" stroke-width="1.3"/><line x1="507.2" y1="273.0" x2="507.2" y2="278.1" stroke="#c4c4c4" stroke-width="1.3"/><line x1="507.2" y1="273.0" x2="507.2" y2="278.1" stroke="#c4c4c4" stroke-width="1.3"/><line x1="525.5" y1="273.0" x2="525.5" y2="278.1" stroke="#c4c4c4" stroke-width="1.3"/><line x1="525.5" y1="273.0" x2="525.5" y2="278.1" stroke="#c4c4c4" stroke-width="1.3"/><line x1="712.8" y1="273.0" x2="712.8" y2="278.1" stroke="#c4c4c4" stroke-width="1.3"/><line x1="712.8" y1="273.0" x2="712.8" y2="278.1" stroke="#c4c4c4" stroke-width="1.3"/><line x1="756.2" y1="273.0" x2="756.2" y2="278.1" stroke="#c4c4c4" stroke-width="1.3"/><line x1="756.2" y1="273.0" x2="756.2" y2="278.1" stroke="#c4c4c4" stroke-width="1.3"/><line x1="921.7" y1="273.0" x2="921.7" y2="278.1" stroke="#c4c4c4" stroke-width="1.3"/><line x1="921.7" y1="273.0" x2="921.7" y2="278.1" stroke="#c4c4c4" stroke-width="1.3"/><line x1="927.6" y1="273.0" x2="927.6" y2="278.1" stroke="#c4c4c4" stroke-width="1.3"/><line x1="927.6" y1="273.0" x2="927.6" y2="278.1" stroke="#c4c4c4" stroke-width="1.3"/><line x1="1145.5" y1="273.0" x2="1145.5" y2="278.1" stroke="#c4c4c4" stroke-width="1.3"/><line x1="1152.0" y1="261.4" x2="1152.0" y2="278.1" stroke="#c4c4c4" stroke-width="1.3"/><line x1="349.0" y1="255.6" x2="349.0" y2="267.2" stroke="#c4c4c4" stroke-width="1.3"/><line x1="351.5" y1="255.6" x2="351.5" y2="267.2" stroke="#c4c4c4" stroke-width="1.3"/><line x1="354.0" y1="255.6" x2="354.0" y2="267.2" stroke="#c4c4c4" stroke-width="1.3"/><line x1="356.5" y1="255.6" x2="356.5" y2="267.2" stroke="#c4c4c4" stroke-width="1.3"/><line x1="359.0" y1="255.6" x2="359.0" y2="267.2" stroke="#c4c4c4" stroke-width="1.3"/><line x1="361.5" y1="255.6" x2="361.5" y2="267.2" stroke="#c4c4c4" stroke-width="1.3"/><line x1="364.0" y1="255.6" x2="364.0" y2="267.2" stroke="#c4c4c4" stroke-width="1.3"/><line x1="366.5" y1="255.6" x2="366.5" y2="267.2" stroke="#c4c4c4" stroke-width="1.3"/><line x1="304" y1="279.7" x2="1303" y2="279.7" stroke="#c0c0c0" stroke-width="1.2"/><line x1="502.6" y1="278.1" x2="502.6" y2="278.1" stroke="#0c1550" stroke-width="4.5" stroke-linecap="round"/><line x1="507.2" y1="278.1" x2="507.2" y2="278.1" stroke="#0c1550" stroke-width="4.5" stroke-linecap="round"/><line x1="525.5" y1="278.1" x2="525.5" y2="278.1" stroke="#0c1550" stroke-width="4.5" stroke-linecap="round"/><line x1="712.8" y1="278.1" x2="712.8" y2="278.1" stroke="#0c1550" stroke-width="4.5" stroke-linecap="round"/><line x1="756.2" y1="278.1" x2="756.2" y2="278.1" stroke="#0c1550" stroke-width="4.5" stroke-linecap="round"/><line x1="921.7" y1="278.1" x2="921.7" y2="278.1" stroke="#0c1550" stroke-width="4.5" stroke-linecap="round"/><line x1="927.6" y1="278.1" x2="927.6" y2="278.1" stroke="#0c1550" stroke-width="4.5" stroke-linecap="round"/><line x1="1145.5" y1="278.1" x2="1152.0" y2="278.1" stroke="#0c1550" stroke-width="4.5" stroke-linecap="round"/><line x1="376.4" y1="273.0" x2="436.8" y2="273.0" stroke="#1f55c4" stroke-width="4.5" stroke-linecap="round"/><line x1="456.6" y1="273.0" x2="524.1" y2="273.0" stroke="#1f55c4" stroke-width="4.5" stroke-linecap="round"/><line x1="530.6" y1="273.0" x2="561.2" y2="273.0" stroke="#1f55c4" stroke-width="4.5" stroke-linecap="round"/><line x1="572.1" y1="273.0" x2="572.1" y2="273.0" stroke="#1f55c4" stroke-width="4.5" stroke-linecap="round"/><line x1="624.6" y1="273.0" x2="633.5" y2="273.0" stroke="#1f55c4" stroke-width="4.5" stroke-linecap="round"/><line x1="679.6" y1="273.0" x2="754.5" y2="273.0" stroke="#1f55c4" stroke-width="4.5" stroke-linecap="round"/><line x1="786.9" y1="273.0" x2="791.6" y2="273.0" stroke="#1f55c4" stroke-width="4.5" stroke-linecap="round"/><line x1="848.5" y1="273.0" x2="899.5" y2="273.0" stroke="#1f55c4" stroke-width="4.5" stroke-linecap="round"/><line x1="906.0" y1="273.0" x2="938.6" y2="273.0" stroke="#1f55c4" stroke-width="4.5" stroke-linecap="round"/><line x1="986.1" y1="273.0" x2="1043.2" y2="273.0" stroke="#1f55c4" stroke-width="4.5" stroke-linecap="round"/><line x1="1100.0" y1="273.0" x2="1135.2" y2="273.0" stroke="#1f55c4" stroke-width="4.5" stroke-linecap="round"/><line x1="1142.3" y1="273.0" x2="1143.8" y2="273.0" stroke="#1f55c4" stroke-width="4.5" stroke-linecap="round"/><line x1="1197.1" y1="273.0" x2="1197.1" y2="273.0" stroke="#1f55c4" stroke-width="4.5" stroke-linecap="round"/><line x1="348.6" y1="267.2" x2="374.6" y2="267.2" stroke="#5fbfee" stroke-width="4.5" stroke-linecap="round"/><line x1="431.0" y1="267.2" x2="431.0" y2="267.2" stroke="#5fbfee" stroke-width="4.5" stroke-linecap="round"/><line x1="439.9" y1="267.2" x2="444.8" y2="267.2" stroke="#5fbfee" stroke-width="4.5" stroke-linecap="round"/><line x1="451.9" y1="267.2" x2="458.1" y2="267.2" stroke="#5fbfee" stroke-width="4.5" stroke-linecap="round"/><line x1="528.4" y1="267.2" x2="528.4" y2="267.2" stroke="#5fbfee" stroke-width="4.5" stroke-linecap="round"/><line x1="578.2" y1="267.2" x2="585.8" y2="267.2" stroke="#5fbfee" stroke-width="4.5" stroke-linecap="round"/><line x1="610.3" y1="267.2" x2="610.3" y2="267.2" stroke="#5fbfee" stroke-width="4.5" stroke-linecap="round"/><line x1="630.0" y1="267.2" x2="630.8" y2="267.2" stroke="#5fbfee" stroke-width="4.5" stroke-linecap="round"/><line x1="659.1" y1="267.2" x2="666.5" y2="267.2" stroke="#5fbfee" stroke-width="4.5" stroke-linecap="round"/><line x1="675.0" y1="267.2" x2="677.1" y2="267.2" stroke="#5fbfee" stroke-width="4.5" stroke-linecap="round"/><line x1="707.2" y1="267.2" x2="707.2" y2="267.2" stroke="#5fbfee" stroke-width="4.5" stroke-linecap="round"/><line x1="767.6" y1="267.2" x2="776.5" y2="267.2" stroke="#5fbfee" stroke-width="4.5" stroke-linecap="round"/><line x1="784.2" y1="267.2" x2="785.0" y2="267.2" stroke="#5fbfee" stroke-width="4.5" stroke-linecap="round"/><line x1="874.3" y1="267.2" x2="874.3" y2="267.2" stroke="#5fbfee" stroke-width="4.5" stroke-linecap="round"/><line x1="902.8" y1="267.2" x2="904.1" y2="267.2" stroke="#5fbfee" stroke-width="4.5" stroke-linecap="round"/><line x1="982.9" y1="267.2" x2="984.4" y2="267.2" stroke="#5fbfee" stroke-width="4.5" stroke-linecap="round"/><line x1="1088.8" y1="267.2" x2="1098.2" y2="267.2" stroke="#5fbfee" stroke-width="4.5" stroke-linecap="round"/><line x1="1137.8" y1="267.2" x2="1140.5" y2="267.2" stroke="#5fbfee" stroke-width="4.5" stroke-linecap="round"/><line x1="1185.5" y1="267.2" x2="1195.5" y2="267.2" stroke="#5fbfee" stroke-width="4.5" stroke-linecap="round"/><line x1="440.6" y1="261.4" x2="449.4" y2="261.4" stroke="#e6393e" stroke-width="4.5" stroke-linecap="round"/><line x1="563.8" y1="261.4" x2="567.9" y2="261.4" stroke="#e6393e" stroke-width="4.5" stroke-linecap="round"/><line x1="575.0" y1="261.4" x2="622.1" y2="261.4" stroke="#e6393e" stroke-width="4.5" stroke-linecap="round"/><line x1="793.5" y1="261.4" x2="846.6" y2="261.4" stroke="#e6393e" stroke-width="4.5" stroke-linecap="round"/><line x1="941.1" y1="261.4" x2="975.8" y2="261.4" stroke="#e6393e" stroke-width="4.5" stroke-linecap="round"/><line x1="1023.6" y1="261.4" x2="1023.6" y2="261.4" stroke="#e6393e" stroke-width="4.5" stroke-linecap="round"/><line x1="1045.0" y1="261.4" x2="1083.5" y2="261.4" stroke="#e6393e" stroke-width="4.5" stroke-linecap="round"/><line x1="1153.7" y1="261.4" x2="1181.5" y2="261.4" stroke="#e6393e" stroke-width="4.5" stroke-linecap="round"/><line x1="306.2" y1="255.6" x2="365.9" y2="255.6" stroke="#5aa85a" stroke-width="4.5" stroke-linecap="round"/><line x1="372.2" y1="255.6" x2="372.2" y2="255.6" stroke="#5aa85a" stroke-width="4.5" stroke-linecap="round"/><line x1="430.5" y1="255.6" x2="430.5" y2="255.6" stroke="#5aa85a" stroke-width="4.5" stroke-linecap="round"/><line x1="437.7" y1="255.6" x2="437.7" y2="255.6" stroke="#5aa85a" stroke-width="4.5" stroke-linecap="round"/><line x1="441.7" y1="255.6" x2="441.7" y2="255.6" stroke="#5aa85a" stroke-width="4.5" stroke-linecap="round"/><line x1="446.4" y1="255.6" x2="446.4" y2="255.6" stroke="#5aa85a" stroke-width="4.5" stroke-linecap="round"/><line x1="454.6" y1="255.6" x2="456.1" y2="255.6" stroke="#5aa85a" stroke-width="4.5" stroke-linecap="round"/><line x1="477.2" y1="255.6" x2="477.2" y2="255.6" stroke="#5aa85a" stroke-width="4.5" stroke-linecap="round"/><line x1="526.8" y1="255.6" x2="526.8" y2="255.6" stroke="#5aa85a" stroke-width="4.5" stroke-linecap="round"/><line x1="567.8" y1="255.6" x2="573.1" y2="255.6" stroke="#5aa85a" stroke-width="4.5" stroke-linecap="round"/><line x1="578.7" y1="255.6" x2="578.7" y2="255.6" stroke="#5aa85a" stroke-width="4.5" stroke-linecap="round"/><line x1="583.8" y1="255.6" x2="583.8" y2="255.6" stroke="#5aa85a" stroke-width="4.5" stroke-linecap="round"/><line x1="591.5" y1="255.6" x2="594.4" y2="255.6" stroke="#5aa85a" stroke-width="4.5" stroke-linecap="round"/><line x1="613.8" y1="255.6" x2="613.8" y2="255.6" stroke="#5aa85a" stroke-width="4.5" stroke-linecap="round"/><line x1="620.5" y1="255.6" x2="620.5" y2="255.6" stroke="#5aa85a" stroke-width="4.5" stroke-linecap="round"/><line x1="635.2" y1="255.6" x2="676.5" y2="255.6" stroke="#5aa85a" stroke-width="4.5" stroke-linecap="round"/><line x1="706.2" y1="255.6" x2="706.2" y2="255.6" stroke="#5aa85a" stroke-width="4.5" stroke-linecap="round"/><line x1="757.8" y1="255.6" x2="767.1" y2="255.6" stroke="#5aa85a" stroke-width="4.5" stroke-linecap="round"/><line x1="778.2" y1="255.6" x2="782.4" y2="255.6" stroke="#5aa85a" stroke-width="4.5" stroke-linecap="round"/><line x1="797.6" y1="255.6" x2="797.6" y2="255.6" stroke="#5aa85a" stroke-width="4.5" stroke-linecap="round"/><line x1="806.1" y1="255.6" x2="806.1" y2="255.6" stroke="#5aa85a" stroke-width="4.5" stroke-linecap="round"/><line x1="820.1" y1="255.6" x2="820.1" y2="255.6" stroke="#5aa85a" stroke-width="4.5" stroke-linecap="round"/><line x1="826.0" y1="255.6" x2="826.0" y2="255.6" stroke="#5aa85a" stroke-width="4.5" stroke-linecap="round"/><line x1="841.9" y1="255.6" x2="841.9" y2="255.6" stroke="#5aa85a" stroke-width="4.5" stroke-linecap="round"/><line x1="900.9" y1="255.6" x2="900.9" y2="255.6" stroke="#5aa85a" stroke-width="4.5" stroke-linecap="round"/><line x1="957.7" y1="255.6" x2="957.7" y2="255.6" stroke="#5aa85a" stroke-width="4.5" stroke-linecap="round"/><line x1="977.5" y1="255.6" x2="980.4" y2="255.6" stroke="#5aa85a" stroke-width="4.5" stroke-linecap="round"/><line x1="1054.1" y1="255.6" x2="1054.1" y2="255.6" stroke="#5aa85a" stroke-width="4.5" stroke-linecap="round"/><line x1="1078.3" y1="255.6" x2="1078.3" y2="255.6" stroke="#5aa85a" stroke-width="4.5" stroke-linecap="round"/><line x1="1085.5" y1="255.6" x2="1086.8" y2="255.6" stroke="#5aa85a" stroke-width="4.5" stroke-linecap="round"/><line x1="1136.6" y1="255.6" x2="1136.6" y2="255.6" stroke="#5aa85a" stroke-width="4.5" stroke-linecap="round"/><line x1="1155.0" y1="255.6" x2="1163.8" y2="255.6" stroke="#5aa85a" stroke-width="4.5" stroke-linecap="round"/><line x1="1169.9" y1="255.6" x2="1169.9" y2="255.6" stroke="#5aa85a" stroke-width="4.5" stroke-linecap="round"/><line x1="1175.0" y1="255.6" x2="1175.0" y2="255.6" stroke="#5aa85a" stroke-width="4.5" stroke-linecap="round"/><line x1="1183.5" y1="255.6" x2="1186.8" y2="255.6" stroke="#5aa85a" stroke-width="4.5" stroke-linecap="round"/><line x1="1199.3" y1="255.6" x2="1435.8" y2="255.6" stroke="#5aa85a" stroke-width="4.5" stroke-linecap="round"/><rect x="304" y="253.35" width="6" height="4.5" fill="#5aa85a"/><rect x="1432" y="253.35" width="7" height="4.5" fill="#5aa85a"/><rect x="303.5" y="249.3" width="1.2" height="1" fill="#c8c8c8"/><rect x="303.5" y="255.1" width="1.2" height="1" fill="#c8c8c8"/><rect x="303.5" y="260.9" width="1.2" height="1" fill="#c8c8c8"/><rect x="303.5" y="266.7" width="1.2" height="1" fill="#c8c8c8"/><rect x="303.5" y="272.5" width="1.2" height="1" fill="#c8c8c8"/><rect x="303.5" y="277.6" width="1.2" height="1" fill="#c8c8c8"/><pattern id="ob" x="304" y="0" width="4.72" height="20" patternUnits="userSpaceOnUse"><rect width="4.72" height="20" fill="#e6ab4e"/><rect x="3.2" width="1.3" height="20" fill="#dea244"/></pattern><rect x="304" y="281.4" width="1135" height="9.9" fill="url(#ob)"/><rect x="304" y="281.4" width="1135" height="1" fill="#a88a5c"/><rect x="304" y="291.3" width="1135" height="10.3" fill="#fff"/><rect x="304" y="301" width="1135" height="1.2" fill="#9a9a9a"/><rect x="303.6" y="281.4" width="1.2" height="20.6" fill="#6a6a6a"/><rect x="1438.2" y="281.4" width="1.2" height="20.6" fill="#8a8a8a"/><rect x="403.0" y="291.5" width="1.3" height="10" fill="#444"/><rect x="503.0" y="291.5" width="1.3" height="10" fill="#444"/><rect x="603.0" y="291.5" width="1.3" height="10" fill="#444"/><rect x="703.0" y="291.5" width="1.3" height="10" fill="#444"/><rect x="803.0" y="291.5" width="1.3" height="10" fill="#444"/><rect x="903.0" y="291.5" width="1.3" height="10" fill="#444"/><rect x="1003.0" y="291.5" width="1.3" height="10" fill="#444"/><rect x="1103.0" y="291.5" width="1.3" height="10" fill="#444"/><rect x="1203.0" y="291.5" width="1.3" height="10" fill="#444"/><rect x="1303.0" y="291.5" width="1.3" height="10" fill="#444"/><rect x="1403.0" y="291.5" width="1.3" height="10" fill="#444"/><rect x="328.4" y="295" width="1.3" height="4.4" fill="#a9adf8"/><rect x="353.4" y="295" width="1.3" height="4.4" fill="#a9adf8"/><rect x="378.4" y="295" width="1.3" height="4.4" fill="#a9adf8"/><rect x="428.4" y="295" width="1.3" height="4.4" fill="#a9adf8"/><rect x="453.4" y="295" width="1.3" height="4.4" fill="#a9adf8"/><rect x="478.4" y="295" width="1.3" height="4.4" fill="#a9adf8"/><rect x="528.4" y="295" width="1.3" height="4.4" fill="#a9adf8"/><rect x="553.4" y="295" width="1.3" height="4.4" fill="#a9adf8"/><rect x="578.4" y="295" width="1.3" height="4.4" fill="#a9adf8"/><rect x="628.4" y="295" width="1.3" height="4.4" fill="#a9adf8"/><rect x="653.4" y="295" width="1.3" height="4.4" fill="#a9adf8"/><rect x="678.4" y="295" width="1.3" height="4.4" fill="#a9adf8"/><rect x="728.4" y="295" width="1.3" height="4.4" fill="#a9adf8"/><rect x="753.4" y="295" width="1.3" height="4.4" fill="#a9adf8"/><rect x="778.4" y="295" width="1.3" height="4.4" fill="#a9adf8"/><rect x="828.4" y="295" width="1.3" height="4.4" fill="#a9adf8"/><rect x="853.4" y="295" width="1.3" height="4.4" fill="#a9adf8"/><rect x="878.4" y="295" width="1.3" height="4.4" fill="#a9adf8"/><rect x="928.4" y="295" width="1.3" height="4.4" fill="#a9adf8"/><rect x="953.4" y="295" width="1.3" height="4.4" fill="#a9adf8"/><rect x="978.4" y="295" width="1.3" height="4.4" fill="#a9adf8"/><rect x="1028.4" y="295" width="1.3" height="4.4" fill="#a9adf8"/><rect x="1053.4" y="295" width="1.3" height="4.4" fill="#a9adf8"/><rect x="1078.4" y="295" width="1.3" height="4.4" fill="#a9adf8"/><rect x="1128.4" y="295" width="1.3" height="4.4" fill="#a9adf8"/><rect x="1153.4" y="295" width="1.3" height="4.4" fill="#a9adf8"/><rect x="1178.4" y="295" width="1.3" height="4.4" fill="#a9adf8"/><rect x="1228.4" y="295" width="1.3" height="4.4" fill="#a9adf8"/><rect x="1253.4" y="295" width="1.3" height="4.4" fill="#a9adf8"/><rect x="1278.4" y="295" width="1.3" height="4.4" fill="#a9adf8"/><rect x="1328.4" y="295" width="1.3" height="4.4" fill="#a9adf8"/><rect x="1353.4" y="295" width="1.3" height="4.4" fill="#a9adf8"/><rect x="1378.4" y="295" width="1.3" height="4.4" fill="#a9adf8"/><rect x="1428.4" y="295" width="1.3" height="4.4" fill="#a9adf8"/></svg>
<div class="a" style="left:304.00px;top:351.00px;width:1135.00px;height:1.00px;background:#ddd;"></div>
<div class="a" style="left:304.6px;top:310.3px;width:83.2px;height:41.7px;background:#fff;border:1px solid #ddd;border-bottom:0;box-sizing:border-box;border-radius:4px 4px 0 0;"></div>
<div class="t" style="left:320.50px;top:324.25px;font-size:14px;line-height:14px;color:#555;">Headers</div>
<div class="t" style="left:406.60px;top:324.25px;font-size:14px;line-height:14px;color:#3d7ab7;">Structure</div>
<div class="t" style="left:498.60px;top:324.25px;font-size:14px;line-height:14px;color:#3d7ab7;">Hypnogram</div>
<div class="t" style="left:605.40px;top:324.25px;font-size:14px;line-height:14px;color:#3d7ab7;">Annots</div>
<div class="t" style="left:683.80px;top:324.25px;font-size:14px;line-height:14px;color:#3d7ab7;">Signals</div>
<div class="t" style="left:763.50px;top:324.25px;font-size:14px;line-height:14px;color:#3d7ab7;">Stats</div>
<div class="t" style="left:830.30px;top:324.25px;font-size:14px;line-height:14px;color:#3d7ab7;">Time/freq</div>
<div class="t" style="left:923.90px;top:324.25px;font-size:14px;line-height:14px;color:#3d7ab7;">Manips</div>
<div class="t" style="left:1003.80px;top:324.25px;font-size:14px;line-height:14px;color:#3d7ab7;">Norms</div>
<div class="t" style="left:1079.70px;top:324.25px;font-size:14px;line-height:14px;color:#3d7ab7;">Luna</div>
<div class="t" style="left:314.60px;top:365.35px;font-size:14px;line-height:14px;font-weight:700;color:#333;">Variable</div>
<svg class="a" style="left:526.7px;top:363px" width="10" height="18"><path d="M5 1.8 L8.8 8.8 L1.2 8.8 Z M5 16.3 L8.8 11.9 L1.2 11.9 Z" fill="#e2e2e2"/></svg>
<div class="t" style="left:555.80px;top:365.35px;font-size:14px;line-height:14px;font-weight:700;color:#333;">Value</div>
<svg class="a" style="left:643.4px;top:363px" width="10" height="18"><path d="M5 1.8 L8.8 8.8 L1.2 8.8 Z M5 16.3 L8.8 11.9 L1.2 11.9 Z" fill="#e2e2e2"/></svg>
<div class="a" style="left:304.00px;top:391.80px;width:358.40px;height:1.20px;background:#a9a9a9;"></div>
<div class="a" style="left:304.00px;top:393.00px;width:358.40px;height:36.40px;background:#f9f9f9;"></div>
<div class="t" style="left:314.20px;top:403.55px;font-size:14px;line-height:14px;color:#333;">EDF type</div>
<div class="t" style="left:555.80px;top:403.55px;font-size:14px;line-height:14px;color:#333;">EDF</div>
<div class="a" style="left:304.00px;top:429.40px;width:358.40px;height:1.00px;background:#ddd;"></div>
<div class="t" style="left:314.20px;top:440.55px;font-size:14px;line-height:14px;color:#333;">Number of signals</div>
<div class="t" style="left:555.80px;top:440.55px;font-size:14px;line-height:14px;color:#333;">2</div>
<div class="a" style="left:304.00px;top:467.00px;width:358.40px;height:36.40px;background:#f9f9f9;"></div>
<div class="a" style="left:304.00px;top:466.40px;width:358.40px;height:1.00px;background:#ddd;"></div>
<div class="t" style="left:314.20px;top:477.55px;font-size:14px;line-height:14px;color:#333;">Start date</div>
<div class="t" style="left:555.80px;top:477.55px;font-size:14px;line-height:14px;color:#333;">01.01.85</div>
<div class="a" style="left:304.00px;top:503.40px;width:358.40px;height:1.00px;background:#ddd;"></div>
<div class="t" style="left:314.20px;top:514.55px;font-size:14px;line-height:14px;color:#333;">Start time</div>
<div class="t" style="left:555.80px;top:514.55px;font-size:14px;line-height:14px;color:#333;">21.58.17</div>
<div class="a" style="left:304.00px;top:541.00px;width:358.40px;height:36.40px;background:#f9f9f9;"></div>
<div class="a" style="left:304.00px;top:540.40px;width:358.40px;height:1.00px;background:#ddd;"></div>
<div class="t" style="left:314.20px;top:551.55px;font-size:14px;line-height:14px;color:#333;">Stop time</div>
<div class="t" style="left:555.80px;top:551.55px;font-size:14px;line-height:14px;color:#333;">09.20.17</div>
<div class="a" style="left:304.00px;top:577.40px;width:358.40px;height:1.00px;background:#ddd;"></div>
<div class="t" style="left:314.20px;top:588.55px;font-size:14px;line-height:14px;color:#333;">Duration (h:m:s)</div>
<div class="t" style="left:555.80px;top:588.55px;font-size:14px;line-height:14px;color:#333;">11:22:00</div>
<div class="a" style="left:304.00px;top:615.00px;width:358.40px;height:36.40px;background:#f9f9f9;"></div>
<div class="a" style="left:304.00px;top:614.40px;width:358.40px;height:1.00px;background:#ddd;"></div>
<div class="t" style="left:314.20px;top:625.55px;font-size:14px;line-height:14px;color:#333;">Duration (sec)</div>
<div class="t" style="left:555.80px;top:625.55px;font-size:14px;line-height:14px;color:#333;">40920</div>
<div class="a" style="left:304.00px;top:651.40px;width:358.40px;height:1.00px;background:#ddd;"></div>
<div class="t" style="left:314.20px;top:662.55px;font-size:14px;line-height:14px;color:#333;">Duration (epochs)</div>
<div class="t" style="left:555.80px;top:662.55px;font-size:14px;line-height:14px;color:#333;">1364</div>
<div class="a" style="left:304.00px;top:689.00px;width:358.40px;height:36.40px;background:#f9f9f9;"></div>
<div class="a" style="left:304.00px;top:688.40px;width:358.40px;height:1.00px;background:#ddd;"></div>
<div class="t" style="left:314.20px;top:699.55px;font-size:14px;line-height:14px;color:#333;">Number of records</div>
<div class="t" style="left:555.80px;top:699.55px;font-size:14px;line-height:14px;color:#333;">40920</div>
<div class="a" style="left:304.00px;top:725.40px;width:358.40px;height:1.00px;background:#ddd;"></div>
<div class="t" style="left:314.20px;top:736.55px;font-size:14px;line-height:14px;color:#333;">Record duration (sec)</div>
<div class="t" style="left:555.80px;top:736.55px;font-size:14px;line-height:14px;color:#333;">1</div>
<div class="a" style="left:304.00px;top:767.00px;width:358.40px;height:1.00px;background:#a9a9a9;"></div>
<div class="t" style="left:729.80px;top:365.35px;font-size:14px;line-height:14px;font-weight:700;color:#333;">Channel</div>
<svg class="a" style="left:819.3px;top:363px" width="10" height="18"><path d="M5 1.8 L8.8 8.8 L1.2 8.8 Z M5 16.3 L8.8 11.9 L1.2 11.9 Z" fill="#e2e2e2"/></svg>
<div class="t" style="left:867.40px;top:365.35px;font-size:14px;line-height:14px;font-weight:700;color:#333;">Unit</div>
<svg class="a" style="left:920.2px;top:363px" width="10" height="18"><path d="M5 1.8 L8.8 8.8 L1.2 8.8 Z M5 16.3 L8.8 11.9 L1.2 11.9 Z" fill="#e2e2e2"/></svg>
<div class="t" style="left:971.80px;top:365.35px;font-size:14px;line-height:14px;font-weight:700;color:#333;">SRate</div>
<svg class="a" style="left:1042.2px;top:363px" width="10" height="18"><path d="M5 1.8 L8.8 8.8 L1.2 8.8 Z M5 16.3 L8.8 11.9 L1.2 11.9 Z" fill="#e2e2e2"/></svg>
<div class="t" style="left:1090.10px;top:365.35px;font-size:14px;line-height:14px;font-weight:700;color:#333;">Min</div>
<svg class="a" style="left:1139.5px;top:363px" width="10" height="18"><path d="M5 1.8 L8.8 8.8 L1.2 8.8 Z M5 16.3 L8.8 11.9 L1.2 11.9 Z" fill="#e2e2e2"/></svg>
<div class="t" style="left:1188.00px;top:365.35px;font-size:14px;line-height:14px;font-weight:700;color:#333;">Max</div>
<svg class="a" style="left:1242.3px;top:363px" width="10" height="18"><path d="M5 1.8 L8.8 8.8 L1.2 8.8 Z M5 16.3 L8.8 11.9 L1.2 11.9 Z" fill="#e2e2e2"/></svg>
<div class="t" style="left:1305.30px;top:365.35px;font-size:14px;line-height:14px;font-weight:700;color:#333;">Transducer</div>
<svg class="a" style="left:1420.0px;top:363px" width="10" height="18"><path d="M5 1.8 L8.8 8.8 L1.2 8.8 Z M5 16.3 L8.8 11.9 L1.2 11.9 Z" fill="#e2e2e2"/></svg>
<div class="a" style="left:692.50px;top:391.80px;width:746.50px;height:1.20px;background:#a9a9a9;"></div>
<div class="a" style="left:692.50px;top:393.00px;width:746.50px;height:36.40px;background:#f9f9f9;"></div>
<div class="a" style="left:692.50px;top:428.90px;width:746.50px;height:1.00px;background:#ddd;"></div>
<div class="t" style="left:747.90px;top:403.55px;font-size:14px;line-height:14px;color:#333;">EEG1</div>
<div class="t" style="left:878.20px;top:403.55px;font-size:14px;line-height:14px;color:#333;">mV</div>
<div class="t" style="left:989.00px;top:403.55px;font-size:14px;line-height:14px;color:#333;">125</div>
<div class="t" style="left:1090.00px;top:403.55px;font-size:14px;line-height:14px;color:#333;">-0.124</div>
<div class="t" style="left:1192.00px;top:403.55px;font-size:14px;line-height:14px;color:#333;">0.125</div>
<div class="t" style="left:1348.50px;top:403.55px;font-size:14px;line-height:14px;color:#333;">.</div>
<div class="t" style="left:747.90px;top:440.55px;font-size:14px;line-height:14px;color:#333;">EEG2</div>
<div class="t" style="left:878.20px;top:440.55px;font-size:14px;line-height:14px;color:#333;">mV</div>
<div class="t" style="left:989.00px;top:440.55px;font-size:14px;line-height:14px;color:#333;">125</div>
<div class="t" style="left:1090.00px;top:440.55px;font-size:14px;line-height:14px;color:#333;">-0.124</div>
<div class="t" style="left:1192.00px;top:440.55px;font-size:14px;line-height:14px;color:#333;">0.125</div>
<div class="t" style="left:1348.50px;top:440.55px;font-size:14px;line-height:14px;color:#333;">.</div>
<div class="a" style="left:692.50px;top:767.00px;width:746.50px;height:1.00px;background:#a9a9a9;"></div>
<div class="a" style="left:304.40px;top:768.00px;width:54.40px;height:33.30px;background:linear-gradient(#fff,#e4e4e4);border:1px solid #adadad;box-sizing:border-box;border-radius:2px;"></div>
<div class="t" style="left:304.40px;top:777.84px;font-size:12px;line-height:12px;color:#222;width:54.40px;text-align:center;">Copy</div>
<div class="a" style="left:692.60px;top:768.00px;width:54.40px;height:33.30px;background:linear-gradient(#fff,#e4e4e4);border:1px solid #adadad;box-sizing:border-box;border-radius:2px;"></div>
<div class="t" style="left:692.60px;top:777.84px;font-size:12px;line-height:12px;color:#222;width:54.40px;text-align:center;">Copy</div>
</body></html>
